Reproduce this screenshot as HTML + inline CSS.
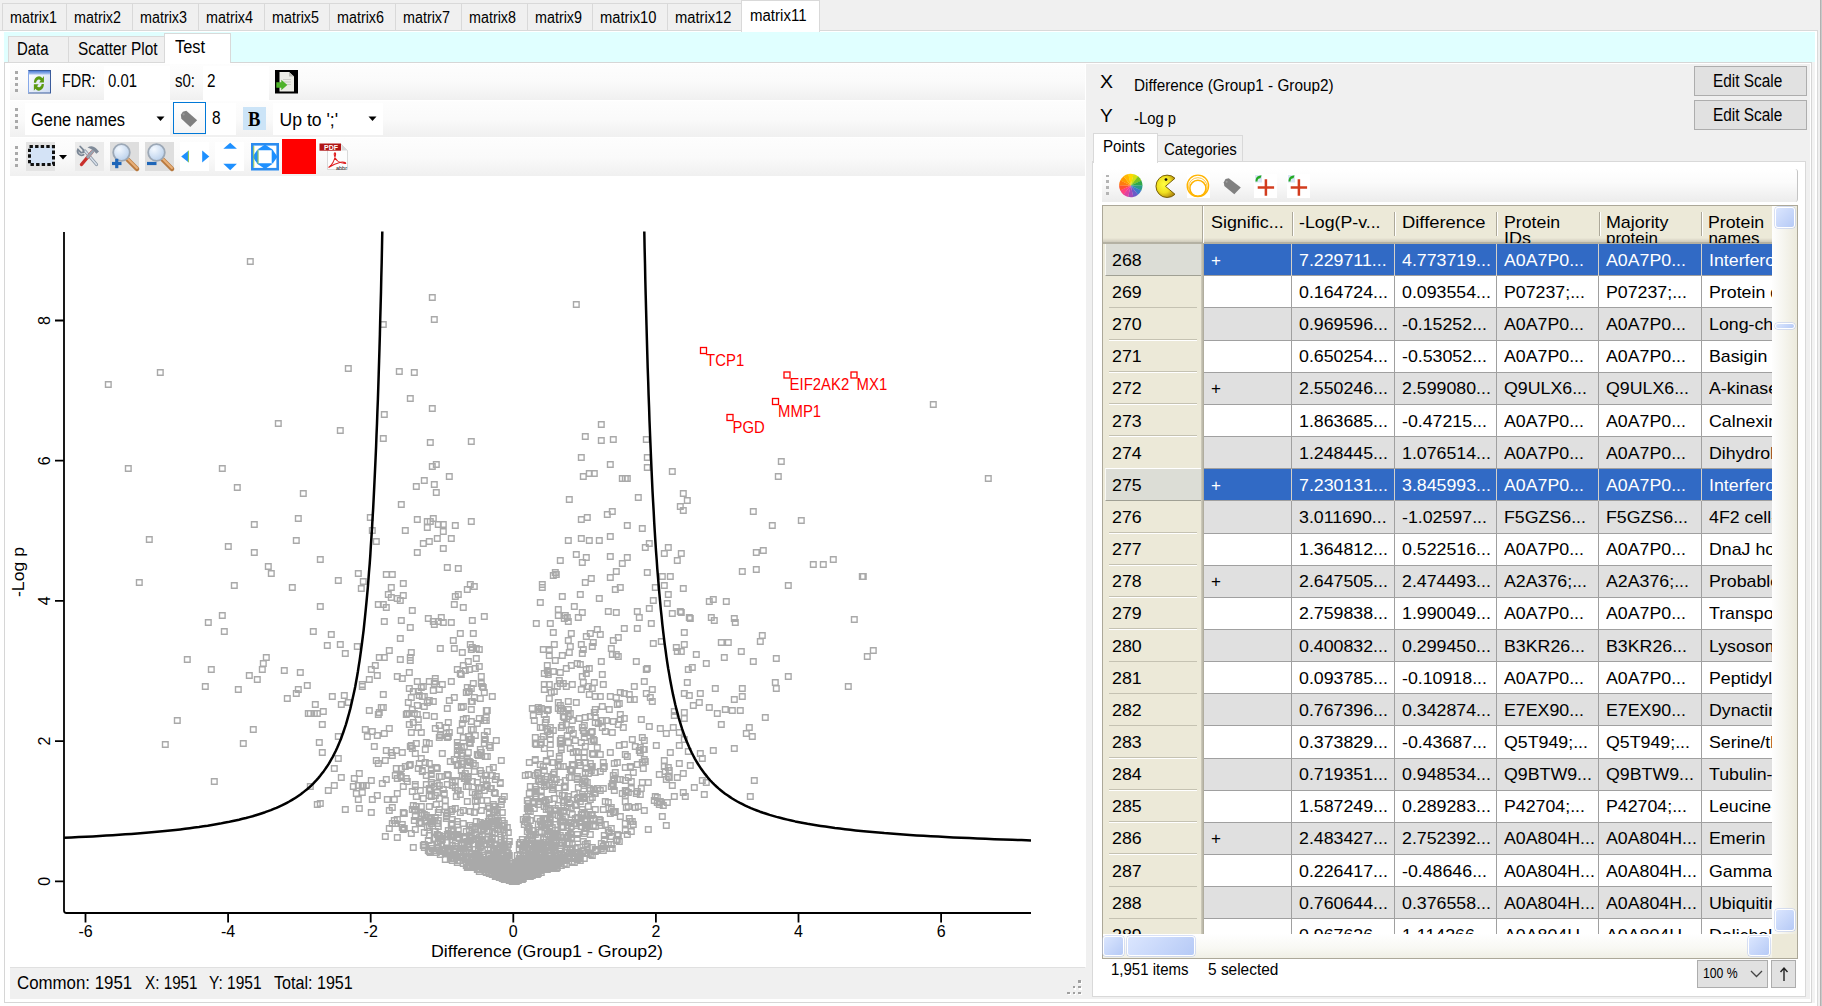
<!DOCTYPE html><html><head><meta charset="utf-8"><title>Volcano plot</title><style>html,body{margin:0;padding:0}
body{width:1822px;height:1006px;background:#f0f0f0;position:relative;overflow:hidden;font-family:"Liberation Sans",sans-serif;}
.t{position:absolute;white-space:pre;transform-origin:0 0;display:block}
.b{position:absolute;box-sizing:border-box}
svg{position:absolute;overflow:visible}
</style></head><body>
<div class="b" style="left:-1.00px;top:29.50px;width:1818.50px;height:990.00px;border:1.3px solid #d9d9d9;background:#fff"></div>
<div class="b" style="left:1820.00px;top:0.00px;width:2.00px;height:1006.00px;background:linear-gradient(90deg,#a6a6a6,#d4d4d4)"></div>
<div class="b" style="left:2.00px;top:3.00px;width:65.00px;height:28.00px;border:1px solid #d9d9d9;background:#f0f0f0"></div>
<span class="t" style="left:10.00px;top:8.90px;font-size:15.80px;line-height:17.65px;color:#000;transform:scaleX(0.9074);">matrix1</span>
<div class="b" style="left:66.00px;top:3.00px;width:67.00px;height:28.00px;border:1px solid #d9d9d9;background:#f0f0f0"></div>
<span class="t" style="left:74.00px;top:8.90px;font-size:15.80px;line-height:17.65px;color:#000;transform:scaleX(0.9074);">matrix2</span>
<div class="b" style="left:132.00px;top:3.00px;width:67.00px;height:28.00px;border:1px solid #d9d9d9;background:#f0f0f0"></div>
<span class="t" style="left:140.00px;top:8.90px;font-size:15.80px;line-height:17.65px;color:#000;transform:scaleX(0.9074);">matrix3</span>
<div class="b" style="left:198.00px;top:3.00px;width:67.00px;height:28.00px;border:1px solid #d9d9d9;background:#f0f0f0"></div>
<span class="t" style="left:206.00px;top:8.90px;font-size:15.80px;line-height:17.65px;color:#000;transform:scaleX(0.9074);">matrix4</span>
<div class="b" style="left:264.00px;top:3.00px;width:66.00px;height:28.00px;border:1px solid #d9d9d9;background:#f0f0f0"></div>
<span class="t" style="left:272.00px;top:8.90px;font-size:15.80px;line-height:17.65px;color:#000;transform:scaleX(0.9074);">matrix5</span>
<div class="b" style="left:329.00px;top:3.00px;width:67.00px;height:28.00px;border:1px solid #d9d9d9;background:#f0f0f0"></div>
<span class="t" style="left:337.00px;top:8.90px;font-size:15.80px;line-height:17.65px;color:#000;transform:scaleX(0.9074);">matrix6</span>
<div class="b" style="left:395.00px;top:3.00px;width:67.00px;height:28.00px;border:1px solid #d9d9d9;background:#f0f0f0"></div>
<span class="t" style="left:403.00px;top:8.90px;font-size:15.80px;line-height:17.65px;color:#000;transform:scaleX(0.9074);">matrix7</span>
<div class="b" style="left:461.00px;top:3.00px;width:67.00px;height:28.00px;border:1px solid #d9d9d9;background:#f0f0f0"></div>
<span class="t" style="left:469.00px;top:8.90px;font-size:15.80px;line-height:17.65px;color:#000;transform:scaleX(0.9074);">matrix8</span>
<div class="b" style="left:527.00px;top:3.00px;width:66.00px;height:28.00px;border:1px solid #d9d9d9;background:#f0f0f0"></div>
<span class="t" style="left:535.00px;top:8.90px;font-size:15.80px;line-height:17.65px;color:#000;transform:scaleX(0.9074);">matrix9</span>
<div class="b" style="left:592.00px;top:3.00px;width:76.00px;height:28.00px;border:1px solid #d9d9d9;background:#f0f0f0"></div>
<span class="t" style="left:600.00px;top:8.90px;font-size:15.80px;line-height:17.65px;color:#000;transform:scaleX(0.9326);">matrix10</span>
<div class="b" style="left:667.00px;top:3.00px;width:75.00px;height:28.00px;border:1px solid #d9d9d9;background:#f0f0f0"></div>
<span class="t" style="left:675.00px;top:8.90px;font-size:15.80px;line-height:17.65px;color:#000;transform:scaleX(0.9326);">matrix12</span>
<div class="b" style="left:741.00px;top:0.00px;width:79.00px;height:32.00px;border:1px solid #d9d9d9;border-bottom:none;background:#fff"></div>
<span class="t" style="left:750.00px;top:6.90px;font-size:15.80px;line-height:17.65px;color:#000;transform:scaleX(0.9510);">matrix11</span>
<div class="b" style="left:4.40px;top:32.00px;width:1810.70px;height:29.60px;background:#e0ffff"></div>
<div class="b" style="left:4.40px;top:61.60px;width:1810.70px;height:941.00px;background:#f3f3f3"></div>
<div class="b" style="left:4.40px;top:61.70px;width:1807.20px;height:941.00px;border:1.4px solid #d6d6d6;background:#fff"></div>
<div class="b" style="left:10.00px;top:64.00px;width:1800.00px;height:934.80px;background:#f0f0f0"></div>
<div class="b" style="left:8.00px;top:36.00px;width:61.00px;height:27.00px;border:1px solid #d9d9d9;background:#f0f0f0"></div>
<span class="t" style="left:16.50px;top:39.11px;font-size:18.00px;line-height:20.11px;color:#000;transform:scaleX(0.8285);">Data</span>
<div class="b" style="left:68.00px;top:36.00px;width:98.00px;height:27.00px;border:1px solid #d9d9d9;background:#f0f0f0"></div>
<span class="t" style="left:77.50px;top:39.11px;font-size:18.00px;line-height:20.11px;color:#000;transform:scaleX(0.8544);">Scatter Plot</span>
<div class="b" style="left:164.00px;top:33.00px;width:67.00px;height:30.00px;border:1px solid #d9d9d9;border-bottom:none;background:#fff"></div>
<span class="t" style="left:175.00px;top:37.21px;font-size:18.00px;line-height:20.11px;color:#000;transform:scaleX(0.9087);">Test</span>
<div class="b" style="left:10.00px;top:64.00px;width:1076.00px;height:903.00px;background:#fff"></div>
<div class="b" style="left:10.00px;top:64.00px;width:1075.00px;height:36.00px;background:linear-gradient(#fdfdfd,#fafafa 50%,#f0f0f0)"></div>
<div class="b" style="left:10.00px;top:101.00px;width:1075.00px;height:36.00px;background:linear-gradient(#fdfdfd,#fafafa 50%,#f0f0f0)"></div>
<div class="b" style="left:10.00px;top:138.00px;width:1075.00px;height:38.00px;background:linear-gradient(#fdfdfd,#fafafa 50%,#f0f0f0)"></div>
<div class="b" style="left:15.00px;top:71.00px;width:3.00px;height:3.00px;background:#a9a9a9"></div>
<div class="b" style="left:15.00px;top:77.00px;width:3.00px;height:3.00px;background:#a9a9a9"></div>
<div class="b" style="left:15.00px;top:83.00px;width:3.00px;height:3.00px;background:#a9a9a9"></div>
<div class="b" style="left:15.00px;top:89.00px;width:3.00px;height:3.00px;background:#a9a9a9"></div>
<div class="b" style="left:15.00px;top:108.00px;width:3.00px;height:3.00px;background:#a9a9a9"></div>
<div class="b" style="left:15.00px;top:114.00px;width:3.00px;height:3.00px;background:#a9a9a9"></div>
<div class="b" style="left:15.00px;top:120.00px;width:3.00px;height:3.00px;background:#a9a9a9"></div>
<div class="b" style="left:15.00px;top:126.00px;width:3.00px;height:3.00px;background:#a9a9a9"></div>
<div class="b" style="left:15.00px;top:146.00px;width:3.00px;height:3.00px;background:#a9a9a9"></div>
<div class="b" style="left:15.00px;top:152.00px;width:3.00px;height:3.00px;background:#a9a9a9"></div>
<div class="b" style="left:15.00px;top:158.00px;width:3.00px;height:3.00px;background:#a9a9a9"></div>
<div class="b" style="left:15.00px;top:164.00px;width:3.00px;height:3.00px;background:#a9a9a9"></div>
<span class="t" style="left:62.00px;top:71.67px;font-size:17.60px;line-height:19.66px;color:#000;transform:scaleX(0.8158);">FDR:</span>
<div class="b" style="left:104.00px;top:66.00px;width:65.50px;height:33.50px;background:#fff"></div>
<span class="t" style="left:108.00px;top:71.67px;font-size:17.60px;line-height:19.66px;color:#000;transform:scaleX(0.8465);">0.01</span>
<span class="t" style="left:175.00px;top:71.67px;font-size:17.60px;line-height:19.66px;color:#000;transform:scaleX(0.8518);">s0:</span>
<div class="b" style="left:203.00px;top:66.00px;width:66.00px;height:33.50px;background:#fff"></div>
<span class="t" style="left:207.00px;top:71.67px;font-size:17.60px;line-height:19.66px;color:#000;transform:scaleX(0.8683);">2</span>
<div class="b" style="left:25.00px;top:103.00px;width:145.00px;height:32.00px;background:#fff"></div>
<span class="t" style="left:31.00px;top:110.67px;font-size:17.60px;line-height:19.66px;color:#000;transform:scaleX(0.9328);">Gene names</span>
<svg style="left:156px;top:116px" width="10" height="6"><path d="M0.5 0.5h8l-4 4.5z" fill="#000"/></svg>
<div class="b" style="left:172.50px;top:102.00px;width:33.30px;height:32.20px;border:1.5px solid #0078d7;background:linear-gradient(#fff,#f4f4f4)"></div>
<div class="b" style="left:205.50px;top:103.00px;width:30.50px;height:32.00px;background:#fff"></div>
<span class="t" style="left:212.30px;top:108.87px;font-size:17.60px;line-height:19.66px;color:#000;transform:scaleX(0.8785);">8</span>
<div class="b" style="left:242.50px;top:107.00px;width:23.00px;height:23.00px;background:#cce4f7"></div>
<span class="t" style="left:248.00px;top:106.89px;font-size:22.00px;line-height:24.57px;color:#000;transform:scaleX(0.8451);font-weight:bold;font-family:'Liberation Serif',serif;">B</span>
<div class="b" style="left:272.50px;top:103.00px;width:110.00px;height:32.00px;background:#fff"></div>
<span class="t" style="left:279.50px;top:110.67px;font-size:17.60px;line-height:19.66px;color:#000;">Up to ';'</span>
<svg style="left:368px;top:116px" width="10" height="6"><path d="M0.5 0.5h8l-4 4.5z" fill="#000"/></svg>
<div class="b" style="left:282.00px;top:139.00px;width:33.50px;height:34.50px;background:#ff0000"></div>
<div class="b" style="left:10.00px;top:966.60px;width:1075.00px;height:32.20px;background:#f0f0f0;border-top:1px solid #e0e0e0"></div>
<span class="t" style="left:17.30px;top:973.87px;font-size:17.60px;line-height:19.66px;color:#000;transform:scaleX(0.9573);">Common: 1951</span>
<span class="t" style="left:145.20px;top:973.87px;font-size:17.60px;line-height:19.66px;color:#000;transform:scaleX(0.8669);">X: 1951</span>
<span class="t" style="left:209.40px;top:973.87px;font-size:17.60px;line-height:19.66px;color:#000;transform:scaleX(0.8810);">Y: 1951</span>
<span class="t" style="left:273.50px;top:973.87px;font-size:17.60px;line-height:19.66px;color:#000;transform:scaleX(0.9150);">Total: 1951</span>
<div class="b" style="left:1079.40px;top:981.20px;width:2.60px;height:2.60px;background:#fff"></div>
<div class="b" style="left:1078.20px;top:980.00px;width:2.60px;height:2.60px;background:#a0a0a0"></div>
<div class="b" style="left:1073.80px;top:986.95px;width:2.60px;height:2.60px;background:#fff"></div>
<div class="b" style="left:1072.60px;top:985.75px;width:2.60px;height:2.60px;background:#a0a0a0"></div>
<div class="b" style="left:1079.40px;top:986.95px;width:2.60px;height:2.60px;background:#fff"></div>
<div class="b" style="left:1078.20px;top:985.75px;width:2.60px;height:2.60px;background:#a0a0a0"></div>
<div class="b" style="left:1068.20px;top:992.70px;width:2.60px;height:2.60px;background:#fff"></div>
<div class="b" style="left:1067.00px;top:991.50px;width:2.60px;height:2.60px;background:#a0a0a0"></div>
<div class="b" style="left:1073.80px;top:992.70px;width:2.60px;height:2.60px;background:#fff"></div>
<div class="b" style="left:1072.60px;top:991.50px;width:2.60px;height:2.60px;background:#a0a0a0"></div>
<div class="b" style="left:1079.40px;top:992.70px;width:2.60px;height:2.60px;background:#fff"></div>
<div class="b" style="left:1078.20px;top:991.50px;width:2.60px;height:2.60px;background:#a0a0a0"></div>
<svg style="left:28.00px;top:70.00px" width="23" height="23.5" viewBox="0 0 23 23.5"><defs><linearGradient id="rg" x1="0" y1="0" x2="0" y2="1"><stop offset="0" stop-color="#4f7fd8"/><stop offset="1" stop-color="#b8cdf2"/></linearGradient><linearGradient id="rb" x1="0" y1="0" x2="1" y2="1"><stop offset="0" stop-color="#ffffff"/><stop offset="1" stop-color="#cfdcf3"/></linearGradient></defs>
<rect x="0.5" y="0.5" width="22" height="22.5" fill="url(#rb)" stroke="#3b5c9c"/><path d="M0.5 23V0.5" stroke="#86a8e8"/><rect x="1" y="1" width="21" height="3.6" fill="url(#rg)"/>
<g transform="translate(10.9 13.4) scale(0.95 1.28) translate(-11.5 -13)"><path d="M6.2 12.5a5.3 5.3 0 0 1 9-3.6l1.6-1.6v5h-5l1.6-1.6a3 3 0 0 0-4.9 1.8z" fill="#5b9a12"/>
<path d="M16.8 13.5a5.3 5.3 0 0 1-9 3.6l-1.6 1.6v-5h5l-1.6 1.6a3 3 0 0 0 4.9-1.8z" fill="#5b9a12"/></g></svg>
<svg style="left:275.00px;top:70.00px" width="23" height="23.5" viewBox="0 0 23 23.5"><rect width="23" height="23.5" fill="#000"/>
<path d="M4.5 2h9.5l5 4.5v15h-14.5z" fill="#ecece6"/><path d="M14 2v4.5h5z" fill="#bdbdb6"/>
<path d="M8 9.5h8M8 12h8M8 14.5h8" stroke="#c9c9c2" stroke-width="0.9"/>
<path d="M1.3 12.3h5v-2.6l6 5.3-6 5.3v-2.6h-5z" fill="#4fb32a"/></svg>
<svg style="left:170.00px;top:100.00px" width="40" height="40" viewBox="0 0 40 40"><path d="M10.87 14.82L12.85 11.66L16.3 10.87L27.17 20.26L20.26 26.88L11.36 18.77z" fill="#7f7f7f"/><circle cx="13.6" cy="14.3" r="1.1" fill="#9c9c9c"/></svg>
<div class="b" style="left:26.00px;top:142.00px;width:29.20px;height:28.50px;background:#e4e4e4"></div>
<svg style="left:28.00px;top:145.00px" width="27" height="21" viewBox="0 0 27 21"><rect x="1.5" y="1.5" width="24" height="18" fill="#d4e3f6" stroke="#111" stroke-width="3" stroke-dasharray="3.4 2.2"/></svg>
<svg style="left:58.5px;top:155px" width="9" height="6"><path d="M0 0h8l-4 4.6z" fill="#000"/></svg>
<div class="b" style="left:74.60px;top:142.00px;width:29.00px;height:28.50px;background:#ebebeb"></div>
<svg style="left:76.00px;top:143.00px" width="26" height="26" viewBox="0 0 26 26"><g stroke-linecap="round">
<path d="M20.5 21.5L9 8" stroke="#8e9aa8" stroke-width="3.2"/><path d="M20.5 21.5L9 8" stroke="#d8e0ea" stroke-width="1.4"/>
<path d="M4.2 3.5l3 3.2 0.2 2.6-2.4 0.4-3-3.2a4 4 0 0 0 5.6 5.2" fill="none" stroke="#7b8796" stroke-width="1.8"/>
<path d="M5.5 21.5L16 9" stroke="#c9302c" stroke-width="3.4"/><path d="M11.8 14L16.5 8.6" stroke="#9aa4b0" stroke-width="3"/>
<path d="M11.5 4.5c3-2.2 6.5-1.5 9 1.2l2.5 2.8-2.6 2.3-2.2-2.4c-1.5-1.8-4-2.8-6.700-3.900z" fill="#7f8a98"/>
</g></svg>
<div class="b" style="left:109.50px;top:142.00px;width:29.20px;height:28.50px;background:#dedede"></div>
<svg style="left:109.50px;top:142.00px" width="29.2" height="28.5" viewBox="0 0 29.2 28.5"><defs><radialGradient id="lg1" cx="0.35" cy="0.3" r="0.8"><stop offset="0" stop-color="#f4f9ff"/><stop offset="1" stop-color="#b5cdea"/></radialGradient></defs>
<path d="M17.5 17.5L27 27" stroke="#b97a3f" stroke-width="4.6" stroke-linecap="round"/><path d="M18 17L27 26" stroke="#e9b078" stroke-width="2" stroke-linecap="round"/>
<circle cx="11.5" cy="10.5" r="8.3" fill="url(#lg1)" stroke="#9ca8b6" stroke-width="1.8"/><path d="M2 21.5h9.5" stroke="#1f66b8" stroke-width="3.2"/><path d="M6.75 16.8v9.4" stroke="#1f66b8" stroke-width="3.2"/></svg>
<div class="b" style="left:144.70px;top:142.00px;width:29.20px;height:28.50px;background:#dedede"></div>
<svg style="left:144.70px;top:142.00px" width="29.2" height="28.5" viewBox="0 0 29.2 28.5"><defs><radialGradient id="lg0" cx="0.35" cy="0.3" r="0.8"><stop offset="0" stop-color="#f4f9ff"/><stop offset="1" stop-color="#b5cdea"/></radialGradient></defs>
<path d="M17.5 17.5L27 27" stroke="#b97a3f" stroke-width="4.6" stroke-linecap="round"/><path d="M18 17L27 26" stroke="#e9b078" stroke-width="2" stroke-linecap="round"/>
<circle cx="11.5" cy="10.5" r="8.3" fill="url(#lg0)" stroke="#9ca8b6" stroke-width="1.8"/><path d="M2 21.5h9.5" stroke="#1f66b8" stroke-width="3.2"/></svg>
<div class="b" style="left:179.80px;top:142.00px;width:29.00px;height:28.50px;background:#fff"></div>
<svg style="left:179.80px;top:142.00px" width="29" height="28.5" viewBox="0 0 29 28.5"><path d="M1.200 14.500L8.700 8.500v12z" fill="#1e90ff"/><path d="M8.400 8.800v11.400" stroke="#9acd32" stroke-width="0.9"/><path d="M29.300 14.500L22.200 8.500v12z" fill="#1e90ff"/></svg>
<div class="b" style="left:215.00px;top:142.00px;width:29.00px;height:28.50px;background:#fff"></div>
<svg style="left:215.00px;top:142.00px" width="29" height="28.5" viewBox="0 0 29 28.5"><path d="M15.200 0.800L8.300 6.800h13.600z" fill="#1e90ff"/><path d="M15.200 28.200L8.300 21.700h13.600z" fill="#1e90ff"/></svg>
<svg style="left:251.00px;top:143.00px" width="28" height="27.5" viewBox="0 0 28 27.5"><rect x="1.3" y="1.3" width="25.4" height="24.9" fill="#fff" stroke="#2b8cf0" stroke-width="2.6"/><path d="M14 1.5L5.5 7.3h17zM14 26L5.5 20.2h17zM1.5 13.75L7.3 5.5v16.500zM26.500 13.750L20.700 5.500v16.500z" fill="#1e90ff"/><path d="M7 6.5v14.500" stroke="#9acd32" stroke-width="0.900"/><path d="M2.800 3v21.500" stroke="#9acd32" stroke-width="0.900"/></svg>
<svg style="left:318.50px;top:142.00px" width="30" height="29" viewBox="0 0 30 29"><path d="M8.500 2.500h14l6 6v19h-20z" fill="#fdfdfd" stroke="#d0d0d0" stroke-width="0.800"/><path d="M22.500 2.500v6h6z" fill="#d9d9d9"/>
<path d="M9.500 25.500c3-2 6-7 7-12.500c0.500-3-1.500-3-1.200 0c0.700 5 5 8 10.700 8.500c2 0-0.500-2.200-4.500-1.200c-4 1-8 2.800-12 5.200z" fill="none" stroke="#e02020" stroke-width="1.100"/>
<rect x="0.500" y="1.500" width="21.500" height="7.200" fill="#b01515"/><text x="5" y="7.800" font-size="7" font-weight="bold" fill="#fff" font-family="Liberation Sans, sans-serif">PDF</text>
<text x="17" y="27.500" font-size="5.500" fill="#111" font-family="Liberation Sans, sans-serif">abbr</text></svg>
<svg style="left:0;top:0" width="1822" height="1006" viewBox="0 0 1822 1006" font-family="Liberation Sans, sans-serif"><path d="M64 232V910.500Q64 913 66.500 913H1031" fill="none" stroke="#000" stroke-width="1.8"/><path d="M85.5 913v9.5M228.1 913v9.5M370.7 913v9.5M513.3 913v9.5M655.9 913v9.5M798.5 913v9.5M941.1 913v9.5M64 881.3h-9M64 741.1h-9M64 600.9h-9M64 460.7h-9M64 320.5h-9" stroke="#000" stroke-width="1.8" fill="none"/><text x="85.5" y="937.3" font-size="16" text-anchor="middle">-6</text><text x="228.1" y="937.3" font-size="16" text-anchor="middle">-4</text><text x="370.7" y="937.3" font-size="16" text-anchor="middle">-2</text><text x="513.3" y="937.3" font-size="16" text-anchor="middle">0</text><text x="655.9" y="937.3" font-size="16" text-anchor="middle">2</text><text x="798.5" y="937.3" font-size="16" text-anchor="middle">4</text><text x="941.1" y="937.3" font-size="16" text-anchor="middle">6</text><text transform="translate(50.3,881.3) rotate(-90)" font-size="16" text-anchor="middle">0</text><text transform="translate(50.3,741.1) rotate(-90)" font-size="16" text-anchor="middle">2</text><text transform="translate(50.3,600.9) rotate(-90)" font-size="16" text-anchor="middle">4</text><text transform="translate(50.3,460.7) rotate(-90)" font-size="16" text-anchor="middle">6</text><text transform="translate(50.3,320.5) rotate(-90)" font-size="16" text-anchor="middle">8</text><text x="547" y="957" font-size="17" text-anchor="middle" textLength="232" lengthAdjust="spacingAndGlyphs">Difference (Group1 - Group2)</text><text transform="translate(24,572) rotate(-90)" font-size="16" text-anchor="middle" textLength="50" lengthAdjust="spacingAndGlyphs">-Log p</text><path d="M247.5 258.7h5.6v5.6h-5.6zM157.5 369.7h5.6v5.6h-5.6zM105.5 381.7h5.6v5.6h-5.6zM345.5 365.7h5.6v5.6h-5.6zM275.5 420.7h5.6v5.6h-5.6zM337.5 427.7h5.6v5.6h-5.6zM125.5 465.7h5.6v5.6h-5.6zM219.5 465.7h5.6v5.6h-5.6zM234.5 484.7h5.6v5.6h-5.6zM300.5 490.7h5.6v5.6h-5.6zM295.5 515.7h5.6v5.6h-5.6zM251.5 521.7h5.6v5.6h-5.6zM146.5 536.7h5.6v5.6h-5.6zM293.5 537.7h5.6v5.6h-5.6zM225.5 543.7h5.6v5.6h-5.6zM251.5 549.7h5.6v5.6h-5.6zM367.5 514.7h5.6v5.6h-5.6zM369.5 527.7h5.6v5.6h-5.6zM373.5 538.7h5.6v5.6h-5.6zM380.5 321.7h5.6v5.6h-5.6zM381.5 411.7h5.6v5.6h-5.6zM380.5 435.7h5.6v5.6h-5.6zM317.5 556.7h5.6v5.6h-5.6zM265.5 563.7h5.6v5.6h-5.6zM268.5 570.7h5.6v5.6h-5.6zM136.5 579.7h5.6v5.6h-5.6zM231.5 582.7h5.6v5.6h-5.6zM289.5 584.7h5.6v5.6h-5.6zM335.5 577.7h5.6v5.6h-5.6zM355.5 570.7h5.6v5.6h-5.6zM360.5 578.7h5.6v5.6h-5.6zM358.5 585.7h5.6v5.6h-5.6zM317.5 603.7h5.6v5.6h-5.6zM219.5 612.7h5.6v5.6h-5.6zM205.5 619.7h5.6v5.6h-5.6zM221.5 628.7h5.6v5.6h-5.6zM310.5 628.7h5.6v5.6h-5.6zM328.5 631.7h5.6v5.6h-5.6zM324.5 642.7h5.6v5.6h-5.6zM337.5 641.7h5.6v5.6h-5.6zM342.5 650.7h5.6v5.6h-5.6zM354.5 643.7h5.6v5.6h-5.6zM184.5 656.7h5.6v5.6h-5.6zM263.5 654.7h5.6v5.6h-5.6zM260.5 660.7h5.6v5.6h-5.6zM259.5 666.7h5.6v5.6h-5.6zM208.5 666.7h5.6v5.6h-5.6zM246.5 672.7h5.6v5.6h-5.6zM254.5 676.7h5.6v5.6h-5.6zM281.5 667.7h5.6v5.6h-5.6zM297.5 669.7h5.6v5.6h-5.6zM202.5 683.7h5.6v5.6h-5.6zM235.5 686.7h5.6v5.6h-5.6zM304.5 682.7h5.6v5.6h-5.6zM295.5 686.7h5.6v5.6h-5.6zM293.5 690.7h5.6v5.6h-5.6zM284.5 695.7h5.6v5.6h-5.6zM329.5 693.7h5.6v5.6h-5.6zM341.5 692.7h5.6v5.6h-5.6zM338.5 701.7h5.6v5.6h-5.6zM345.5 699.7h5.6v5.6h-5.6zM312.5 701.7h5.6v5.6h-5.6zM305.5 710.7h5.6v5.6h-5.6zM307.5 710.7h5.6v5.6h-5.6zM311.5 710.7h5.6v5.6h-5.6zM314.5 710.7h5.6v5.6h-5.6zM320.5 708.7h5.6v5.6h-5.6zM319.5 721.7h5.6v5.6h-5.6zM174.5 717.7h5.6v5.6h-5.6zM250.5 726.7h5.6v5.6h-5.6zM162.5 741.7h5.6v5.6h-5.6zM240.5 740.7h5.6v5.6h-5.6zM316.5 739.7h5.6v5.6h-5.6zM319.5 749.7h5.6v5.6h-5.6zM335.5 733.7h5.6v5.6h-5.6zM335.5 755.7h5.6v5.6h-5.6zM211.5 778.7h5.6v5.6h-5.6zM307.5 783.7h5.6v5.6h-5.6zM930.5 401.7h5.6v5.6h-5.6zM985.5 475.7h5.6v5.6h-5.6zM778.5 458.7h5.6v5.6h-5.6zM775.5 473.7h5.6v5.6h-5.6zM669.5 468.7h5.6v5.6h-5.6zM680.5 490.7h5.6v5.6h-5.6zM684.5 497.7h5.6v5.6h-5.6zM677.5 503.7h5.6v5.6h-5.6zM680.5 507.7h5.6v5.6h-5.6zM750.5 508.7h5.6v5.6h-5.6zM798.5 517.7h5.6v5.6h-5.6zM769.5 522.7h5.6v5.6h-5.6zM665.5 544.7h5.6v5.6h-5.6zM661.5 550.7h5.6v5.6h-5.6zM678.5 550.7h5.6v5.6h-5.6zM674.5 557.7h5.6v5.6h-5.6zM753.5 549.7h5.6v5.6h-5.6zM760.5 547.7h5.6v5.6h-5.6zM739.5 568.7h5.6v5.6h-5.6zM753.5 566.7h5.6v5.6h-5.6zM810.5 561.7h5.6v5.6h-5.6zM820.5 561.7h5.6v5.6h-5.6zM830.5 556.7h5.6v5.6h-5.6zM859.5 573.7h5.6v5.6h-5.6zM860.5 573.7h5.6v5.6h-5.6zM785.5 582.7h5.6v5.6h-5.6zM659.5 573.7h5.6v5.6h-5.6zM667.5 573.7h5.6v5.6h-5.6zM661.5 582.7h5.6v5.6h-5.6zM680.5 585.7h5.6v5.6h-5.6zM665.5 591.7h5.6v5.6h-5.6zM710.5 596.7h5.6v5.6h-5.6zM706.5 598.7h5.6v5.6h-5.6zM723.5 598.7h5.6v5.6h-5.6zM664.5 600.7h5.6v5.6h-5.6zM669.5 610.7h5.6v5.6h-5.6zM677.5 608.7h5.6v5.6h-5.6zM678.5 609.7h5.6v5.6h-5.6zM686.5 614.7h5.6v5.6h-5.6zM687.5 615.7h5.6v5.6h-5.6zM708.5 614.7h5.6v5.6h-5.6zM711.5 617.7h5.6v5.6h-5.6zM731.5 615.7h5.6v5.6h-5.6zM732.5 619.7h5.6v5.6h-5.6zM851.5 616.7h5.6v5.6h-5.6zM681.5 629.7h5.6v5.6h-5.6zM759.5 632.7h5.6v5.6h-5.6zM757.5 638.7h5.6v5.6h-5.6zM718.5 639.7h5.6v5.6h-5.6zM725.5 639.7h5.6v5.6h-5.6zM681.5 641.7h5.6v5.6h-5.6zM673.5 644.7h5.6v5.6h-5.6zM674.5 648.7h5.6v5.6h-5.6zM678.5 648.7h5.6v5.6h-5.6zM738.5 648.7h5.6v5.6h-5.6zM693.5 651.7h5.6v5.6h-5.6zM721.5 654.7h5.6v5.6h-5.6zM773.5 655.7h5.6v5.6h-5.6zM750.5 658.7h5.6v5.6h-5.6zM703.5 660.7h5.6v5.6h-5.6zM870.5 647.7h5.6v5.6h-5.6zM864.5 653.7h5.6v5.6h-5.6zM689.5 664.7h5.6v5.6h-5.6zM685.5 666.7h5.6v5.6h-5.6zM785.5 673.7h5.6v5.6h-5.6zM772.5 679.7h5.6v5.6h-5.6zM773.5 685.7h5.6v5.6h-5.6zM684.5 679.7h5.6v5.6h-5.6zM712.5 685.7h5.6v5.6h-5.6zM739.5 685.7h5.6v5.6h-5.6zM739.5 693.7h5.6v5.6h-5.6zM845.5 683.7h5.6v5.6h-5.6zM681.5 690.7h5.6v5.6h-5.6zM686.5 692.7h5.6v5.6h-5.6zM697.5 690.7h5.6v5.6h-5.6zM731.5 696.7h5.6v5.6h-5.6zM690.5 702.7h5.6v5.6h-5.6zM696.5 699.7h5.6v5.6h-5.6zM706.5 704.7h5.6v5.6h-5.6zM722.5 706.7h5.6v5.6h-5.6zM729.5 707.7h5.6v5.6h-5.6zM737.5 707.7h5.6v5.6h-5.6zM643.5 436.7h5.6v5.6h-5.6zM644.5 454.7h5.6v5.6h-5.6zM644.5 464.7h5.6v5.6h-5.6zM714.5 710.7h5.6v5.6h-5.6zM762.5 714.7h5.6v5.6h-5.6zM681.5 709.7h5.6v5.6h-5.6zM681.5 715.7h5.6v5.6h-5.6zM718.5 721.7h5.6v5.6h-5.6zM746.5 724.7h5.6v5.6h-5.6zM743.5 730.7h5.6v5.6h-5.6zM749.5 733.7h5.6v5.6h-5.6zM676.5 729.7h5.6v5.6h-5.6zM681.5 736.7h5.6v5.6h-5.6zM731.5 745.7h5.6v5.6h-5.6zM710.5 747.7h5.6v5.6h-5.6zM697.5 750.7h5.6v5.6h-5.6zM699.5 755.7h5.6v5.6h-5.6zM685.5 748.7h5.6v5.6h-5.6zM751.5 777.7h5.6v5.6h-5.6zM747.5 793.7h5.6v5.6h-5.6zM429.5 294.7h5.6v5.6h-5.6zM431.5 316.7h5.6v5.6h-5.6zM573.5 301.7h5.6v5.6h-5.6zM396.5 368.7h5.6v5.6h-5.6zM411.5 369.7h5.6v5.6h-5.6zM407.5 395.7h5.6v5.6h-5.6zM429.5 405.7h5.6v5.6h-5.6zM427.5 439.7h5.6v5.6h-5.6zM468.5 438.7h5.6v5.6h-5.6zM598.5 421.7h5.6v5.6h-5.6zM582.5 433.7h5.6v5.6h-5.6zM598.5 437.7h5.6v5.6h-5.6zM610.5 436.7h5.6v5.6h-5.6zM578.5 454.7h5.6v5.6h-5.6zM607.5 461.7h5.6v5.6h-5.6zM429.5 463.7h5.6v5.6h-5.6zM433.5 461.7h5.6v5.6h-5.6zM446.5 473.7h5.6v5.6h-5.6zM421.5 477.7h5.6v5.6h-5.6zM431.5 481.7h5.6v5.6h-5.6zM413.5 483.7h5.6v5.6h-5.6zM433.5 489.7h5.6v5.6h-5.6zM398.5 501.7h5.6v5.6h-5.6zM580.5 473.7h5.6v5.6h-5.6zM586.5 470.7h5.6v5.6h-5.6zM591.5 470.7h5.6v5.6h-5.6zM619.5 475.7h5.6v5.6h-5.6zM622.5 475.7h5.6v5.6h-5.6zM624.5 475.7h5.6v5.6h-5.6zM566.5 496.7h5.6v5.6h-5.6zM635.5 494.7h5.6v5.6h-5.6zM414.5 516.7h5.6v5.6h-5.6zM424.5 518.7h5.6v5.6h-5.6zM427.5 518.7h5.6v5.6h-5.6zM430.5 515.7h5.6v5.6h-5.6zM435.5 521.7h5.6v5.6h-5.6zM440.5 521.7h5.6v5.6h-5.6zM452.5 522.7h5.6v5.6h-5.6zM468.5 518.7h5.6v5.6h-5.6zM424.5 524.7h5.6v5.6h-5.6zM402.5 527.7h5.6v5.6h-5.6zM440.5 528.7h5.6v5.6h-5.6zM448.5 535.7h5.6v5.6h-5.6zM434.5 535.7h5.6v5.6h-5.6zM426.5 538.7h5.6v5.6h-5.6zM420.5 540.7h5.6v5.6h-5.6zM414.5 549.7h5.6v5.6h-5.6zM440.5 545.7h5.6v5.6h-5.6zM578.5 516.7h5.6v5.6h-5.6zM584.5 514.7h5.6v5.6h-5.6zM604.5 511.7h5.6v5.6h-5.6zM609.5 508.7h5.6v5.6h-5.6zM624.5 522.7h5.6v5.6h-5.6zM639.5 525.7h5.6v5.6h-5.6zM565.5 537.7h5.6v5.6h-5.6zM578.5 535.7h5.6v5.6h-5.6zM586.5 537.7h5.6v5.6h-5.6zM596.5 537.7h5.6v5.6h-5.6zM607.5 533.7h5.6v5.6h-5.6zM646.5 540.7h5.6v5.6h-5.6zM642.5 544.7h5.6v5.6h-5.6zM573.5 551.7h5.6v5.6h-5.6zM607.5 553.7h5.6v5.6h-5.6zM624.5 554.7h5.6v5.6h-5.6zM585.5 811.7h5.6v5.6h-5.6zM497.5 843.7h5.6v5.6h-5.6zM509.5 878.7h5.6v5.6h-5.6zM566.5 850.7h5.6v5.6h-5.6zM491.5 818.7h5.6v5.6h-5.6zM546.5 815.7h5.6v5.6h-5.6zM432.5 849.7h5.6v5.6h-5.6zM464.5 776.7h5.6v5.6h-5.6zM542.5 865.7h5.6v5.6h-5.6zM542.5 849.7h5.6v5.6h-5.6zM410.5 844.7h5.6v5.6h-5.6zM473.5 862.7h5.6v5.6h-5.6zM546.5 695.7h5.6v5.6h-5.6zM530.5 827.7h5.6v5.6h-5.6zM499.5 869.7h5.6v5.6h-5.6zM542.5 816.7h5.6v5.6h-5.6zM495.5 873.7h5.6v5.6h-5.6zM546.5 841.7h5.6v5.6h-5.6zM631.5 683.7h5.6v5.6h-5.6zM355.5 796.7h5.6v5.6h-5.6zM473.5 861.7h5.6v5.6h-5.6zM444.5 771.7h5.6v5.6h-5.6zM556.5 840.7h5.6v5.6h-5.6zM557.5 858.7h5.6v5.6h-5.6zM497.5 780.7h5.6v5.6h-5.6zM435.5 839.7h5.6v5.6h-5.6zM625.5 803.7h5.6v5.6h-5.6zM435.5 844.7h5.6v5.6h-5.6zM471.5 694.7h5.6v5.6h-5.6zM531.5 864.7h5.6v5.6h-5.6zM499.5 817.7h5.6v5.6h-5.6zM435.5 845.7h5.6v5.6h-5.6zM587.5 815.7h5.6v5.6h-5.6zM468.5 646.7h5.6v5.6h-5.6zM506.5 852.7h5.6v5.6h-5.6zM509.5 875.7h5.6v5.6h-5.6zM472.5 858.7h5.6v5.6h-5.6zM587.5 796.7h5.6v5.6h-5.6zM598.5 840.7h5.6v5.6h-5.6zM546.5 859.7h5.6v5.6h-5.6zM529.5 827.7h5.6v5.6h-5.6zM523.5 814.7h5.6v5.6h-5.6zM631.5 696.7h5.6v5.6h-5.6zM538.5 821.7h5.6v5.6h-5.6zM521.5 870.7h5.6v5.6h-5.6zM409.5 745.7h5.6v5.6h-5.6zM589.5 750.7h5.6v5.6h-5.6zM529.5 852.7h5.6v5.6h-5.6zM546.5 847.7h5.6v5.6h-5.6zM479.5 857.7h5.6v5.6h-5.6zM567.5 845.7h5.6v5.6h-5.6zM389.5 820.7h5.6v5.6h-5.6zM412.5 826.7h5.6v5.6h-5.6zM602.5 798.7h5.6v5.6h-5.6zM498.5 872.7h5.6v5.6h-5.6zM462.5 853.7h5.6v5.6h-5.6zM607.5 749.7h5.6v5.6h-5.6zM588.5 812.7h5.6v5.6h-5.6zM568.5 804.7h5.6v5.6h-5.6zM575.5 614.7h5.6v5.6h-5.6zM553.5 839.7h5.6v5.6h-5.6zM536.5 841.7h5.6v5.6h-5.6zM538.5 861.7h5.6v5.6h-5.6zM538.5 775.7h5.6v5.6h-5.6zM541.5 860.7h5.6v5.6h-5.6zM527.5 868.7h5.6v5.6h-5.6zM428.5 793.7h5.6v5.6h-5.6zM501.5 876.7h5.6v5.6h-5.6zM478.5 680.7h5.6v5.6h-5.6zM537.5 861.7h5.6v5.6h-5.6zM467.5 641.7h5.6v5.6h-5.6zM464.5 864.7h5.6v5.6h-5.6zM527.5 832.7h5.6v5.6h-5.6zM505.5 867.7h5.6v5.6h-5.6zM512.5 875.7h5.6v5.6h-5.6zM482.5 868.7h5.6v5.6h-5.6zM622.5 820.7h5.6v5.6h-5.6zM592.5 848.7h5.6v5.6h-5.6zM500.5 866.7h5.6v5.6h-5.6zM611.5 809.7h5.6v5.6h-5.6zM508.5 877.7h5.6v5.6h-5.6zM542.5 797.7h5.6v5.6h-5.6zM511.5 872.7h5.6v5.6h-5.6zM442.5 797.7h5.6v5.6h-5.6zM445.5 833.7h5.6v5.6h-5.6zM355.5 782.7h5.6v5.6h-5.6zM454.5 762.7h5.6v5.6h-5.6zM544.5 843.7h5.6v5.6h-5.6zM512.5 874.7h5.6v5.6h-5.6zM621.5 690.7h5.6v5.6h-5.6zM507.5 873.7h5.6v5.6h-5.6zM532.5 831.7h5.6v5.6h-5.6zM363.5 782.7h5.6v5.6h-5.6zM424.5 824.7h5.6v5.6h-5.6zM486.5 864.7h5.6v5.6h-5.6zM581.5 795.7h5.6v5.6h-5.6zM494.5 860.7h5.6v5.6h-5.6zM536.5 708.7h5.6v5.6h-5.6zM493.5 870.7h5.6v5.6h-5.6zM536.5 798.7h5.6v5.6h-5.6zM381.5 618.7h5.6v5.6h-5.6zM338.5 774.7h5.6v5.6h-5.6zM532.5 740.7h5.6v5.6h-5.6zM540.5 646.7h5.6v5.6h-5.6zM509.5 878.7h5.6v5.6h-5.6zM653.5 742.7h5.6v5.6h-5.6zM510.5 878.7h5.6v5.6h-5.6zM569.5 858.7h5.6v5.6h-5.6zM494.5 806.7h5.6v5.6h-5.6zM467.5 740.7h5.6v5.6h-5.6zM535.5 801.7h5.6v5.6h-5.6zM519.5 847.7h5.6v5.6h-5.6zM591.5 790.7h5.6v5.6h-5.6zM619.5 560.7h5.6v5.6h-5.6zM496.5 869.7h5.6v5.6h-5.6zM624.5 753.7h5.6v5.6h-5.6zM597.5 787.7h5.6v5.6h-5.6zM483.5 781.7h5.6v5.6h-5.6zM542.5 853.7h5.6v5.6h-5.6zM515.5 874.7h5.6v5.6h-5.6zM561.5 783.7h5.6v5.6h-5.6zM511.5 871.7h5.6v5.6h-5.6zM521.5 871.7h5.6v5.6h-5.6zM362.5 726.7h5.6v5.6h-5.6zM525.5 866.7h5.6v5.6h-5.6zM581.5 855.7h5.6v5.6h-5.6zM460.5 860.7h5.6v5.6h-5.6zM559.5 839.7h5.6v5.6h-5.6zM470.5 861.7h5.6v5.6h-5.6zM526.5 873.7h5.6v5.6h-5.6zM417.5 787.7h5.6v5.6h-5.6zM475.5 841.7h5.6v5.6h-5.6zM545.5 861.7h5.6v5.6h-5.6zM542.5 855.7h5.6v5.6h-5.6zM504.5 873.7h5.6v5.6h-5.6zM662.5 768.7h5.6v5.6h-5.6zM426.5 822.7h5.6v5.6h-5.6zM502.5 868.7h5.6v5.6h-5.6zM491.5 866.7h5.6v5.6h-5.6zM469.5 835.7h5.6v5.6h-5.6zM543.5 799.7h5.6v5.6h-5.6zM369.5 728.7h5.6v5.6h-5.6zM545.5 796.7h5.6v5.6h-5.6zM522.5 870.7h5.6v5.6h-5.6zM375.5 760.7h5.6v5.6h-5.6zM449.5 816.7h5.6v5.6h-5.6zM454.5 742.7h5.6v5.6h-5.6zM491.5 869.7h5.6v5.6h-5.6zM495.5 856.7h5.6v5.6h-5.6zM454.5 821.7h5.6v5.6h-5.6zM568.5 630.7h5.6v5.6h-5.6zM535.5 861.7h5.6v5.6h-5.6zM513.5 877.7h5.6v5.6h-5.6zM454.5 818.7h5.6v5.6h-5.6zM483.5 861.7h5.6v5.6h-5.6zM477.5 746.7h5.6v5.6h-5.6zM551.5 688.7h5.6v5.6h-5.6zM537.5 867.7h5.6v5.6h-5.6zM516.5 872.7h5.6v5.6h-5.6zM701.5 791.7h5.6v5.6h-5.6zM588.5 738.7h5.6v5.6h-5.6zM481.5 820.7h5.6v5.6h-5.6zM474.5 853.7h5.6v5.6h-5.6zM476.5 852.7h5.6v5.6h-5.6zM526.5 854.7h5.6v5.6h-5.6zM477.5 854.7h5.6v5.6h-5.6zM317.5 800.7h5.6v5.6h-5.6zM437.5 645.7h5.6v5.6h-5.6zM549.5 861.7h5.6v5.6h-5.6zM432.5 725.7h5.6v5.6h-5.6zM477.5 844.7h5.6v5.6h-5.6zM428.5 779.7h5.6v5.6h-5.6zM389.5 804.7h5.6v5.6h-5.6zM511.5 877.7h5.6v5.6h-5.6zM419.5 810.7h5.6v5.6h-5.6zM505.5 869.7h5.6v5.6h-5.6zM422.5 746.7h5.6v5.6h-5.6zM567.5 819.7h5.6v5.6h-5.6zM544.5 726.7h5.6v5.6h-5.6zM671.5 793.7h5.6v5.6h-5.6zM577.5 857.7h5.6v5.6h-5.6zM438.5 835.7h5.6v5.6h-5.6zM527.5 783.7h5.6v5.6h-5.6zM526.5 856.7h5.6v5.6h-5.6zM536.5 829.7h5.6v5.6h-5.6zM529.5 845.7h5.6v5.6h-5.6zM421.5 703.7h5.6v5.6h-5.6zM519.5 869.7h5.6v5.6h-5.6zM526.5 804.7h5.6v5.6h-5.6zM514.5 859.7h5.6v5.6h-5.6zM511.5 873.7h5.6v5.6h-5.6zM471.5 864.7h5.6v5.6h-5.6zM523.5 852.7h5.6v5.6h-5.6zM447.5 855.7h5.6v5.6h-5.6zM511.5 878.7h5.6v5.6h-5.6zM451.5 831.7h5.6v5.6h-5.6zM671.5 708.7h5.6v5.6h-5.6zM545.5 805.7h5.6v5.6h-5.6zM421.5 693.7h5.6v5.6h-5.6zM481.5 736.7h5.6v5.6h-5.6zM428.5 820.7h5.6v5.6h-5.6zM492.5 835.7h5.6v5.6h-5.6zM414.5 711.7h5.6v5.6h-5.6zM479.5 859.7h5.6v5.6h-5.6zM541.5 681.7h5.6v5.6h-5.6zM517.5 851.7h5.6v5.6h-5.6zM531.5 858.7h5.6v5.6h-5.6zM421.5 811.7h5.6v5.6h-5.6zM583.5 818.7h5.6v5.6h-5.6zM556.5 790.7h5.6v5.6h-5.6zM554.5 683.7h5.6v5.6h-5.6zM526.5 864.7h5.6v5.6h-5.6zM421.5 844.7h5.6v5.6h-5.6zM419.5 767.7h5.6v5.6h-5.6zM547.5 814.7h5.6v5.6h-5.6zM506.5 857.7h5.6v5.6h-5.6zM512.5 875.7h5.6v5.6h-5.6zM472.5 798.7h5.6v5.6h-5.6zM534.5 871.7h5.6v5.6h-5.6zM510.5 878.7h5.6v5.6h-5.6zM501.5 861.7h5.6v5.6h-5.6zM527.5 869.7h5.6v5.6h-5.6zM569.5 841.7h5.6v5.6h-5.6zM587.5 760.7h5.6v5.6h-5.6zM415.5 716.7h5.6v5.6h-5.6zM505.5 875.7h5.6v5.6h-5.6zM476.5 854.7h5.6v5.6h-5.6zM579.5 673.7h5.6v5.6h-5.6zM507.5 877.7h5.6v5.6h-5.6zM489.5 865.7h5.6v5.6h-5.6zM474.5 866.7h5.6v5.6h-5.6zM680.5 770.7h5.6v5.6h-5.6zM492.5 859.7h5.6v5.6h-5.6zM426.5 832.7h5.6v5.6h-5.6zM547.5 864.7h5.6v5.6h-5.6zM439.5 846.7h5.6v5.6h-5.6zM462.5 770.7h5.6v5.6h-5.6zM386.5 725.7h5.6v5.6h-5.6zM502.5 868.7h5.6v5.6h-5.6zM460.5 851.7h5.6v5.6h-5.6zM368.5 666.7h5.6v5.6h-5.6zM473.5 803.7h5.6v5.6h-5.6zM424.5 699.7h5.6v5.6h-5.6zM384.5 796.7h5.6v5.6h-5.6zM516.5 864.7h5.6v5.6h-5.6zM626.5 815.7h5.6v5.6h-5.6zM484.5 797.7h5.6v5.6h-5.6zM490.5 862.7h5.6v5.6h-5.6zM520.5 869.7h5.6v5.6h-5.6zM581.5 730.7h5.6v5.6h-5.6zM532.5 842.7h5.6v5.6h-5.6zM613.5 837.7h5.6v5.6h-5.6zM479.5 821.7h5.6v5.6h-5.6zM536.5 706.7h5.6v5.6h-5.6zM605.5 841.7h5.6v5.6h-5.6zM468.5 851.7h5.6v5.6h-5.6zM472.5 832.7h5.6v5.6h-5.6zM551.5 859.7h5.6v5.6h-5.6zM491.5 856.7h5.6v5.6h-5.6zM342.5 806.7h5.6v5.6h-5.6zM431.5 713.7h5.6v5.6h-5.6zM525.5 824.7h5.6v5.6h-5.6zM561.5 615.7h5.6v5.6h-5.6zM561.5 860.7h5.6v5.6h-5.6zM495.5 818.7h5.6v5.6h-5.6zM476.5 836.7h5.6v5.6h-5.6zM512.5 871.7h5.6v5.6h-5.6zM545.5 858.7h5.6v5.6h-5.6zM516.5 846.7h5.6v5.6h-5.6zM554.5 850.7h5.6v5.6h-5.6zM440.5 848.7h5.6v5.6h-5.6zM514.5 876.7h5.6v5.6h-5.6zM490.5 801.7h5.6v5.6h-5.6zM543.5 858.7h5.6v5.6h-5.6zM505.5 872.7h5.6v5.6h-5.6zM540.5 836.7h5.6v5.6h-5.6zM577.5 851.7h5.6v5.6h-5.6zM410.5 802.7h5.6v5.6h-5.6zM500.5 867.7h5.6v5.6h-5.6zM503.5 863.7h5.6v5.6h-5.6zM656.5 799.7h5.6v5.6h-5.6zM484.5 822.7h5.6v5.6h-5.6zM509.5 878.7h5.6v5.6h-5.6zM525.5 852.7h5.6v5.6h-5.6zM594.5 785.7h5.6v5.6h-5.6zM376.5 709.7h5.6v5.6h-5.6zM488.5 820.7h5.6v5.6h-5.6zM508.5 864.7h5.6v5.6h-5.6zM466.5 688.7h5.6v5.6h-5.6zM401.5 810.7h5.6v5.6h-5.6zM413.5 793.7h5.6v5.6h-5.6zM574.5 856.7h5.6v5.6h-5.6zM388.5 749.7h5.6v5.6h-5.6zM629.5 736.7h5.6v5.6h-5.6zM561.5 714.7h5.6v5.6h-5.6zM522.5 856.7h5.6v5.6h-5.6zM564.5 847.7h5.6v5.6h-5.6zM403.5 711.7h5.6v5.6h-5.6zM454.5 761.7h5.6v5.6h-5.6zM511.5 876.7h5.6v5.6h-5.6zM493.5 773.7h5.6v5.6h-5.6zM505.5 876.7h5.6v5.6h-5.6zM382.5 833.7h5.6v5.6h-5.6zM457.5 845.7h5.6v5.6h-5.6zM634.5 788.7h5.6v5.6h-5.6zM483.5 841.7h5.6v5.6h-5.6zM447.5 833.7h5.6v5.6h-5.6zM449.5 820.7h5.6v5.6h-5.6zM492.5 858.7h5.6v5.6h-5.6zM627.5 818.7h5.6v5.6h-5.6zM638.5 716.7h5.6v5.6h-5.6zM558.5 724.7h5.6v5.6h-5.6zM457.5 670.7h5.6v5.6h-5.6zM543.5 839.7h5.6v5.6h-5.6zM558.5 854.7h5.6v5.6h-5.6zM448.5 808.7h5.6v5.6h-5.6zM407.5 761.7h5.6v5.6h-5.6zM608.5 804.7h5.6v5.6h-5.6zM408.5 742.7h5.6v5.6h-5.6zM560.5 818.7h5.6v5.6h-5.6zM434.5 820.7h5.6v5.6h-5.6zM453.5 793.7h5.6v5.6h-5.6zM529.5 870.7h5.6v5.6h-5.6zM515.5 871.7h5.6v5.6h-5.6zM485.5 836.7h5.6v5.6h-5.6zM487.5 744.7h5.6v5.6h-5.6zM520.5 816.7h5.6v5.6h-5.6zM520.5 867.7h5.6v5.6h-5.6zM547.5 741.7h5.6v5.6h-5.6zM535.5 856.7h5.6v5.6h-5.6zM491.5 789.7h5.6v5.6h-5.6zM393.5 765.7h5.6v5.6h-5.6zM524.5 859.7h5.6v5.6h-5.6zM458.5 845.7h5.6v5.6h-5.6zM543.5 864.7h5.6v5.6h-5.6zM538.5 865.7h5.6v5.6h-5.6zM545.5 831.7h5.6v5.6h-5.6zM520.5 839.7h5.6v5.6h-5.6zM386.5 807.7h5.6v5.6h-5.6zM478.5 826.7h5.6v5.6h-5.6zM486.5 809.7h5.6v5.6h-5.6zM558.5 850.7h5.6v5.6h-5.6zM552.5 852.7h5.6v5.6h-5.6zM553.5 571.7h5.6v5.6h-5.6zM429.5 845.7h5.6v5.6h-5.6zM497.5 846.7h5.6v5.6h-5.6zM617.5 813.7h5.6v5.6h-5.6zM600.5 843.7h5.6v5.6h-5.6zM557.5 707.7h5.6v5.6h-5.6zM437.5 731.7h5.6v5.6h-5.6zM652.5 793.7h5.6v5.6h-5.6zM400.5 826.7h5.6v5.6h-5.6zM514.5 865.7h5.6v5.6h-5.6zM482.5 868.7h5.6v5.6h-5.6zM555.5 834.7h5.6v5.6h-5.6zM568.5 820.7h5.6v5.6h-5.6zM523.5 870.7h5.6v5.6h-5.6zM635.5 803.7h5.6v5.6h-5.6zM475.5 855.7h5.6v5.6h-5.6zM435.5 823.7h5.6v5.6h-5.6zM562.5 612.7h5.6v5.6h-5.6zM586.5 691.7h5.6v5.6h-5.6zM476.5 791.7h5.6v5.6h-5.6zM559.5 824.7h5.6v5.6h-5.6zM578.5 823.7h5.6v5.6h-5.6zM519.5 876.7h5.6v5.6h-5.6zM505.5 829.7h5.6v5.6h-5.6zM459.5 840.7h5.6v5.6h-5.6zM576.5 819.7h5.6v5.6h-5.6zM491.5 846.7h5.6v5.6h-5.6zM428.5 842.7h5.6v5.6h-5.6zM450.5 851.7h5.6v5.6h-5.6zM544.5 820.7h5.6v5.6h-5.6zM499.5 796.7h5.6v5.6h-5.6zM478.5 807.7h5.6v5.6h-5.6zM644.5 665.7h5.6v5.6h-5.6zM529.5 856.7h5.6v5.6h-5.6zM605.5 827.7h5.6v5.6h-5.6zM459.5 720.7h5.6v5.6h-5.6zM532.5 870.7h5.6v5.6h-5.6zM557.5 557.7h5.6v5.6h-5.6zM469.5 778.7h5.6v5.6h-5.6zM487.5 860.7h5.6v5.6h-5.6zM531.5 805.7h5.6v5.6h-5.6zM480.5 776.7h5.6v5.6h-5.6zM399.5 749.7h5.6v5.6h-5.6zM649.5 686.7h5.6v5.6h-5.6zM445.5 772.7h5.6v5.6h-5.6zM611.5 787.7h5.6v5.6h-5.6zM534.5 843.7h5.6v5.6h-5.6zM542.5 839.7h5.6v5.6h-5.6zM568.5 834.7h5.6v5.6h-5.6zM494.5 872.7h5.6v5.6h-5.6zM442.5 847.7h5.6v5.6h-5.6zM507.5 876.7h5.6v5.6h-5.6zM412.5 783.7h5.6v5.6h-5.6zM419.5 768.7h5.6v5.6h-5.6zM650.5 597.7h5.6v5.6h-5.6zM584.5 779.7h5.6v5.6h-5.6zM572.5 855.7h5.6v5.6h-5.6zM591.5 679.7h5.6v5.6h-5.6zM507.5 877.7h5.6v5.6h-5.6zM449.5 821.7h5.6v5.6h-5.6zM526.5 759.7h5.6v5.6h-5.6zM687.5 762.7h5.6v5.6h-5.6zM669.5 782.7h5.6v5.6h-5.6zM497.5 866.7h5.6v5.6h-5.6zM508.5 877.7h5.6v5.6h-5.6zM593.5 847.7h5.6v5.6h-5.6zM516.5 868.7h5.6v5.6h-5.6zM546.5 857.7h5.6v5.6h-5.6zM444.5 781.7h5.6v5.6h-5.6zM621.5 715.7h5.6v5.6h-5.6zM314.5 801.7h5.6v5.6h-5.6zM590.5 822.7h5.6v5.6h-5.6zM622.5 764.7h5.6v5.6h-5.6zM654.5 794.7h5.6v5.6h-5.6zM446.5 697.7h5.6v5.6h-5.6zM538.5 859.7h5.6v5.6h-5.6zM507.5 863.7h5.6v5.6h-5.6zM577.5 854.7h5.6v5.6h-5.6zM557.5 862.7h5.6v5.6h-5.6zM565.5 853.7h5.6v5.6h-5.6zM504.5 859.7h5.6v5.6h-5.6zM563.5 683.7h5.6v5.6h-5.6zM501.5 875.7h5.6v5.6h-5.6zM442.5 856.7h5.6v5.6h-5.6zM549.5 863.7h5.6v5.6h-5.6zM489.5 829.7h5.6v5.6h-5.6zM531.5 869.7h5.6v5.6h-5.6zM482.5 836.7h5.6v5.6h-5.6zM465.5 749.7h5.6v5.6h-5.6zM489.5 870.7h5.6v5.6h-5.6zM640.5 765.7h5.6v5.6h-5.6zM524.5 856.7h5.6v5.6h-5.6zM543.5 843.7h5.6v5.6h-5.6zM499.5 845.7h5.6v5.6h-5.6zM581.5 810.7h5.6v5.6h-5.6zM522.5 818.7h5.6v5.6h-5.6zM522.5 772.7h5.6v5.6h-5.6zM491.5 865.7h5.6v5.6h-5.6zM470.5 726.7h5.6v5.6h-5.6zM488.5 838.7h5.6v5.6h-5.6zM539.5 855.7h5.6v5.6h-5.6zM643.5 690.7h5.6v5.6h-5.6zM492.5 863.7h5.6v5.6h-5.6zM479.5 837.7h5.6v5.6h-5.6zM516.5 859.7h5.6v5.6h-5.6zM547.5 724.7h5.6v5.6h-5.6zM521.5 871.7h5.6v5.6h-5.6zM641.5 807.7h5.6v5.6h-5.6zM451.5 845.7h5.6v5.6h-5.6zM541.5 711.7h5.6v5.6h-5.6zM498.5 798.7h5.6v5.6h-5.6zM530.5 800.7h5.6v5.6h-5.6zM524.5 819.7h5.6v5.6h-5.6zM534.5 856.7h5.6v5.6h-5.6zM547.5 832.7h5.6v5.6h-5.6zM504.5 841.7h5.6v5.6h-5.6zM488.5 814.7h5.6v5.6h-5.6zM539.5 860.7h5.6v5.6h-5.6zM555.5 606.7h5.6v5.6h-5.6zM569.5 811.7h5.6v5.6h-5.6zM504.5 850.7h5.6v5.6h-5.6zM553.5 837.7h5.6v5.6h-5.6zM577.5 591.7h5.6v5.6h-5.6zM530.5 870.7h5.6v5.6h-5.6zM407.5 654.7h5.6v5.6h-5.6zM483.5 776.7h5.6v5.6h-5.6zM632.5 804.7h5.6v5.6h-5.6zM551.5 775.7h5.6v5.6h-5.6zM394.5 816.7h5.6v5.6h-5.6zM535.5 870.7h5.6v5.6h-5.6zM433.5 801.7h5.6v5.6h-5.6zM534.5 815.7h5.6v5.6h-5.6zM513.5 874.7h5.6v5.6h-5.6zM514.5 852.7h5.6v5.6h-5.6zM487.5 840.7h5.6v5.6h-5.6zM616.5 838.7h5.6v5.6h-5.6zM423.5 712.7h5.6v5.6h-5.6zM491.5 842.7h5.6v5.6h-5.6zM559.5 816.7h5.6v5.6h-5.6zM599.5 724.7h5.6v5.6h-5.6zM551.5 847.7h5.6v5.6h-5.6zM525.5 771.7h5.6v5.6h-5.6zM468.5 736.7h5.6v5.6h-5.6zM425.5 847.7h5.6v5.6h-5.6zM582.5 769.7h5.6v5.6h-5.6zM587.5 851.7h5.6v5.6h-5.6zM423.5 772.7h5.6v5.6h-5.6zM483.5 869.7h5.6v5.6h-5.6zM502.5 866.7h5.6v5.6h-5.6zM455.5 591.7h5.6v5.6h-5.6zM533.5 841.7h5.6v5.6h-5.6zM394.5 595.7h5.6v5.6h-5.6zM457.5 791.7h5.6v5.6h-5.6zM605.5 799.7h5.6v5.6h-5.6zM633.5 658.7h5.6v5.6h-5.6zM521.5 853.7h5.6v5.6h-5.6zM517.5 874.7h5.6v5.6h-5.6zM431.5 783.7h5.6v5.6h-5.6zM589.5 844.7h5.6v5.6h-5.6zM598.5 845.7h5.6v5.6h-5.6zM548.5 840.7h5.6v5.6h-5.6zM559.5 792.7h5.6v5.6h-5.6zM546.5 865.7h5.6v5.6h-5.6zM597.5 768.7h5.6v5.6h-5.6zM646.5 605.7h5.6v5.6h-5.6zM513.5 873.7h5.6v5.6h-5.6zM481.5 856.7h5.6v5.6h-5.6zM594.5 626.7h5.6v5.6h-5.6zM664.5 799.7h5.6v5.6h-5.6zM481.5 857.7h5.6v5.6h-5.6zM465.5 864.7h5.6v5.6h-5.6zM389.5 752.7h5.6v5.6h-5.6zM432.5 835.7h5.6v5.6h-5.6zM480.5 821.7h5.6v5.6h-5.6zM574.5 814.7h5.6v5.6h-5.6zM452.5 843.7h5.6v5.6h-5.6zM525.5 873.7h5.6v5.6h-5.6zM603.5 717.7h5.6v5.6h-5.6zM500.5 845.7h5.6v5.6h-5.6zM579.5 780.7h5.6v5.6h-5.6zM588.5 729.7h5.6v5.6h-5.6zM435.5 817.7h5.6v5.6h-5.6zM528.5 870.7h5.6v5.6h-5.6zM516.5 872.7h5.6v5.6h-5.6zM583.5 825.7h5.6v5.6h-5.6zM557.5 779.7h5.6v5.6h-5.6zM488.5 869.7h5.6v5.6h-5.6zM544.5 855.7h5.6v5.6h-5.6zM566.5 727.7h5.6v5.6h-5.6zM558.5 834.7h5.6v5.6h-5.6zM530.5 846.7h5.6v5.6h-5.6zM569.5 761.7h5.6v5.6h-5.6zM565.5 698.7h5.6v5.6h-5.6zM558.5 839.7h5.6v5.6h-5.6zM507.5 876.7h5.6v5.6h-5.6zM578.5 739.7h5.6v5.6h-5.6zM564.5 840.7h5.6v5.6h-5.6zM576.5 853.7h5.6v5.6h-5.6zM558.5 746.7h5.6v5.6h-5.6zM572.5 737.7h5.6v5.6h-5.6zM451.5 645.7h5.6v5.6h-5.6zM521.5 853.7h5.6v5.6h-5.6zM490.5 863.7h5.6v5.6h-5.6zM528.5 870.7h5.6v5.6h-5.6zM514.5 874.7h5.6v5.6h-5.6zM539.5 584.7h5.6v5.6h-5.6zM413.5 803.7h5.6v5.6h-5.6zM469.5 856.7h5.6v5.6h-5.6zM500.5 870.7h5.6v5.6h-5.6zM504.5 871.7h5.6v5.6h-5.6zM537.5 761.7h5.6v5.6h-5.6zM498.5 851.7h5.6v5.6h-5.6zM436.5 832.7h5.6v5.6h-5.6zM537.5 867.7h5.6v5.6h-5.6zM505.5 841.7h5.6v5.6h-5.6zM374.5 732.7h5.6v5.6h-5.6zM560.5 824.7h5.6v5.6h-5.6zM574.5 831.7h5.6v5.6h-5.6zM509.5 871.7h5.6v5.6h-5.6zM506.5 875.7h5.6v5.6h-5.6zM521.5 821.7h5.6v5.6h-5.6zM545.5 849.7h5.6v5.6h-5.6zM519.5 875.7h5.6v5.6h-5.6zM513.5 859.7h5.6v5.6h-5.6zM404.5 710.7h5.6v5.6h-5.6zM597.5 751.7h5.6v5.6h-5.6zM467.5 736.7h5.6v5.6h-5.6zM502.5 858.7h5.6v5.6h-5.6zM699.5 777.7h5.6v5.6h-5.6zM489.5 871.7h5.6v5.6h-5.6zM579.5 650.7h5.6v5.6h-5.6zM444.5 848.7h5.6v5.6h-5.6zM555.5 812.7h5.6v5.6h-5.6zM510.5 877.7h5.6v5.6h-5.6zM557.5 669.7h5.6v5.6h-5.6zM476.5 868.7h5.6v5.6h-5.6zM526.5 854.7h5.6v5.6h-5.6zM518.5 874.7h5.6v5.6h-5.6zM601.5 763.7h5.6v5.6h-5.6zM518.5 868.7h5.6v5.6h-5.6zM544.5 773.7h5.6v5.6h-5.6zM536.5 846.7h5.6v5.6h-5.6zM514.5 869.7h5.6v5.6h-5.6zM587.5 787.7h5.6v5.6h-5.6zM549.5 786.7h5.6v5.6h-5.6zM473.5 818.7h5.6v5.6h-5.6zM518.5 875.7h5.6v5.6h-5.6zM492.5 867.7h5.6v5.6h-5.6zM432.5 828.7h5.6v5.6h-5.6zM552.5 805.7h5.6v5.6h-5.6zM546.5 836.7h5.6v5.6h-5.6zM505.5 871.7h5.6v5.6h-5.6zM505.5 867.7h5.6v5.6h-5.6zM514.5 874.7h5.6v5.6h-5.6zM562.5 777.7h5.6v5.6h-5.6zM551.5 795.7h5.6v5.6h-5.6zM523.5 858.7h5.6v5.6h-5.6zM520.5 852.7h5.6v5.6h-5.6zM397.5 635.7h5.6v5.6h-5.6zM541.5 779.7h5.6v5.6h-5.6zM575.5 759.7h5.6v5.6h-5.6zM663.5 776.7h5.6v5.6h-5.6zM466.5 826.7h5.6v5.6h-5.6zM475.5 858.7h5.6v5.6h-5.6zM449.5 806.7h5.6v5.6h-5.6zM449.5 779.7h5.6v5.6h-5.6zM481.5 740.7h5.6v5.6h-5.6zM615.5 653.7h5.6v5.6h-5.6zM587.5 713.7h5.6v5.6h-5.6zM482.5 865.7h5.6v5.6h-5.6zM498.5 801.7h5.6v5.6h-5.6zM516.5 872.7h5.6v5.6h-5.6zM393.5 747.7h5.6v5.6h-5.6zM525.5 869.7h5.6v5.6h-5.6zM509.5 877.7h5.6v5.6h-5.6zM411.5 806.7h5.6v5.6h-5.6zM452.5 777.7h5.6v5.6h-5.6zM492.5 790.7h5.6v5.6h-5.6zM421.5 829.7h5.6v5.6h-5.6zM651.5 797.7h5.6v5.6h-5.6zM503.5 867.7h5.6v5.6h-5.6zM557.5 842.7h5.6v5.6h-5.6zM418.5 755.7h5.6v5.6h-5.6zM541.5 815.7h5.6v5.6h-5.6zM550.5 668.7h5.6v5.6h-5.6zM565.5 832.7h5.6v5.6h-5.6zM461.5 743.7h5.6v5.6h-5.6zM546.5 796.7h5.6v5.6h-5.6zM416.5 819.7h5.6v5.6h-5.6zM503.5 871.7h5.6v5.6h-5.6zM452.5 840.7h5.6v5.6h-5.6zM473.5 645.7h5.6v5.6h-5.6zM488.5 863.7h5.6v5.6h-5.6zM491.5 822.7h5.6v5.6h-5.6zM532.5 854.7h5.6v5.6h-5.6zM490.5 845.7h5.6v5.6h-5.6zM500.5 865.7h5.6v5.6h-5.6zM564.5 804.7h5.6v5.6h-5.6zM458.5 752.7h5.6v5.6h-5.6zM598.5 658.7h5.6v5.6h-5.6zM447.5 758.7h5.6v5.6h-5.6zM511.5 877.7h5.6v5.6h-5.6zM589.5 685.7h5.6v5.6h-5.6zM495.5 868.7h5.6v5.6h-5.6zM454.5 747.7h5.6v5.6h-5.6zM451.5 848.7h5.6v5.6h-5.6zM499.5 875.7h5.6v5.6h-5.6zM502.5 869.7h5.6v5.6h-5.6zM516.5 871.7h5.6v5.6h-5.6zM455.5 831.7h5.6v5.6h-5.6zM580.5 847.7h5.6v5.6h-5.6zM547.5 852.7h5.6v5.6h-5.6zM552.5 856.7h5.6v5.6h-5.6zM490.5 808.7h5.6v5.6h-5.6zM477.5 819.7h5.6v5.6h-5.6zM585.5 803.7h5.6v5.6h-5.6zM548.5 774.7h5.6v5.6h-5.6zM534.5 856.7h5.6v5.6h-5.6zM561.5 797.7h5.6v5.6h-5.6zM459.5 840.7h5.6v5.6h-5.6zM527.5 866.7h5.6v5.6h-5.6zM486.5 859.7h5.6v5.6h-5.6zM478.5 839.7h5.6v5.6h-5.6zM526.5 834.7h5.6v5.6h-5.6zM565.5 739.7h5.6v5.6h-5.6zM481.5 825.7h5.6v5.6h-5.6zM478.5 862.7h5.6v5.6h-5.6zM503.5 873.7h5.6v5.6h-5.6zM473.5 850.7h5.6v5.6h-5.6zM505.5 875.7h5.6v5.6h-5.6zM531.5 851.7h5.6v5.6h-5.6zM391.5 796.7h5.6v5.6h-5.6zM578.5 818.7h5.6v5.6h-5.6zM331.5 782.7h5.6v5.6h-5.6zM475.5 856.7h5.6v5.6h-5.6zM410.5 688.7h5.6v5.6h-5.6zM398.5 773.7h5.6v5.6h-5.6zM427.5 849.7h5.6v5.6h-5.6zM492.5 841.7h5.6v5.6h-5.6zM592.5 806.7h5.6v5.6h-5.6zM560.5 708.7h5.6v5.6h-5.6zM538.5 856.7h5.6v5.6h-5.6zM490.5 851.7h5.6v5.6h-5.6zM564.5 835.7h5.6v5.6h-5.6zM617.5 716.7h5.6v5.6h-5.6zM491.5 857.7h5.6v5.6h-5.6zM542.5 820.7h5.6v5.6h-5.6zM506.5 838.7h5.6v5.6h-5.6zM511.5 877.7h5.6v5.6h-5.6zM597.5 817.7h5.6v5.6h-5.6zM525.5 800.7h5.6v5.6h-5.6zM522.5 858.7h5.6v5.6h-5.6zM517.5 871.7h5.6v5.6h-5.6zM561.5 792.7h5.6v5.6h-5.6zM550.5 864.7h5.6v5.6h-5.6zM575.5 784.7h5.6v5.6h-5.6zM455.5 761.7h5.6v5.6h-5.6zM520.5 875.7h5.6v5.6h-5.6zM479.5 858.7h5.6v5.6h-5.6zM547.5 859.7h5.6v5.6h-5.6zM516.5 873.7h5.6v5.6h-5.6zM474.5 793.7h5.6v5.6h-5.6zM475.5 848.7h5.6v5.6h-5.6zM589.5 852.7h5.6v5.6h-5.6zM490.5 863.7h5.6v5.6h-5.6zM474.5 797.7h5.6v5.6h-5.6zM484.5 707.7h5.6v5.6h-5.6zM495.5 850.7h5.6v5.6h-5.6zM506.5 874.7h5.6v5.6h-5.6zM502.5 844.7h5.6v5.6h-5.6zM473.5 854.7h5.6v5.6h-5.6zM551.5 853.7h5.6v5.6h-5.6zM463.5 828.7h5.6v5.6h-5.6zM628.5 828.7h5.6v5.6h-5.6zM525.5 866.7h5.6v5.6h-5.6zM508.5 874.7h5.6v5.6h-5.6zM567.5 830.7h5.6v5.6h-5.6zM572.5 815.7h5.6v5.6h-5.6zM470.5 854.7h5.6v5.6h-5.6zM407.5 657.7h5.6v5.6h-5.6zM572.5 802.7h5.6v5.6h-5.6zM566.5 649.7h5.6v5.6h-5.6zM586.5 665.7h5.6v5.6h-5.6zM554.5 831.7h5.6v5.6h-5.6zM524.5 870.7h5.6v5.6h-5.6zM368.5 809.7h5.6v5.6h-5.6zM538.5 787.7h5.6v5.6h-5.6zM494.5 859.7h5.6v5.6h-5.6zM610.5 637.7h5.6v5.6h-5.6zM477.5 749.7h5.6v5.6h-5.6zM676.5 760.7h5.6v5.6h-5.6zM564.5 834.7h5.6v5.6h-5.6zM486.5 816.7h5.6v5.6h-5.6zM464.5 798.7h5.6v5.6h-5.6zM583.5 633.7h5.6v5.6h-5.6zM518.5 872.7h5.6v5.6h-5.6zM589.5 811.7h5.6v5.6h-5.6zM522.5 866.7h5.6v5.6h-5.6zM383.5 604.7h5.6v5.6h-5.6zM407.5 624.7h5.6v5.6h-5.6zM547.5 856.7h5.6v5.6h-5.6zM550.5 629.7h5.6v5.6h-5.6zM533.5 869.7h5.6v5.6h-5.6zM549.5 844.7h5.6v5.6h-5.6zM550.5 842.7h5.6v5.6h-5.6zM529.5 872.7h5.6v5.6h-5.6zM489.5 834.7h5.6v5.6h-5.6zM494.5 870.7h5.6v5.6h-5.6zM541.5 783.7h5.6v5.6h-5.6zM418.5 803.7h5.6v5.6h-5.6zM484.5 856.7h5.6v5.6h-5.6zM416.5 692.7h5.6v5.6h-5.6zM663.5 822.7h5.6v5.6h-5.6zM516.5 841.7h5.6v5.6h-5.6zM509.5 874.7h5.6v5.6h-5.6zM575.5 815.7h5.6v5.6h-5.6zM614.5 759.7h5.6v5.6h-5.6zM657.5 725.7h5.6v5.6h-5.6zM400.5 783.7h5.6v5.6h-5.6zM508.5 868.7h5.6v5.6h-5.6zM568.5 662.7h5.6v5.6h-5.6zM489.5 772.7h5.6v5.6h-5.6zM612.5 808.7h5.6v5.6h-5.6zM484.5 866.7h5.6v5.6h-5.6zM565.5 853.7h5.6v5.6h-5.6zM494.5 813.7h5.6v5.6h-5.6zM462.5 667.7h5.6v5.6h-5.6zM404.5 778.7h5.6v5.6h-5.6zM610.5 718.7h5.6v5.6h-5.6zM526.5 826.7h5.6v5.6h-5.6zM507.5 877.7h5.6v5.6h-5.6zM550.5 837.7h5.6v5.6h-5.6zM397.5 772.7h5.6v5.6h-5.6zM583.5 633.7h5.6v5.6h-5.6zM572.5 845.7h5.6v5.6h-5.6zM411.5 817.7h5.6v5.6h-5.6zM568.5 767.7h5.6v5.6h-5.6zM616.5 700.7h5.6v5.6h-5.6zM435.5 618.7h5.6v5.6h-5.6zM351.5 775.7h5.6v5.6h-5.6zM547.5 731.7h5.6v5.6h-5.6zM498.5 874.7h5.6v5.6h-5.6zM498.5 861.7h5.6v5.6h-5.6zM601.5 832.7h5.6v5.6h-5.6zM526.5 825.7h5.6v5.6h-5.6zM521.5 869.7h5.6v5.6h-5.6zM590.5 815.7h5.6v5.6h-5.6zM544.5 707.7h5.6v5.6h-5.6zM503.5 876.7h5.6v5.6h-5.6zM582.5 821.7h5.6v5.6h-5.6zM553.5 865.7h5.6v5.6h-5.6zM614.5 776.7h5.6v5.6h-5.6zM516.5 872.7h5.6v5.6h-5.6zM441.5 790.7h5.6v5.6h-5.6zM547.5 864.7h5.6v5.6h-5.6zM518.5 876.7h5.6v5.6h-5.6zM480.5 684.7h5.6v5.6h-5.6zM666.5 774.7h5.6v5.6h-5.6zM564.5 822.7h5.6v5.6h-5.6zM508.5 866.7h5.6v5.6h-5.6zM492.5 830.7h5.6v5.6h-5.6zM515.5 873.7h5.6v5.6h-5.6zM570.5 730.7h5.6v5.6h-5.6zM492.5 873.7h5.6v5.6h-5.6zM557.5 845.7h5.6v5.6h-5.6zM520.5 858.7h5.6v5.6h-5.6zM517.5 861.7h5.6v5.6h-5.6zM501.5 832.7h5.6v5.6h-5.6zM433.5 849.7h5.6v5.6h-5.6zM448.5 828.7h5.6v5.6h-5.6zM629.5 818.7h5.6v5.6h-5.6zM450.5 833.7h5.6v5.6h-5.6zM544.5 816.7h5.6v5.6h-5.6zM553.5 807.7h5.6v5.6h-5.6zM666.5 767.7h5.6v5.6h-5.6zM502.5 874.7h5.6v5.6h-5.6zM481.5 863.7h5.6v5.6h-5.6zM464.5 854.7h5.6v5.6h-5.6zM473.5 655.7h5.6v5.6h-5.6zM464.5 838.7h5.6v5.6h-5.6zM601.5 836.7h5.6v5.6h-5.6zM527.5 808.7h5.6v5.6h-5.6zM512.5 876.7h5.6v5.6h-5.6zM550.5 784.7h5.6v5.6h-5.6zM457.5 857.7h5.6v5.6h-5.6zM557.5 737.7h5.6v5.6h-5.6zM494.5 871.7h5.6v5.6h-5.6zM472.5 791.7h5.6v5.6h-5.6zM463.5 689.7h5.6v5.6h-5.6zM512.5 876.7h5.6v5.6h-5.6zM539.5 865.7h5.6v5.6h-5.6zM565.5 793.7h5.6v5.6h-5.6zM471.5 809.7h5.6v5.6h-5.6zM520.5 843.7h5.6v5.6h-5.6zM547.5 750.7h5.6v5.6h-5.6zM474.5 720.7h5.6v5.6h-5.6zM640.5 746.7h5.6v5.6h-5.6zM703.5 779.7h5.6v5.6h-5.6zM325.5 787.7h5.6v5.6h-5.6zM518.5 871.7h5.6v5.6h-5.6zM423.5 812.7h5.6v5.6h-5.6zM654.5 799.7h5.6v5.6h-5.6zM519.5 846.7h5.6v5.6h-5.6zM485.5 865.7h5.6v5.6h-5.6zM538.5 794.7h5.6v5.6h-5.6zM524.5 816.7h5.6v5.6h-5.6zM558.5 744.7h5.6v5.6h-5.6zM431.5 828.7h5.6v5.6h-5.6zM439.5 681.7h5.6v5.6h-5.6zM581.5 734.7h5.6v5.6h-5.6zM550.5 759.7h5.6v5.6h-5.6zM492.5 835.7h5.6v5.6h-5.6zM494.5 873.7h5.6v5.6h-5.6zM513.5 876.7h5.6v5.6h-5.6zM486.5 805.7h5.6v5.6h-5.6zM633.5 790.7h5.6v5.6h-5.6zM538.5 869.7h5.6v5.6h-5.6zM482.5 753.7h5.6v5.6h-5.6zM513.5 868.7h5.6v5.6h-5.6zM380.5 704.7h5.6v5.6h-5.6zM540.5 841.7h5.6v5.6h-5.6zM492.5 803.7h5.6v5.6h-5.6zM451.5 694.7h5.6v5.6h-5.6zM461.5 835.7h5.6v5.6h-5.6zM645.5 826.7h5.6v5.6h-5.6zM418.5 812.7h5.6v5.6h-5.6zM509.5 873.7h5.6v5.6h-5.6zM478.5 752.7h5.6v5.6h-5.6zM519.5 868.7h5.6v5.6h-5.6zM627.5 764.7h5.6v5.6h-5.6zM657.5 798.7h5.6v5.6h-5.6zM350.5 783.7h5.6v5.6h-5.6zM503.5 875.7h5.6v5.6h-5.6zM520.5 842.7h5.6v5.6h-5.6zM473.5 859.7h5.6v5.6h-5.6zM537.5 599.7h5.6v5.6h-5.6zM440.5 619.7h5.6v5.6h-5.6zM507.5 876.7h5.6v5.6h-5.6zM656.5 801.7h5.6v5.6h-5.6zM471.5 862.7h5.6v5.6h-5.6zM504.5 876.7h5.6v5.6h-5.6zM533.5 866.7h5.6v5.6h-5.6zM660.5 802.7h5.6v5.6h-5.6zM495.5 852.7h5.6v5.6h-5.6zM512.5 870.7h5.6v5.6h-5.6zM554.5 855.7h5.6v5.6h-5.6zM460.5 860.7h5.6v5.6h-5.6zM485.5 851.7h5.6v5.6h-5.6zM582.5 714.7h5.6v5.6h-5.6zM504.5 867.7h5.6v5.6h-5.6zM577.5 661.7h5.6v5.6h-5.6zM502.5 873.7h5.6v5.6h-5.6zM569.5 846.7h5.6v5.6h-5.6zM460.5 807.7h5.6v5.6h-5.6zM479.5 846.7h5.6v5.6h-5.6zM551.5 807.7h5.6v5.6h-5.6zM542.5 776.7h5.6v5.6h-5.6zM560.5 852.7h5.6v5.6h-5.6zM544.5 863.7h5.6v5.6h-5.6zM423.5 817.7h5.6v5.6h-5.6zM524.5 805.7h5.6v5.6h-5.6zM602.5 728.7h5.6v5.6h-5.6zM542.5 797.7h5.6v5.6h-5.6zM515.5 873.7h5.6v5.6h-5.6zM614.5 836.7h5.6v5.6h-5.6zM538.5 828.7h5.6v5.6h-5.6zM598.5 822.7h5.6v5.6h-5.6zM426.5 697.7h5.6v5.6h-5.6zM375.5 711.7h5.6v5.6h-5.6zM526.5 859.7h5.6v5.6h-5.6zM503.5 868.7h5.6v5.6h-5.6zM505.5 865.7h5.6v5.6h-5.6zM523.5 868.7h5.6v5.6h-5.6zM458.5 671.7h5.6v5.6h-5.6zM496.5 874.7h5.6v5.6h-5.6zM436.5 847.7h5.6v5.6h-5.6zM443.5 730.7h5.6v5.6h-5.6zM527.5 871.7h5.6v5.6h-5.6zM582.5 841.7h5.6v5.6h-5.6zM457.5 809.7h5.6v5.6h-5.6zM643.5 666.7h5.6v5.6h-5.6zM528.5 871.7h5.6v5.6h-5.6zM533.5 786.7h5.6v5.6h-5.6zM676.5 742.7h5.6v5.6h-5.6zM580.5 793.7h5.6v5.6h-5.6zM479.5 856.7h5.6v5.6h-5.6zM436.5 806.7h5.6v5.6h-5.6zM428.5 815.7h5.6v5.6h-5.6zM634.5 761.7h5.6v5.6h-5.6zM451.5 855.7h5.6v5.6h-5.6zM536.5 849.7h5.6v5.6h-5.6zM521.5 858.7h5.6v5.6h-5.6zM423.5 739.7h5.6v5.6h-5.6zM447.5 848.7h5.6v5.6h-5.6zM466.5 739.7h5.6v5.6h-5.6zM559.5 652.7h5.6v5.6h-5.6zM505.5 863.7h5.6v5.6h-5.6zM488.5 855.7h5.6v5.6h-5.6zM639.5 779.7h5.6v5.6h-5.6zM564.5 855.7h5.6v5.6h-5.6zM523.5 855.7h5.6v5.6h-5.6zM547.5 850.7h5.6v5.6h-5.6zM467.5 759.7h5.6v5.6h-5.6zM444.5 734.7h5.6v5.6h-5.6zM386.5 825.7h5.6v5.6h-5.6zM535.5 821.7h5.6v5.6h-5.6zM510.5 875.7h5.6v5.6h-5.6zM422.5 818.7h5.6v5.6h-5.6zM622.5 798.7h5.6v5.6h-5.6zM527.5 873.7h5.6v5.6h-5.6zM551.5 844.7h5.6v5.6h-5.6zM406.5 685.7h5.6v5.6h-5.6zM579.5 848.7h5.6v5.6h-5.6zM401.5 825.7h5.6v5.6h-5.6zM493.5 873.7h5.6v5.6h-5.6zM508.5 876.7h5.6v5.6h-5.6zM479.5 865.7h5.6v5.6h-5.6zM510.5 878.7h5.6v5.6h-5.6zM520.5 860.7h5.6v5.6h-5.6zM471.5 826.7h5.6v5.6h-5.6zM528.5 863.7h5.6v5.6h-5.6zM571.5 859.7h5.6v5.6h-5.6zM454.5 666.7h5.6v5.6h-5.6zM574.5 773.7h5.6v5.6h-5.6zM522.5 871.7h5.6v5.6h-5.6zM399.5 821.7h5.6v5.6h-5.6zM487.5 858.7h5.6v5.6h-5.6zM483.5 707.7h5.6v5.6h-5.6zM388.5 594.7h5.6v5.6h-5.6zM691.5 784.7h5.6v5.6h-5.6zM594.5 744.7h5.6v5.6h-5.6zM561.5 808.7h5.6v5.6h-5.6zM469.5 789.7h5.6v5.6h-5.6zM522.5 841.7h5.6v5.6h-5.6zM508.5 869.7h5.6v5.6h-5.6zM506.5 867.7h5.6v5.6h-5.6zM539.5 866.7h5.6v5.6h-5.6zM498.5 839.7h5.6v5.6h-5.6zM444.5 810.7h5.6v5.6h-5.6zM532.5 868.7h5.6v5.6h-5.6zM515.5 858.7h5.6v5.6h-5.6zM410.5 719.7h5.6v5.6h-5.6zM592.5 714.7h5.6v5.6h-5.6zM555.5 858.7h5.6v5.6h-5.6zM535.5 851.7h5.6v5.6h-5.6zM449.5 842.7h5.6v5.6h-5.6zM579.5 806.7h5.6v5.6h-5.6zM487.5 865.7h5.6v5.6h-5.6zM609.5 845.7h5.6v5.6h-5.6zM494.5 871.7h5.6v5.6h-5.6zM539.5 724.7h5.6v5.6h-5.6zM464.5 840.7h5.6v5.6h-5.6zM557.5 814.7h5.6v5.6h-5.6zM592.5 823.7h5.6v5.6h-5.6zM474.5 751.7h5.6v5.6h-5.6zM449.5 782.7h5.6v5.6h-5.6zM540.5 733.7h5.6v5.6h-5.6zM516.5 875.7h5.6v5.6h-5.6zM550.5 572.7h5.6v5.6h-5.6zM511.5 875.7h5.6v5.6h-5.6zM608.5 825.7h5.6v5.6h-5.6zM497.5 863.7h5.6v5.6h-5.6zM488.5 867.7h5.6v5.6h-5.6zM479.5 683.7h5.6v5.6h-5.6zM476.5 646.7h5.6v5.6h-5.6zM511.5 875.7h5.6v5.6h-5.6zM531.5 857.7h5.6v5.6h-5.6zM443.5 812.7h5.6v5.6h-5.6zM582.5 743.7h5.6v5.6h-5.6zM508.5 876.7h5.6v5.6h-5.6zM481.5 732.7h5.6v5.6h-5.6zM478.5 749.7h5.6v5.6h-5.6zM392.5 820.7h5.6v5.6h-5.6zM585.5 850.7h5.6v5.6h-5.6zM630.5 821.7h5.6v5.6h-5.6zM511.5 878.7h5.6v5.6h-5.6zM465.5 841.7h5.6v5.6h-5.6zM463.5 862.7h5.6v5.6h-5.6zM455.5 787.7h5.6v5.6h-5.6zM430.5 687.7h5.6v5.6h-5.6zM454.5 834.7h5.6v5.6h-5.6zM545.5 820.7h5.6v5.6h-5.6zM542.5 856.7h5.6v5.6h-5.6zM469.5 644.7h5.6v5.6h-5.6zM583.5 670.7h5.6v5.6h-5.6zM486.5 853.7h5.6v5.6h-5.6zM610.5 808.7h5.6v5.6h-5.6zM454.5 787.7h5.6v5.6h-5.6zM530.5 865.7h5.6v5.6h-5.6zM574.5 795.7h5.6v5.6h-5.6zM573.5 699.7h5.6v5.6h-5.6zM436.5 773.7h5.6v5.6h-5.6zM501.5 822.7h5.6v5.6h-5.6zM680.5 789.7h5.6v5.6h-5.6zM527.5 858.7h5.6v5.6h-5.6zM585.5 770.7h5.6v5.6h-5.6zM557.5 702.7h5.6v5.6h-5.6zM600.5 681.7h5.6v5.6h-5.6zM511.5 878.7h5.6v5.6h-5.6zM636.5 614.7h5.6v5.6h-5.6zM556.5 755.7h5.6v5.6h-5.6zM374.5 672.7h5.6v5.6h-5.6zM442.5 850.7h5.6v5.6h-5.6zM545.5 669.7h5.6v5.6h-5.6zM485.5 818.7h5.6v5.6h-5.6zM408.5 830.7h5.6v5.6h-5.6zM481.5 823.7h5.6v5.6h-5.6zM607.5 574.7h5.6v5.6h-5.6zM572.5 849.7h5.6v5.6h-5.6zM415.5 688.7h5.6v5.6h-5.6zM559.5 593.7h5.6v5.6h-5.6zM544.5 847.7h5.6v5.6h-5.6zM627.5 696.7h5.6v5.6h-5.6zM535.5 834.7h5.6v5.6h-5.6zM510.5 878.7h5.6v5.6h-5.6zM493.5 852.7h5.6v5.6h-5.6zM546.5 782.7h5.6v5.6h-5.6zM468.5 698.7h5.6v5.6h-5.6zM509.5 877.7h5.6v5.6h-5.6zM582.5 778.7h5.6v5.6h-5.6zM490.5 851.7h5.6v5.6h-5.6zM478.5 797.7h5.6v5.6h-5.6zM477.5 695.7h5.6v5.6h-5.6zM521.5 860.7h5.6v5.6h-5.6zM495.5 819.7h5.6v5.6h-5.6zM466.5 863.7h5.6v5.6h-5.6zM546.5 647.7h5.6v5.6h-5.6zM460.5 604.7h5.6v5.6h-5.6zM504.5 824.7h5.6v5.6h-5.6zM513.5 877.7h5.6v5.6h-5.6zM507.5 866.7h5.6v5.6h-5.6zM517.5 875.7h5.6v5.6h-5.6zM492.5 853.7h5.6v5.6h-5.6zM641.5 678.7h5.6v5.6h-5.6zM552.5 827.7h5.6v5.6h-5.6zM501.5 874.7h5.6v5.6h-5.6zM574.5 844.7h5.6v5.6h-5.6zM504.5 876.7h5.6v5.6h-5.6zM485.5 827.7h5.6v5.6h-5.6zM615.5 634.7h5.6v5.6h-5.6zM661.5 757.7h5.6v5.6h-5.6zM600.5 847.7h5.6v5.6h-5.6zM477.5 843.7h5.6v5.6h-5.6zM543.5 863.7h5.6v5.6h-5.6zM479.5 822.7h5.6v5.6h-5.6zM469.5 861.7h5.6v5.6h-5.6zM535.5 704.7h5.6v5.6h-5.6zM538.5 775.7h5.6v5.6h-5.6zM533.5 793.7h5.6v5.6h-5.6zM528.5 859.7h5.6v5.6h-5.6zM456.5 857.7h5.6v5.6h-5.6zM462.5 833.7h5.6v5.6h-5.6zM504.5 873.7h5.6v5.6h-5.6zM559.5 823.7h5.6v5.6h-5.6zM432.5 847.7h5.6v5.6h-5.6zM426.5 678.7h5.6v5.6h-5.6zM602.5 821.7h5.6v5.6h-5.6zM503.5 853.7h5.6v5.6h-5.6zM501.5 869.7h5.6v5.6h-5.6zM542.5 857.7h5.6v5.6h-5.6zM408.5 649.7h5.6v5.6h-5.6zM436.5 795.7h5.6v5.6h-5.6zM433.5 764.7h5.6v5.6h-5.6zM434.5 831.7h5.6v5.6h-5.6zM512.5 878.7h5.6v5.6h-5.6zM571.5 850.7h5.6v5.6h-5.6zM483.5 856.7h5.6v5.6h-5.6zM501.5 866.7h5.6v5.6h-5.6zM552.5 657.7h5.6v5.6h-5.6zM511.5 875.7h5.6v5.6h-5.6zM515.5 875.7h5.6v5.6h-5.6zM479.5 833.7h5.6v5.6h-5.6zM645.5 779.7h5.6v5.6h-5.6zM608.5 841.7h5.6v5.6h-5.6zM496.5 822.7h5.6v5.6h-5.6zM471.5 583.7h5.6v5.6h-5.6zM474.5 779.7h5.6v5.6h-5.6zM467.5 581.7h5.6v5.6h-5.6zM497.5 872.7h5.6v5.6h-5.6zM481.5 740.7h5.6v5.6h-5.6zM539.5 857.7h5.6v5.6h-5.6zM613.5 568.7h5.6v5.6h-5.6zM553.5 862.7h5.6v5.6h-5.6zM621.5 625.7h5.6v5.6h-5.6zM511.5 877.7h5.6v5.6h-5.6zM398.5 617.7h5.6v5.6h-5.6zM458.5 760.7h5.6v5.6h-5.6zM502.5 867.7h5.6v5.6h-5.6zM523.5 844.7h5.6v5.6h-5.6zM623.5 804.7h5.6v5.6h-5.6zM489.5 858.7h5.6v5.6h-5.6zM549.5 860.7h5.6v5.6h-5.6zM505.5 876.7h5.6v5.6h-5.6zM427.5 818.7h5.6v5.6h-5.6zM509.5 870.7h5.6v5.6h-5.6zM506.5 872.7h5.6v5.6h-5.6zM637.5 749.7h5.6v5.6h-5.6zM530.5 864.7h5.6v5.6h-5.6zM550.5 847.7h5.6v5.6h-5.6zM552.5 821.7h5.6v5.6h-5.6zM538.5 829.7h5.6v5.6h-5.6zM516.5 873.7h5.6v5.6h-5.6zM454.5 743.7h5.6v5.6h-5.6zM551.5 864.7h5.6v5.6h-5.6zM647.5 694.7h5.6v5.6h-5.6zM562.5 857.7h5.6v5.6h-5.6zM652.5 584.7h5.6v5.6h-5.6zM539.5 822.7h5.6v5.6h-5.6zM454.5 859.7h5.6v5.6h-5.6zM386.5 647.7h5.6v5.6h-5.6zM502.5 870.7h5.6v5.6h-5.6zM506.5 875.7h5.6v5.6h-5.6zM474.5 858.7h5.6v5.6h-5.6zM514.5 874.7h5.6v5.6h-5.6zM534.5 770.7h5.6v5.6h-5.6zM525.5 872.7h5.6v5.6h-5.6zM563.5 861.7h5.6v5.6h-5.6zM440.5 786.7h5.6v5.6h-5.6zM473.5 836.7h5.6v5.6h-5.6zM476.5 852.7h5.6v5.6h-5.6zM465.5 843.7h5.6v5.6h-5.6zM459.5 853.7h5.6v5.6h-5.6zM582.5 828.7h5.6v5.6h-5.6zM557.5 818.7h5.6v5.6h-5.6zM567.5 831.7h5.6v5.6h-5.6zM585.5 683.7h5.6v5.6h-5.6zM445.5 830.7h5.6v5.6h-5.6zM472.5 846.7h5.6v5.6h-5.6zM415.5 724.7h5.6v5.6h-5.6zM503.5 874.7h5.6v5.6h-5.6zM442.5 803.7h5.6v5.6h-5.6zM368.5 777.7h5.6v5.6h-5.6zM478.5 826.7h5.6v5.6h-5.6zM557.5 809.7h5.6v5.6h-5.6zM534.5 859.7h5.6v5.6h-5.6zM581.5 830.7h5.6v5.6h-5.6zM580.5 838.7h5.6v5.6h-5.6zM554.5 833.7h5.6v5.6h-5.6zM467.5 837.7h5.6v5.6h-5.6zM512.5 869.7h5.6v5.6h-5.6zM527.5 817.7h5.6v5.6h-5.6zM428.5 767.7h5.6v5.6h-5.6zM509.5 877.7h5.6v5.6h-5.6zM560.5 807.7h5.6v5.6h-5.6zM624.5 831.7h5.6v5.6h-5.6zM587.5 831.7h5.6v5.6h-5.6zM466.5 853.7h5.6v5.6h-5.6zM537.5 818.7h5.6v5.6h-5.6zM562.5 849.7h5.6v5.6h-5.6zM562.5 856.7h5.6v5.6h-5.6zM506.5 869.7h5.6v5.6h-5.6zM541.5 745.7h5.6v5.6h-5.6zM526.5 790.7h5.6v5.6h-5.6zM478.5 673.7h5.6v5.6h-5.6zM670.5 724.7h5.6v5.6h-5.6zM476.5 834.7h5.6v5.6h-5.6zM518.5 875.7h5.6v5.6h-5.6zM553.5 776.7h5.6v5.6h-5.6zM638.5 785.7h5.6v5.6h-5.6zM468.5 850.7h5.6v5.6h-5.6zM501.5 835.7h5.6v5.6h-5.6zM472.5 823.7h5.6v5.6h-5.6zM515.5 877.7h5.6v5.6h-5.6zM527.5 857.7h5.6v5.6h-5.6zM630.5 769.7h5.6v5.6h-5.6zM405.5 699.7h5.6v5.6h-5.6zM472.5 762.7h5.6v5.6h-5.6zM423.5 781.7h5.6v5.6h-5.6zM605.5 608.7h5.6v5.6h-5.6zM571.5 853.7h5.6v5.6h-5.6zM566.5 800.7h5.6v5.6h-5.6zM579.5 559.7h5.6v5.6h-5.6zM520.5 846.7h5.6v5.6h-5.6zM469.5 824.7h5.6v5.6h-5.6zM523.5 872.7h5.6v5.6h-5.6zM486.5 820.7h5.6v5.6h-5.6zM515.5 873.7h5.6v5.6h-5.6zM600.5 765.7h5.6v5.6h-5.6zM450.5 637.7h5.6v5.6h-5.6zM467.5 863.7h5.6v5.6h-5.6zM504.5 858.7h5.6v5.6h-5.6zM475.5 784.7h5.6v5.6h-5.6zM517.5 876.7h5.6v5.6h-5.6zM521.5 860.7h5.6v5.6h-5.6zM446.5 846.7h5.6v5.6h-5.6zM591.5 709.7h5.6v5.6h-5.6zM532.5 734.7h5.6v5.6h-5.6zM494.5 855.7h5.6v5.6h-5.6zM577.5 762.7h5.6v5.6h-5.6zM536.5 778.7h5.6v5.6h-5.6zM488.5 785.7h5.6v5.6h-5.6zM495.5 822.7h5.6v5.6h-5.6zM449.5 852.7h5.6v5.6h-5.6zM397.5 656.7h5.6v5.6h-5.6zM550.5 861.7h5.6v5.6h-5.6zM463.5 783.7h5.6v5.6h-5.6zM533.5 847.7h5.6v5.6h-5.6zM456.5 848.7h5.6v5.6h-5.6zM388.5 584.7h5.6v5.6h-5.6zM383.5 747.7h5.6v5.6h-5.6zM549.5 860.7h5.6v5.6h-5.6zM525.5 860.7h5.6v5.6h-5.6zM531.5 843.7h5.6v5.6h-5.6zM583.5 818.7h5.6v5.6h-5.6zM547.5 819.7h5.6v5.6h-5.6zM409.5 788.7h5.6v5.6h-5.6zM527.5 845.7h5.6v5.6h-5.6zM432.5 814.7h5.6v5.6h-5.6zM588.5 767.7h5.6v5.6h-5.6zM467.5 822.7h5.6v5.6h-5.6zM490.5 867.7h5.6v5.6h-5.6zM537.5 854.7h5.6v5.6h-5.6zM600.5 759.7h5.6v5.6h-5.6zM573.5 801.7h5.6v5.6h-5.6zM460.5 820.7h5.6v5.6h-5.6zM474.5 865.7h5.6v5.6h-5.6zM507.5 877.7h5.6v5.6h-5.6zM499.5 842.7h5.6v5.6h-5.6zM524.5 797.7h5.6v5.6h-5.6zM373.5 757.7h5.6v5.6h-5.6zM546.5 652.7h5.6v5.6h-5.6zM565.5 833.7h5.6v5.6h-5.6zM529.5 842.7h5.6v5.6h-5.6zM532.5 790.7h5.6v5.6h-5.6zM493.5 737.7h5.6v5.6h-5.6zM537.5 741.7h5.6v5.6h-5.6zM449.5 831.7h5.6v5.6h-5.6zM512.5 875.7h5.6v5.6h-5.6zM505.5 852.7h5.6v5.6h-5.6zM502.5 865.7h5.6v5.6h-5.6zM656.5 771.7h5.6v5.6h-5.6zM543.5 816.7h5.6v5.6h-5.6zM581.5 754.7h5.6v5.6h-5.6zM487.5 846.7h5.6v5.6h-5.6zM481.5 717.7h5.6v5.6h-5.6zM558.5 705.7h5.6v5.6h-5.6zM543.5 716.7h5.6v5.6h-5.6zM451.5 756.7h5.6v5.6h-5.6zM533.5 849.7h5.6v5.6h-5.6zM511.5 874.7h5.6v5.6h-5.6zM542.5 859.7h5.6v5.6h-5.6zM614.5 831.7h5.6v5.6h-5.6zM406.5 669.7h5.6v5.6h-5.6zM457.5 791.7h5.6v5.6h-5.6zM492.5 776.7h5.6v5.6h-5.6zM426.5 785.7h5.6v5.6h-5.6zM509.5 874.7h5.6v5.6h-5.6zM549.5 831.7h5.6v5.6h-5.6zM474.5 866.7h5.6v5.6h-5.6zM445.5 827.7h5.6v5.6h-5.6zM465.5 859.7h5.6v5.6h-5.6zM532.5 793.7h5.6v5.6h-5.6zM528.5 834.7h5.6v5.6h-5.6zM488.5 869.7h5.6v5.6h-5.6zM499.5 855.7h5.6v5.6h-5.6zM517.5 867.7h5.6v5.6h-5.6zM526.5 855.7h5.6v5.6h-5.6zM492.5 806.7h5.6v5.6h-5.6zM463.5 853.7h5.6v5.6h-5.6zM489.5 869.7h5.6v5.6h-5.6zM577.5 850.7h5.6v5.6h-5.6zM494.5 866.7h5.6v5.6h-5.6zM486.5 742.7h5.6v5.6h-5.6zM592.5 790.7h5.6v5.6h-5.6zM486.5 766.7h5.6v5.6h-5.6zM434.5 765.7h5.6v5.6h-5.6zM459.5 845.7h5.6v5.6h-5.6zM510.5 877.7h5.6v5.6h-5.6zM554.5 864.7h5.6v5.6h-5.6zM425.5 814.7h5.6v5.6h-5.6zM615.5 832.7h5.6v5.6h-5.6zM400.5 580.7h5.6v5.6h-5.6zM489.5 860.7h5.6v5.6h-5.6zM617.5 711.7h5.6v5.6h-5.6zM489.5 693.7h5.6v5.6h-5.6zM516.5 876.7h5.6v5.6h-5.6zM511.5 877.7h5.6v5.6h-5.6zM408.5 729.7h5.6v5.6h-5.6zM426.5 792.7h5.6v5.6h-5.6zM537.5 724.7h5.6v5.6h-5.6zM541.5 803.7h5.6v5.6h-5.6zM437.5 851.7h5.6v5.6h-5.6zM540.5 763.7h5.6v5.6h-5.6zM511.5 874.7h5.6v5.6h-5.6zM449.5 857.7h5.6v5.6h-5.6zM619.5 790.7h5.6v5.6h-5.6zM463.5 849.7h5.6v5.6h-5.6zM542.5 857.7h5.6v5.6h-5.6zM584.5 843.7h5.6v5.6h-5.6zM491.5 809.7h5.6v5.6h-5.6zM494.5 826.7h5.6v5.6h-5.6zM497.5 828.7h5.6v5.6h-5.6zM543.5 866.7h5.6v5.6h-5.6zM443.5 724.7h5.6v5.6h-5.6zM497.5 872.7h5.6v5.6h-5.6zM491.5 861.7h5.6v5.6h-5.6zM517.5 861.7h5.6v5.6h-5.6zM568.5 774.7h5.6v5.6h-5.6zM527.5 841.7h5.6v5.6h-5.6zM608.5 645.7h5.6v5.6h-5.6zM481.5 864.7h5.6v5.6h-5.6zM444.5 705.7h5.6v5.6h-5.6zM356.5 805.7h5.6v5.6h-5.6zM510.5 875.7h5.6v5.6h-5.6zM403.5 775.7h5.6v5.6h-5.6zM544.5 662.7h5.6v5.6h-5.6zM607.5 845.7h5.6v5.6h-5.6zM493.5 871.7h5.6v5.6h-5.6zM566.5 840.7h5.6v5.6h-5.6zM498.5 836.7h5.6v5.6h-5.6zM478.5 861.7h5.6v5.6h-5.6zM518.5 869.7h5.6v5.6h-5.6zM621.5 741.7h5.6v5.6h-5.6zM642.5 758.7h5.6v5.6h-5.6zM533.5 867.7h5.6v5.6h-5.6zM612.5 586.7h5.6v5.6h-5.6zM555.5 856.7h5.6v5.6h-5.6zM525.5 807.7h5.6v5.6h-5.6zM625.5 789.7h5.6v5.6h-5.6zM501.5 793.7h5.6v5.6h-5.6zM449.5 832.7h5.6v5.6h-5.6zM515.5 862.7h5.6v5.6h-5.6zM515.5 876.7h5.6v5.6h-5.6zM359.5 789.7h5.6v5.6h-5.6zM538.5 705.7h5.6v5.6h-5.6zM590.5 736.7h5.6v5.6h-5.6zM558.5 857.7h5.6v5.6h-5.6zM503.5 873.7h5.6v5.6h-5.6zM439.5 750.7h5.6v5.6h-5.6zM382.5 757.7h5.6v5.6h-5.6zM674.5 774.7h5.6v5.6h-5.6zM549.5 811.7h5.6v5.6h-5.6zM466.5 840.7h5.6v5.6h-5.6zM562.5 814.7h5.6v5.6h-5.6zM568.5 726.7h5.6v5.6h-5.6zM494.5 849.7h5.6v5.6h-5.6zM531.5 871.7h5.6v5.6h-5.6zM509.5 867.7h5.6v5.6h-5.6zM509.5 878.7h5.6v5.6h-5.6zM519.5 836.7h5.6v5.6h-5.6zM608.5 833.7h5.6v5.6h-5.6zM515.5 876.7h5.6v5.6h-5.6zM606.5 706.7h5.6v5.6h-5.6zM359.5 782.7h5.6v5.6h-5.6zM331.5 765.7h5.6v5.6h-5.6zM541.5 821.7h5.6v5.6h-5.6zM431.5 835.7h5.6v5.6h-5.6zM480.5 825.7h5.6v5.6h-5.6zM485.5 834.7h5.6v5.6h-5.6zM577.5 798.7h5.6v5.6h-5.6zM636.5 747.7h5.6v5.6h-5.6zM532.5 757.7h5.6v5.6h-5.6zM450.5 828.7h5.6v5.6h-5.6zM545.5 843.7h5.6v5.6h-5.6zM499.5 809.7h5.6v5.6h-5.6zM493.5 869.7h5.6v5.6h-5.6zM589.5 794.7h5.6v5.6h-5.6zM518.5 869.7h5.6v5.6h-5.6zM485.5 869.7h5.6v5.6h-5.6zM682.5 793.7h5.6v5.6h-5.6zM517.5 865.7h5.6v5.6h-5.6zM608.5 806.7h5.6v5.6h-5.6zM519.5 872.7h5.6v5.6h-5.6zM499.5 860.7h5.6v5.6h-5.6zM425.5 837.7h5.6v5.6h-5.6zM506.5 860.7h5.6v5.6h-5.6zM533.5 788.7h5.6v5.6h-5.6zM576.5 759.7h5.6v5.6h-5.6zM597.5 631.7h5.6v5.6h-5.6zM526.5 847.7h5.6v5.6h-5.6zM578.5 641.7h5.6v5.6h-5.6zM533.5 620.7h5.6v5.6h-5.6zM532.5 783.7h5.6v5.6h-5.6zM499.5 873.7h5.6v5.6h-5.6zM409.5 806.7h5.6v5.6h-5.6zM592.5 846.7h5.6v5.6h-5.6zM439.5 836.7h5.6v5.6h-5.6zM442.5 833.7h5.6v5.6h-5.6zM467.5 808.7h5.6v5.6h-5.6zM550.5 864.7h5.6v5.6h-5.6zM576.5 715.7h5.6v5.6h-5.6zM371.5 743.7h5.6v5.6h-5.6zM516.5 867.7h5.6v5.6h-5.6zM514.5 868.7h5.6v5.6h-5.6zM546.5 828.7h5.6v5.6h-5.6zM503.5 852.7h5.6v5.6h-5.6zM551.5 859.7h5.6v5.6h-5.6zM466.5 834.7h5.6v5.6h-5.6zM574.5 835.7h5.6v5.6h-5.6zM532.5 841.7h5.6v5.6h-5.6zM495.5 817.7h5.6v5.6h-5.6zM513.5 876.7h5.6v5.6h-5.6zM459.5 842.7h5.6v5.6h-5.6zM475.5 752.7h5.6v5.6h-5.6zM383.5 776.7h5.6v5.6h-5.6zM444.5 839.7h5.6v5.6h-5.6zM509.5 876.7h5.6v5.6h-5.6zM447.5 833.7h5.6v5.6h-5.6zM547.5 731.7h5.6v5.6h-5.6zM513.5 877.7h5.6v5.6h-5.6zM506.5 872.7h5.6v5.6h-5.6zM650.5 640.7h5.6v5.6h-5.6zM580.5 727.7h5.6v5.6h-5.6zM600.5 806.7h5.6v5.6h-5.6zM547.5 865.7h5.6v5.6h-5.6zM523.5 860.7h5.6v5.6h-5.6zM482.5 736.7h5.6v5.6h-5.6zM555.5 856.7h5.6v5.6h-5.6zM525.5 866.7h5.6v5.6h-5.6zM551.5 641.7h5.6v5.6h-5.6zM531.5 717.7h5.6v5.6h-5.6zM579.5 809.7h5.6v5.6h-5.6zM555.5 852.7h5.6v5.6h-5.6zM532.5 864.7h5.6v5.6h-5.6zM391.5 817.7h5.6v5.6h-5.6zM479.5 848.7h5.6v5.6h-5.6zM498.5 874.7h5.6v5.6h-5.6zM573.5 822.7h5.6v5.6h-5.6zM606.5 829.7h5.6v5.6h-5.6zM420.5 795.7h5.6v5.6h-5.6zM622.5 751.7h5.6v5.6h-5.6zM509.5 873.7h5.6v5.6h-5.6zM516.5 871.7h5.6v5.6h-5.6zM512.5 878.7h5.6v5.6h-5.6zM490.5 858.7h5.6v5.6h-5.6zM580.5 795.7h5.6v5.6h-5.6zM464.5 855.7h5.6v5.6h-5.6zM534.5 866.7h5.6v5.6h-5.6zM468.5 706.7h5.6v5.6h-5.6zM511.5 877.7h5.6v5.6h-5.6zM470.5 760.7h5.6v5.6h-5.6zM412.5 806.7h5.6v5.6h-5.6zM531.5 798.7h5.6v5.6h-5.6zM510.5 878.7h5.6v5.6h-5.6zM452.5 784.7h5.6v5.6h-5.6zM552.5 569.7h5.6v5.6h-5.6zM513.5 875.7h5.6v5.6h-5.6zM535.5 866.7h5.6v5.6h-5.6zM575.5 849.7h5.6v5.6h-5.6zM529.5 861.7h5.6v5.6h-5.6zM535.5 864.7h5.6v5.6h-5.6zM516.5 874.7h5.6v5.6h-5.6zM569.5 859.7h5.6v5.6h-5.6zM538.5 823.7h5.6v5.6h-5.6zM546.5 858.7h5.6v5.6h-5.6zM575.5 855.7h5.6v5.6h-5.6zM524.5 828.7h5.6v5.6h-5.6zM461.5 839.7h5.6v5.6h-5.6zM514.5 870.7h5.6v5.6h-5.6zM409.5 706.7h5.6v5.6h-5.6zM511.5 876.7h5.6v5.6h-5.6zM607.5 693.7h5.6v5.6h-5.6zM607.5 810.7h5.6v5.6h-5.6zM490.5 764.7h5.6v5.6h-5.6zM486.5 851.7h5.6v5.6h-5.6zM550.5 831.7h5.6v5.6h-5.6zM543.5 806.7h5.6v5.6h-5.6zM430.5 618.7h5.6v5.6h-5.6zM470.5 856.7h5.6v5.6h-5.6zM495.5 873.7h5.6v5.6h-5.6zM435.5 809.7h5.6v5.6h-5.6zM413.5 793.7h5.6v5.6h-5.6zM564.5 796.7h5.6v5.6h-5.6zM394.5 775.7h5.6v5.6h-5.6zM544.5 667.7h5.6v5.6h-5.6zM539.5 581.7h5.6v5.6h-5.6zM495.5 850.7h5.6v5.6h-5.6zM525.5 870.7h5.6v5.6h-5.6zM508.5 870.7h5.6v5.6h-5.6zM583.5 666.7h5.6v5.6h-5.6zM515.5 863.7h5.6v5.6h-5.6zM520.5 863.7h5.6v5.6h-5.6zM507.5 875.7h5.6v5.6h-5.6zM448.5 821.7h5.6v5.6h-5.6zM539.5 844.7h5.6v5.6h-5.6zM538.5 858.7h5.6v5.6h-5.6zM569.5 767.7h5.6v5.6h-5.6zM503.5 859.7h5.6v5.6h-5.6zM578.5 811.7h5.6v5.6h-5.6zM443.5 813.7h5.6v5.6h-5.6zM458.5 849.7h5.6v5.6h-5.6zM443.5 839.7h5.6v5.6h-5.6zM542.5 824.7h5.6v5.6h-5.6zM503.5 875.7h5.6v5.6h-5.6zM528.5 865.7h5.6v5.6h-5.6zM383.5 571.7h5.6v5.6h-5.6zM400.5 809.7h5.6v5.6h-5.6zM575.5 749.7h5.6v5.6h-5.6zM491.5 859.7h5.6v5.6h-5.6zM534.5 868.7h5.6v5.6h-5.6zM456.5 835.7h5.6v5.6h-5.6zM479.5 866.7h5.6v5.6h-5.6zM522.5 857.7h5.6v5.6h-5.6zM518.5 857.7h5.6v5.6h-5.6zM521.5 860.7h5.6v5.6h-5.6zM520.5 875.7h5.6v5.6h-5.6zM491.5 803.7h5.6v5.6h-5.6zM572.5 849.7h5.6v5.6h-5.6zM524.5 862.7h5.6v5.6h-5.6zM537.5 865.7h5.6v5.6h-5.6zM564.5 614.7h5.6v5.6h-5.6zM406.5 762.7h5.6v5.6h-5.6zM483.5 823.7h5.6v5.6h-5.6zM421.5 841.7h5.6v5.6h-5.6zM458.5 841.7h5.6v5.6h-5.6zM426.5 848.7h5.6v5.6h-5.6zM504.5 843.7h5.6v5.6h-5.6zM437.5 837.7h5.6v5.6h-5.6zM528.5 863.7h5.6v5.6h-5.6zM486.5 841.7h5.6v5.6h-5.6zM552.5 843.7h5.6v5.6h-5.6zM622.5 792.7h5.6v5.6h-5.6zM482.5 863.7h5.6v5.6h-5.6zM472.5 863.7h5.6v5.6h-5.6zM451.5 846.7h5.6v5.6h-5.6zM646.5 723.7h5.6v5.6h-5.6zM515.5 866.7h5.6v5.6h-5.6zM516.5 876.7h5.6v5.6h-5.6zM435.5 832.7h5.6v5.6h-5.6zM506.5 877.7h5.6v5.6h-5.6zM599.5 671.7h5.6v5.6h-5.6zM381.5 654.7h5.6v5.6h-5.6zM564.5 840.7h5.6v5.6h-5.6zM546.5 844.7h5.6v5.6h-5.6zM530.5 831.7h5.6v5.6h-5.6zM516.5 855.7h5.6v5.6h-5.6zM398.5 765.7h5.6v5.6h-5.6zM641.5 746.7h5.6v5.6h-5.6zM557.5 832.7h5.6v5.6h-5.6zM543.5 836.7h5.6v5.6h-5.6zM451.5 601.7h5.6v5.6h-5.6zM663.5 730.7h5.6v5.6h-5.6zM501.5 871.7h5.6v5.6h-5.6zM450.5 855.7h5.6v5.6h-5.6zM495.5 826.7h5.6v5.6h-5.6zM524.5 836.7h5.6v5.6h-5.6zM420.5 842.7h5.6v5.6h-5.6zM449.5 821.7h5.6v5.6h-5.6zM534.5 842.7h5.6v5.6h-5.6zM468.5 718.7h5.6v5.6h-5.6zM565.5 713.7h5.6v5.6h-5.6zM506.5 875.7h5.6v5.6h-5.6zM512.5 875.7h5.6v5.6h-5.6zM501.5 826.7h5.6v5.6h-5.6zM665.5 773.7h5.6v5.6h-5.6zM552.5 830.7h5.6v5.6h-5.6zM539.5 860.7h5.6v5.6h-5.6zM532.5 756.7h5.6v5.6h-5.6zM596.5 816.7h5.6v5.6h-5.6zM472.5 732.7h5.6v5.6h-5.6zM537.5 850.7h5.6v5.6h-5.6zM509.5 877.7h5.6v5.6h-5.6zM590.5 751.7h5.6v5.6h-5.6zM586.5 823.7h5.6v5.6h-5.6zM596.5 819.7h5.6v5.6h-5.6zM444.5 849.7h5.6v5.6h-5.6zM515.5 871.7h5.6v5.6h-5.6zM517.5 839.7h5.6v5.6h-5.6zM551.5 769.7h5.6v5.6h-5.6zM535.5 842.7h5.6v5.6h-5.6zM497.5 779.7h5.6v5.6h-5.6zM491.5 806.7h5.6v5.6h-5.6zM464.5 855.7h5.6v5.6h-5.6zM462.5 848.7h5.6v5.6h-5.6zM356.5 770.7h5.6v5.6h-5.6zM513.5 878.7h5.6v5.6h-5.6zM472.5 825.7h5.6v5.6h-5.6zM482.5 772.7h5.6v5.6h-5.6zM400.5 592.7h5.6v5.6h-5.6zM369.5 796.7h5.6v5.6h-5.6zM549.5 824.7h5.6v5.6h-5.6zM486.5 870.7h5.6v5.6h-5.6zM547.5 736.7h5.6v5.6h-5.6zM481.5 613.7h5.6v5.6h-5.6zM498.5 757.7h5.6v5.6h-5.6zM474.5 862.7h5.6v5.6h-5.6zM458.5 854.7h5.6v5.6h-5.6zM438.5 614.7h5.6v5.6h-5.6zM495.5 856.7h5.6v5.6h-5.6zM532.5 869.7h5.6v5.6h-5.6zM568.5 849.7h5.6v5.6h-5.6zM492.5 815.7h5.6v5.6h-5.6zM495.5 849.7h5.6v5.6h-5.6zM547.5 620.7h5.6v5.6h-5.6zM427.5 787.7h5.6v5.6h-5.6zM466.5 850.7h5.6v5.6h-5.6zM532.5 857.7h5.6v5.6h-5.6zM394.5 834.7h5.6v5.6h-5.6zM455.5 827.7h5.6v5.6h-5.6zM503.5 870.7h5.6v5.6h-5.6zM558.5 862.7h5.6v5.6h-5.6zM458.5 704.7h5.6v5.6h-5.6zM521.5 843.7h5.6v5.6h-5.6zM509.5 876.7h5.6v5.6h-5.6zM584.5 840.7h5.6v5.6h-5.6zM428.5 770.7h5.6v5.6h-5.6zM539.5 851.7h5.6v5.6h-5.6zM412.5 813.7h5.6v5.6h-5.6zM478.5 784.7h5.6v5.6h-5.6zM418.5 820.7h5.6v5.6h-5.6zM431.5 817.7h5.6v5.6h-5.6zM622.5 827.7h5.6v5.6h-5.6zM511.5 878.7h5.6v5.6h-5.6zM616.5 742.7h5.6v5.6h-5.6zM583.5 554.7h5.6v5.6h-5.6zM414.5 678.7h5.6v5.6h-5.6zM539.5 864.7h5.6v5.6h-5.6zM530.5 712.7h5.6v5.6h-5.6zM617.5 584.7h5.6v5.6h-5.6zM545.5 839.7h5.6v5.6h-5.6zM521.5 873.7h5.6v5.6h-5.6zM658.5 638.7h5.6v5.6h-5.6zM426.5 803.7h5.6v5.6h-5.6zM582.5 850.7h5.6v5.6h-5.6zM511.5 877.7h5.6v5.6h-5.6zM444.5 831.7h5.6v5.6h-5.6zM381.5 730.7h5.6v5.6h-5.6zM535.5 865.7h5.6v5.6h-5.6zM431.5 680.7h5.6v5.6h-5.6zM465.5 783.7h5.6v5.6h-5.6zM509.5 872.7h5.6v5.6h-5.6zM512.5 869.7h5.6v5.6h-5.6zM543.5 781.7h5.6v5.6h-5.6zM534.5 870.7h5.6v5.6h-5.6zM555.5 762.7h5.6v5.6h-5.6zM487.5 846.7h5.6v5.6h-5.6zM485.5 803.7h5.6v5.6h-5.6zM568.5 823.7h5.6v5.6h-5.6zM501.5 820.7h5.6v5.6h-5.6zM544.5 866.7h5.6v5.6h-5.6zM485.5 850.7h5.6v5.6h-5.6zM452.5 805.7h5.6v5.6h-5.6zM529.5 705.7h5.6v5.6h-5.6zM547.5 807.7h5.6v5.6h-5.6zM502.5 870.7h5.6v5.6h-5.6zM505.5 850.7h5.6v5.6h-5.6zM500.5 853.7h5.6v5.6h-5.6zM659.5 813.7h5.6v5.6h-5.6zM526.5 873.7h5.6v5.6h-5.6zM571.5 820.7h5.6v5.6h-5.6zM484.5 822.7h5.6v5.6h-5.6zM452.5 852.7h5.6v5.6h-5.6zM556.5 677.7h5.6v5.6h-5.6zM560.5 799.7h5.6v5.6h-5.6zM584.5 822.7h5.6v5.6h-5.6zM599.5 703.7h5.6v5.6h-5.6zM485.5 869.7h5.6v5.6h-5.6zM399.5 824.7h5.6v5.6h-5.6zM639.5 734.7h5.6v5.6h-5.6zM510.5 878.7h5.6v5.6h-5.6zM529.5 837.7h5.6v5.6h-5.6zM456.5 747.7h5.6v5.6h-5.6zM501.5 842.7h5.6v5.6h-5.6zM503.5 849.7h5.6v5.6h-5.6zM476.5 840.7h5.6v5.6h-5.6zM443.5 815.7h5.6v5.6h-5.6zM555.5 802.7h5.6v5.6h-5.6zM515.5 876.7h5.6v5.6h-5.6zM468.5 833.7h5.6v5.6h-5.6zM626.5 691.7h5.6v5.6h-5.6zM542.5 719.7h5.6v5.6h-5.6zM437.5 732.7h5.6v5.6h-5.6zM416.5 760.7h5.6v5.6h-5.6zM392.5 772.7h5.6v5.6h-5.6zM615.5 721.7h5.6v5.6h-5.6zM543.5 758.7h5.6v5.6h-5.6zM468.5 685.7h5.6v5.6h-5.6zM415.5 765.7h5.6v5.6h-5.6zM661.5 763.7h5.6v5.6h-5.6zM628.5 778.7h5.6v5.6h-5.6zM581.5 782.7h5.6v5.6h-5.6zM609.5 651.7h5.6v5.6h-5.6zM580.5 679.7h5.6v5.6h-5.6zM665.5 764.7h5.6v5.6h-5.6zM570.5 749.7h5.6v5.6h-5.6zM458.5 703.7h5.6v5.6h-5.6zM379.5 780.7h5.6v5.6h-5.6zM466.5 758.7h5.6v5.6h-5.6zM461.5 773.7h5.6v5.6h-5.6zM590.5 786.7h5.6v5.6h-5.6zM560.5 763.7h5.6v5.6h-5.6zM578.5 686.7h5.6v5.6h-5.6zM454.5 739.7h5.6v5.6h-5.6zM438.5 773.7h5.6v5.6h-5.6zM436.5 734.7h5.6v5.6h-5.6zM426.5 760.7h5.6v5.6h-5.6zM436.5 782.7h5.6v5.6h-5.6zM353.5 790.7h5.6v5.6h-5.6zM374.5 792.7h5.6v5.6h-5.6zM413.5 740.7h5.6v5.6h-5.6zM575.5 794.7h5.6v5.6h-5.6zM558.5 740.7h5.6v5.6h-5.6zM470.5 630.7h5.6v5.6h-5.6zM644.5 569.7h5.6v5.6h-5.6zM569.5 717.7h5.6v5.6h-5.6zM445.5 719.7h5.6v5.6h-5.6zM465.5 774.7h5.6v5.6h-5.6zM445.5 719.7h5.6v5.6h-5.6zM389.5 571.7h5.6v5.6h-5.6zM376.5 654.7h5.6v5.6h-5.6zM588.5 763.7h5.6v5.6h-5.6zM550.5 771.7h5.6v5.6h-5.6zM455.5 787.7h5.6v5.6h-5.6zM465.5 688.7h5.6v5.6h-5.6zM569.5 681.7h5.6v5.6h-5.6zM409.5 607.7h5.6v5.6h-5.6zM557.5 763.7h5.6v5.6h-5.6zM399.5 675.7h5.6v5.6h-5.6zM613.5 651.7h5.6v5.6h-5.6zM546.5 646.7h5.6v5.6h-5.6zM611.5 776.7h5.6v5.6h-5.6zM476.5 785.7h5.6v5.6h-5.6zM459.5 773.7h5.6v5.6h-5.6zM432.5 678.7h5.6v5.6h-5.6zM487.5 785.7h5.6v5.6h-5.6zM671.5 712.7h5.6v5.6h-5.6zM610.5 783.7h5.6v5.6h-5.6zM473.5 645.7h5.6v5.6h-5.6zM544.5 728.7h5.6v5.6h-5.6zM555.5 705.7h5.6v5.6h-5.6zM434.5 789.7h5.6v5.6h-5.6zM446.5 729.7h5.6v5.6h-5.6zM549.5 782.7h5.6v5.6h-5.6zM412.5 781.7h5.6v5.6h-5.6zM581.5 749.7h5.6v5.6h-5.6zM484.5 783.7h5.6v5.6h-5.6zM571.5 603.7h5.6v5.6h-5.6zM574.5 776.7h5.6v5.6h-5.6zM625.5 774.7h5.6v5.6h-5.6zM477.5 767.7h5.6v5.6h-5.6zM575.5 754.7h5.6v5.6h-5.6zM580.5 646.7h5.6v5.6h-5.6zM614.5 701.7h5.6v5.6h-5.6zM457.5 630.7h5.6v5.6h-5.6zM617.5 776.7h5.6v5.6h-5.6zM434.5 780.7h5.6v5.6h-5.6zM436.5 722.7h5.6v5.6h-5.6zM535.5 776.7h5.6v5.6h-5.6zM587.5 630.7h5.6v5.6h-5.6zM609.5 729.7h5.6v5.6h-5.6zM484.5 753.7h5.6v5.6h-5.6zM458.5 767.7h5.6v5.6h-5.6zM563.5 721.7h5.6v5.6h-5.6zM478.5 770.7h5.6v5.6h-5.6zM566.5 774.7h5.6v5.6h-5.6zM454.5 751.7h5.6v5.6h-5.6zM478.5 770.7h5.6v5.6h-5.6zM627.5 763.7h5.6v5.6h-5.6zM610.5 777.7h5.6v5.6h-5.6zM583.5 765.7h5.6v5.6h-5.6zM484.5 728.7h5.6v5.6h-5.6zM628.5 785.7h5.6v5.6h-5.6zM592.5 769.7h5.6v5.6h-5.6zM637.5 791.7h5.6v5.6h-5.6zM567.5 745.7h5.6v5.6h-5.6zM468.5 726.7h5.6v5.6h-5.6zM559.5 722.7h5.6v5.6h-5.6zM634.5 625.7h5.6v5.6h-5.6zM637.5 744.7h5.6v5.6h-5.6zM649.5 698.7h5.6v5.6h-5.6zM460.5 703.7h5.6v5.6h-5.6zM639.5 759.7h5.6v5.6h-5.6zM556.5 753.7h5.6v5.6h-5.6zM611.5 760.7h5.6v5.6h-5.6zM600.5 785.7h5.6v5.6h-5.6zM565.5 618.7h5.6v5.6h-5.6zM460.5 734.7h5.6v5.6h-5.6zM608.5 783.7h5.6v5.6h-5.6zM557.5 680.7h5.6v5.6h-5.6zM613.5 694.7h5.6v5.6h-5.6zM581.5 722.7h5.6v5.6h-5.6zM469.5 698.7h5.6v5.6h-5.6zM623.5 788.7h5.6v5.6h-5.6zM565.5 706.7h5.6v5.6h-5.6zM394.5 673.7h5.6v5.6h-5.6zM613.5 609.7h5.6v5.6h-5.6zM546.5 681.7h5.6v5.6h-5.6zM394.5 790.7h5.6v5.6h-5.6zM610.5 772.7h5.6v5.6h-5.6zM483.5 717.7h5.6v5.6h-5.6zM408.5 694.7h5.6v5.6h-5.6zM380.5 691.7h5.6v5.6h-5.6zM581.5 794.7h5.6v5.6h-5.6zM460.5 662.7h5.6v5.6h-5.6zM533.5 741.7h5.6v5.6h-5.6zM375.5 601.7h5.6v5.6h-5.6zM448.5 678.7h5.6v5.6h-5.6zM592.5 706.7h5.6v5.6h-5.6zM550.5 727.7h5.6v5.6h-5.6zM372.5 662.7h5.6v5.6h-5.6zM541.5 767.7h5.6v5.6h-5.6zM459.5 758.7h5.6v5.6h-5.6zM444.5 564.7h5.6v5.6h-5.6zM398.5 774.7h5.6v5.6h-5.6zM407.5 743.7h5.6v5.6h-5.6zM380.5 601.7h5.6v5.6h-5.6zM359.5 683.7h5.6v5.6h-5.6zM462.5 775.7h5.6v5.6h-5.6zM555.5 699.7h5.6v5.6h-5.6zM622.5 777.7h5.6v5.6h-5.6zM574.5 660.7h5.6v5.6h-5.6zM422.5 759.7h5.6v5.6h-5.6zM589.5 728.7h5.6v5.6h-5.6zM465.5 733.7h5.6v5.6h-5.6zM359.5 681.7h5.6v5.6h-5.6zM476.5 715.7h5.6v5.6h-5.6zM667.5 749.7h5.6v5.6h-5.6zM573.5 748.7h5.6v5.6h-5.6zM560.5 713.7h5.6v5.6h-5.6zM590.5 639.7h5.6v5.6h-5.6zM481.5 787.7h5.6v5.6h-5.6zM466.5 666.7h5.6v5.6h-5.6zM563.5 665.7h5.6v5.6h-5.6zM418.5 729.7h5.6v5.6h-5.6zM428.5 781.7h5.6v5.6h-5.6zM592.5 719.7h5.6v5.6h-5.6zM420.5 683.7h5.6v5.6h-5.6zM463.5 715.7h5.6v5.6h-5.6zM535.5 769.7h5.6v5.6h-5.6zM589.5 763.7h5.6v5.6h-5.6zM464.5 778.7h5.6v5.6h-5.6zM459.5 772.7h5.6v5.6h-5.6zM597.5 693.7h5.6v5.6h-5.6zM612.5 769.7h5.6v5.6h-5.6zM632.5 743.7h5.6v5.6h-5.6zM430.5 698.7h5.6v5.6h-5.6zM419.5 693.7h5.6v5.6h-5.6zM448.5 619.7h5.6v5.6h-5.6zM545.5 706.7h5.6v5.6h-5.6zM452.5 778.7h5.6v5.6h-5.6zM545.5 671.7h5.6v5.6h-5.6zM472.5 665.7h5.6v5.6h-5.6zM364.5 733.7h5.6v5.6h-5.6zM366.5 676.7h5.6v5.6h-5.6zM596.5 595.7h5.6v5.6h-5.6zM557.5 740.7h5.6v5.6h-5.6zM459.5 750.7h5.6v5.6h-5.6zM378.5 704.7h5.6v5.6h-5.6zM406.5 721.7h5.6v5.6h-5.6zM459.5 649.7h5.6v5.6h-5.6zM592.5 693.7h5.6v5.6h-5.6zM465.5 762.7h5.6v5.6h-5.6zM406.5 710.7h5.6v5.6h-5.6zM567.5 710.7h5.6v5.6h-5.6zM558.5 735.7h5.6v5.6h-5.6zM560.5 680.7h5.6v5.6h-5.6zM432.5 792.7h5.6v5.6h-5.6zM474.5 793.7h5.6v5.6h-5.6zM549.5 759.7h5.6v5.6h-5.6zM538.5 736.7h5.6v5.6h-5.6zM562.5 784.7h5.6v5.6h-5.6zM464.5 684.7h5.6v5.6h-5.6zM460.5 716.7h5.6v5.6h-5.6zM458.5 744.7h5.6v5.6h-5.6zM457.5 727.7h5.6v5.6h-5.6zM436.5 686.7h5.6v5.6h-5.6zM465.5 658.7h5.6v5.6h-5.6zM548.5 689.7h5.6v5.6h-5.6zM586.5 785.7h5.6v5.6h-5.6zM481.5 689.7h5.6v5.6h-5.6zM411.5 710.7h5.6v5.6h-5.6zM581.5 776.7h5.6v5.6h-5.6zM470.5 680.7h5.6v5.6h-5.6zM428.5 771.7h5.6v5.6h-5.6zM541.5 670.7h5.6v5.6h-5.6zM564.5 732.7h5.6v5.6h-5.6zM414.5 702.7h5.6v5.6h-5.6zM483.5 714.7h5.6v5.6h-5.6zM609.5 780.7h5.6v5.6h-5.6zM464.5 756.7h5.6v5.6h-5.6zM464.5 773.7h5.6v5.6h-5.6zM617.5 689.7h5.6v5.6h-5.6zM445.5 733.7h5.6v5.6h-5.6zM641.5 756.7h5.6v5.6h-5.6zM541.5 686.7h5.6v5.6h-5.6zM532.5 772.7h5.6v5.6h-5.6zM538.5 739.7h5.6v5.6h-5.6zM591.5 737.7h5.6v5.6h-5.6zM452.5 593.7h5.6v5.6h-5.6zM582.5 579.7h5.6v5.6h-5.6zM471.5 768.7h5.6v5.6h-5.6zM464.5 586.7h5.6v5.6h-5.6zM574.5 775.7h5.6v5.6h-5.6zM484.5 782.7h5.6v5.6h-5.6zM461.5 775.7h5.6v5.6h-5.6zM567.5 766.7h5.6v5.6h-5.6zM582.5 759.7h5.6v5.6h-5.6zM543.5 757.7h5.6v5.6h-5.6zM641.5 737.7h5.6v5.6h-5.6zM620.5 724.7h5.6v5.6h-5.6zM595.5 720.7h5.6v5.6h-5.6zM426.5 740.7h5.6v5.6h-5.6zM579.5 791.7h5.6v5.6h-5.6zM366.5 707.7h5.6v5.6h-5.6zM425.5 615.7h5.6v5.6h-5.6zM570.5 762.7h5.6v5.6h-5.6zM599.5 717.7h5.6v5.6h-5.6zM565.5 637.7h5.6v5.6h-5.6zM397.5 597.7h5.6v5.6h-5.6zM648.5 620.7h5.6v5.6h-5.6zM555.5 612.7h5.6v5.6h-5.6zM589.5 643.7h5.6v5.6h-5.6zM622.5 787.7h5.6v5.6h-5.6zM476.5 663.7h5.6v5.6h-5.6zM455.5 565.7h5.6v5.6h-5.6zM571.5 791.7h5.6v5.6h-5.6zM579.5 724.7h5.6v5.6h-5.6zM418.5 684.7h5.6v5.6h-5.6zM567.5 643.7h5.6v5.6h-5.6zM385.5 591.7h5.6v5.6h-5.6zM431.5 621.7h5.6v5.6h-5.6zM360.5 782.7h5.6v5.6h-5.6zM432.5 675.7h5.6v5.6h-5.6zM412.5 750.7h5.6v5.6h-5.6zM469.5 617.7h5.6v5.6h-5.6zM402.5 763.7h5.6v5.6h-5.6zM588.5 575.7h5.6v5.6h-5.6zM634.5 608.7h5.6v5.6h-5.6zM579.5 609.7h5.6v5.6h-5.6z" fill="none" stroke="#a9a9a9" stroke-width="1.4"/><path d="M382.3 231.4 L382.0 246.9 L381.7 262.1 L381.3 277.1 L381.0 291.8 L380.6 306.2 L380.2 320.3 L379.9 334.1 L379.5 347.7 L379.1 361.0 L378.7 374.1 L378.3 386.8 L377.9 399.3 L377.4 411.5 L377.0 423.5 L376.5 435.1 L376.1 446.5 L375.6 457.7 L375.1 468.6 L374.6 479.2 L374.1 489.6 L373.6 499.7 L373.1 509.6 L372.5 519.2 L372.0 528.6 L371.4 537.8 L370.8 546.7 L370.3 555.4 L369.7 563.8 L369.0 572.0 L368.4 580.1 L367.8 587.9 L367.1 595.4 L366.4 602.8 L365.7 610.0 L365.0 617.0 L364.3 623.7 L363.6 630.3 L362.8 636.7 L362.0 643.0 L361.2 649.0 L360.4 654.9 L359.6 660.6 L358.7 666.1 L357.9 671.5 L357.0 676.7 L356.1 681.8 L355.2 686.7 L354.2 691.4 L353.2 696.1 L352.2 700.6 L351.2 704.9 L350.2 709.1 L349.1 713.2 L348.0 717.2 L346.9 721.1 L345.8 724.8 L344.6 728.4 L343.4 732.0 L342.2 735.4 L341.0 738.7 L339.7 741.9 L338.4 745.0 L337.1 748.0 L335.7 751.0 L334.3 753.8 L332.9 756.6 L331.4 759.2 L329.9 761.8 L328.4 764.3 L326.8 766.8 L325.2 769.1 L323.6 771.4 L321.9 773.6 L320.2 775.8 L318.5 777.9 L316.7 779.9 L314.8 781.9 L313.0 783.8 L311.1 785.7 L309.1 787.5 L307.1 789.2 L305.0 790.9 L302.9 792.6 L300.8 794.2 L298.6 795.7 L296.4 797.2 L294.1 798.7 L291.7 800.1 L289.3 801.5 L286.9 802.8 L284.4 804.1 L281.8 805.4 L279.2 806.6 L276.5 807.8 L273.7 808.9 L270.9 810.1 L268.0 811.1 L265.1 812.2 L262.1 813.2 L259.0 814.2 L255.8 815.2 L252.6 816.2 L249.3 817.1 L246.0 818.0 L242.5 818.8 L239.0 819.7 L235.4 820.5 L231.7 821.3 L227.9 822.1 L224.0 822.8 L220.1 823.6 L216.1 824.3 L211.9 825.0 L207.7 825.7 L203.4 826.3 L199.0 827.0 L194.4 827.6 L189.8 828.2 L185.1 828.8 L180.2 829.4 L175.3 829.9 L170.2 830.5 L165.0 831.0 L159.7 831.5 L154.3 832.0 L148.8 832.5 L143.1 833.0 L137.3 833.5 L131.4 833.9 L125.3 834.3 L119.1 834.8 L112.7 835.2 L106.2 835.6 L99.6 836.0 L92.8 836.4 L85.8 836.8 L78.7 837.1 L71.4 837.5 L64.0 837.8" fill="none" stroke="#000" stroke-width="2.5" stroke-linejoin="round"/><path d="M644.3 231.4 L644.6 247.8 L645.0 263.9 L645.3 279.7 L645.7 295.2 L646.1 310.4 L646.5 325.3 L646.9 339.8 L647.3 354.1 L647.7 368.0 L648.2 381.7 L648.6 395.0 L649.1 408.0 L649.5 420.8 L650.0 433.2 L650.5 445.3 L651.0 457.2 L651.5 468.7 L652.0 479.9 L652.5 490.9 L653.1 501.6 L653.7 512.0 L654.2 522.1 L654.8 532.0 L655.4 541.6 L656.0 550.9 L656.7 560.0 L657.3 568.8 L658.0 577.4 L658.7 585.7 L659.4 593.8 L660.1 601.7 L660.8 609.3 L661.6 616.7 L662.3 623.9 L663.1 630.9 L663.9 637.6 L664.7 644.2 L665.6 650.5 L666.4 656.7 L667.3 662.7 L668.2 668.5 L669.2 674.1 L670.1 679.5 L671.1 684.8 L672.1 689.9 L673.1 694.9 L674.2 699.7 L675.2 704.3 L676.3 708.8 L677.5 713.1 L678.6 717.3 L679.8 721.4 L681.0 725.4 L682.2 729.2 L683.5 732.9 L684.8 736.5 L686.1 740.0 L687.5 743.3 L688.9 746.6 L690.3 749.7 L691.8 752.8 L693.3 755.7 L694.8 758.6 L696.4 761.3 L698.0 764.0 L699.7 766.6 L701.3 769.1 L703.1 771.5 L704.9 773.9 L706.7 776.1 L708.5 778.4 L710.4 780.5 L712.4 782.6 L714.4 784.6 L716.4 786.5 L718.5 788.4 L720.7 790.2 L722.9 792.0 L725.1 793.7 L727.5 795.3 L729.8 796.9 L732.2 798.5 L734.7 800.0 L737.3 801.5 L739.9 802.9 L742.5 804.2 L745.3 805.6 L748.1 806.9 L750.9 808.1 L753.9 809.3 L756.9 810.5 L760.0 811.7 L763.1 812.8 L766.3 813.8 L769.6 814.9 L773.0 815.9 L776.5 816.9 L780.1 817.8 L783.7 818.7 L787.4 819.6 L791.3 820.5 L795.2 821.4 L799.2 822.2 L803.3 823.0 L807.5 823.8 L811.8 824.5 L816.2 825.2 L820.7 825.9 L825.3 826.6 L830.1 827.3 L834.9 828.0 L839.9 828.6 L845.0 829.2 L850.2 829.8 L855.6 830.4 L861.0 830.9 L866.6 831.5 L872.4 832.0 L878.3 832.5 L884.3 833.1 L890.5 833.5 L896.8 834.0 L903.3 834.5 L909.9 834.9 L916.7 835.4 L923.6 835.8 L930.8 836.2 L938.1 836.6 L945.5 837.0 L953.2 837.4 L961.0 837.8 L969.1 838.1 L977.3 838.5 L985.7 838.8 L994.3 839.2 L1003.2 839.5 L1012.2 839.8 L1021.5 840.1 L1031.0 840.4" fill="none" stroke="#000" stroke-width="2.5" stroke-linejoin="round"/><rect x="700.5" y="347.5" width="6" height="6" fill="none" stroke="#f00" stroke-width="1.3"/><text transform="translate(706.1,365.8) scale(0.955,1)" font-size="15.6" fill="#f00">TCP1</text><rect x="784.0" y="372.0" width="6" height="6" fill="none" stroke="#f00" stroke-width="1.3"/><text transform="translate(789.6,390.3) scale(0.955,1)" font-size="15.6" fill="#f00">EIF2AK2</text><rect x="851.0" y="372.0" width="6" height="6" fill="none" stroke="#f00" stroke-width="1.3"/><text transform="translate(856.6,390.3) scale(0.955,1)" font-size="15.6" fill="#f00">MX1</text><rect x="772.5" y="398.5" width="6" height="6" fill="none" stroke="#f00" stroke-width="1.3"/><text transform="translate(778.1,416.8) scale(0.955,1)" font-size="15.6" fill="#f00">MMP1</text><rect x="727.0" y="414.5" width="6" height="6" fill="none" stroke="#f00" stroke-width="1.3"/><text transform="translate(732.6,432.8) scale(0.955,1)" font-size="15.6" fill="#f00">PGD</text></svg>
<span class="t" style="left:1099.50px;top:70.81px;font-size:19.00px;line-height:21.22px;color:#000;transform:scaleX(1.0258);">X</span>
<span class="t" style="left:1134.40px;top:76.07px;font-size:16.50px;line-height:18.43px;color:#000;transform:scaleX(0.9270);">Difference (Group1 - Group2)</span>
<span class="t" style="left:1099.50px;top:104.81px;font-size:19.00px;line-height:21.22px;color:#000;transform:scaleX(1.0100);">Y</span>
<span class="t" style="left:1134.40px;top:109.27px;font-size:16.50px;line-height:18.43px;color:#000;transform:scaleX(0.8977);">-Log p</span>
<div class="b" style="left:1694.00px;top:66.20px;width:112.50px;height:30.20px;border:1px solid #adadad;background:#e1e1e1"></div>
<span class="t" style="left:1713.40px;top:72.16px;font-size:17.50px;line-height:19.55px;color:#000;transform:scaleX(0.8795);">Edit Scale</span>
<div class="b" style="left:1694.00px;top:100.40px;width:112.50px;height:29.40px;border:1px solid #adadad;background:#e1e1e1"></div>
<span class="t" style="left:1713.40px;top:105.76px;font-size:17.50px;line-height:19.55px;color:#000;transform:scaleX(0.8795);">Edit Scale</span>
<div class="b" style="left:1092.00px;top:161.30px;width:714.00px;height:835.60px;border:1px solid #d9d9d9;background:#fff"></div>
<div class="b" style="left:1157.00px;top:135.00px;width:86.00px;height:27.00px;border:1px solid #d9d9d9;background:#f0f0f0"></div>
<span class="t" style="left:1163.70px;top:139.77px;font-size:16.50px;line-height:18.43px;color:#000;transform:scaleX(0.9124);">Categories</span>
<div class="b" style="left:1092.50px;top:133.00px;width:65.50px;height:29.50px;border:1px solid #d9d9d9;border-bottom:none;background:#fff"></div>
<span class="t" style="left:1103.00px;top:137.07px;font-size:16.50px;line-height:18.43px;color:#000;transform:scaleX(0.9159);">Points</span>
<div class="b" style="left:1101.80px;top:168.60px;width:696.50px;height:33.50px;background:linear-gradient(#ffffff,#fbfbfb 40%,#ececec);border-right:1px solid #c4c4c4;border-radius:0 3px 3px 0"></div>
<div class="b" style="left:1106.00px;top:174.50px;width:2.80px;height:2.80px;background:#b4b4b4"></div>
<div class="b" style="left:1106.00px;top:180.25px;width:2.80px;height:2.80px;background:#b4b4b4"></div>
<div class="b" style="left:1106.00px;top:186.00px;width:2.80px;height:2.80px;background:#b4b4b4"></div>
<div class="b" style="left:1106.00px;top:191.75px;width:2.80px;height:2.80px;background:#b4b4b4"></div>
<div class="b" style="left:1102.00px;top:205.00px;width:696.00px;height:753.00px;background:#fff;border:1px solid #aca899;border-bottom:none;border-left-width:2px"></div>
<div class="b" style="left:1103.00px;top:206.00px;width:670.00px;height:37.50px;background:linear-gradient(#ece9d8 0,#ece9d8 84%,#dcd8c8 90%,#cbc7b8 96%,#bdb9a8 100%)"></div>
<div class="b" style="left:1103.00px;top:242.00px;width:670.00px;height:2.00px;background:#b4b1a3"></div>
<div class="b" style="left:1291.50px;top:212.00px;width:1.00px;height:24.00px;background:#aca899"></div>
<div class="b" style="left:1292.50px;top:212.00px;width:1.00px;height:24.00px;background:#fff"></div>
<div class="b" style="left:1394.00px;top:212.00px;width:1.00px;height:24.00px;background:#aca899"></div>
<div class="b" style="left:1395.00px;top:212.00px;width:1.00px;height:24.00px;background:#fff"></div>
<div class="b" style="left:1496.00px;top:212.00px;width:1.00px;height:24.00px;background:#aca899"></div>
<div class="b" style="left:1497.00px;top:212.00px;width:1.00px;height:24.00px;background:#fff"></div>
<div class="b" style="left:1598.50px;top:212.00px;width:1.00px;height:24.00px;background:#aca899"></div>
<div class="b" style="left:1599.50px;top:212.00px;width:1.00px;height:24.00px;background:#fff"></div>
<div class="b" style="left:1701.00px;top:212.00px;width:1.00px;height:24.00px;background:#aca899"></div>
<div class="b" style="left:1702.00px;top:212.00px;width:1.00px;height:24.00px;background:#fff"></div>
<div class="b" style="left:1201.50px;top:206.00px;width:1.50px;height:37.00px;background:#aca899"></div>
<div class="b" style="left:1203.00px;top:206.00px;width:1.00px;height:37.00px;background:#fff"></div>
<div class="b" style="left:1203px;top:206px;width:569px;height:36.5px;overflow:hidden">
<span class="t" style="left:8.00px;top:6.81px;font-size:17.00px;line-height:18.99px;color:#000;transform:scaleX(1.0526);">Signific...</span>
<span class="t" style="left:96.00px;top:6.81px;font-size:17.00px;line-height:18.99px;color:#000;transform:scaleX(1.0436);">-Log(P-v...</span>
<span class="t" style="left:198.70px;top:6.81px;font-size:17.00px;line-height:18.99px;color:#000;transform:scaleX(1.0820);">Difference</span>
<span class="t" style="left:300.50px;top:6.81px;font-size:17.00px;line-height:18.99px;color:#000;transform:scaleX(1.0434);">Protein</span>
<span class="t" style="left:300.50px;top:22.62px;font-size:17.00px;line-height:18.99px;color:#000;transform:scaleX(1.0588);">IDs</span>
<span class="t" style="left:403.00px;top:6.81px;font-size:17.00px;line-height:18.99px;color:#000;transform:scaleX(1.0503);">Majority</span>
<span class="t" style="left:403.00px;top:22.62px;font-size:17.00px;line-height:18.99px;color:#000;">protein</span>
<span class="t" style="left:505.40px;top:6.81px;font-size:17.00px;line-height:18.99px;color:#000;transform:scaleX(1.0434);">Protein</span>
<span class="t" style="left:505.40px;top:22.62px;font-size:17.00px;line-height:18.99px;color:#000;">names</span>
</div>
<div class="b" style="left:1103px;top:244.2px;width:669px;height:689.8px;overflow:hidden">
<div class="b" style="left:0.00px;top:0.00px;width:100.00px;height:32.15px;background:#ece9d8"></div>
<div class="b" style="left:2.00px;top:-1.00px;width:97.00px;height:32.65px;background:#dcddd6;border:1.5px solid #f8f8f4;border-right-color:#a8a8a0;border-bottom-color:#a0a094;border-top-color:#fff"></div>
<span class="t" style="left:9.00px;top:6.62px;font-size:17.00px;line-height:18.99px;color:#000;transform:scaleX(1.0471);">268</span>
<div class="b" style="left:100.00px;top:0.00px;width:569.00px;height:32.15px;background:#316ac5;border-bottom:1px solid #a0a0a0"></div>
<div class="b" style="left:99.00px;top:0.00px;width:1.30px;height:32.15px;background:#a8a8a0"></div>
<div class="b" style="left:188.00px;top:0.00px;width:1.30px;height:32.15px;background:#d4d0c8"></div>
<div class="b" style="left:290.50px;top:0.00px;width:1.30px;height:32.15px;background:#d4d0c8"></div>
<div class="b" style="left:392.50px;top:0.00px;width:1.30px;height:32.15px;background:#d4d0c8"></div>
<div class="b" style="left:495.00px;top:0.00px;width:1.30px;height:32.15px;background:#d4d0c8"></div>
<div class="b" style="left:597.50px;top:0.00px;width:1.30px;height:32.15px;background:#d4d0c8"></div>
<span class="t" style="left:108.00px;top:6.62px;font-size:17.00px;line-height:18.99px;color:#fff;">+</span>
<span class="t" style="left:196.00px;top:6.62px;font-size:17.00px;line-height:18.99px;color:#fff;transform:scaleX(1.0450);">7.229711...</span>
<span class="t" style="left:298.50px;top:6.62px;font-size:17.00px;line-height:18.99px;color:#fff;transform:scaleX(1.0450);">4.773719...</span>
<span class="t" style="left:400.50px;top:6.62px;font-size:17.00px;line-height:18.99px;color:#fff;transform:scaleX(1.0450);">A0A7P0...</span>
<span class="t" style="left:503.00px;top:6.62px;font-size:17.00px;line-height:18.99px;color:#fff;transform:scaleX(1.0450);">A0A7P0...</span>
<span class="t" style="left:605.50px;top:6.62px;font-size:17.00px;line-height:18.99px;color:#fff;transform:scaleX(1.0450);">Interferon</span>
<div class="b" style="left:0.00px;top:32.15px;width:100.00px;height:32.15px;background:#ece9d8"></div>
<div class="b" style="left:6.00px;top:62.70px;width:88.00px;height:1.00px;background:#c5c2b2"></div>
<div class="b" style="left:6.00px;top:63.70px;width:88.00px;height:1.00px;background:#fff"></div>
<span class="t" style="left:9.00px;top:38.77px;font-size:17.00px;line-height:18.99px;color:#000;transform:scaleX(1.0471);">269</span>
<div class="b" style="left:100.00px;top:32.15px;width:569.00px;height:32.15px;background:#fff;border-bottom:1px solid #a0a0a0"></div>
<div class="b" style="left:99.00px;top:32.15px;width:1.30px;height:32.15px;background:#a8a8a0"></div>
<div class="b" style="left:188.00px;top:32.15px;width:1.30px;height:32.15px;background:#a0a0a0"></div>
<div class="b" style="left:290.50px;top:32.15px;width:1.30px;height:32.15px;background:#a0a0a0"></div>
<div class="b" style="left:392.50px;top:32.15px;width:1.30px;height:32.15px;background:#a0a0a0"></div>
<div class="b" style="left:495.00px;top:32.15px;width:1.30px;height:32.15px;background:#a0a0a0"></div>
<div class="b" style="left:597.50px;top:32.15px;width:1.30px;height:32.15px;background:#a0a0a0"></div>
<span class="t" style="left:196.00px;top:38.77px;font-size:17.00px;line-height:18.99px;color:#000;transform:scaleX(1.0450);">0.164724...</span>
<span class="t" style="left:298.50px;top:38.77px;font-size:17.00px;line-height:18.99px;color:#000;transform:scaleX(1.0450);">0.093554...</span>
<span class="t" style="left:400.50px;top:38.77px;font-size:17.00px;line-height:18.99px;color:#000;transform:scaleX(1.0450);">P07237;...</span>
<span class="t" style="left:503.00px;top:38.77px;font-size:17.00px;line-height:18.99px;color:#000;transform:scaleX(1.0450);">P07237;...</span>
<span class="t" style="left:605.50px;top:38.77px;font-size:17.00px;line-height:18.99px;color:#000;transform:scaleX(1.0450);">Protein disulfide</span>
<div class="b" style="left:0.00px;top:64.30px;width:100.00px;height:32.15px;background:#ece9d8"></div>
<div class="b" style="left:6.00px;top:94.85px;width:88.00px;height:1.00px;background:#c5c2b2"></div>
<div class="b" style="left:6.00px;top:95.85px;width:88.00px;height:1.00px;background:#fff"></div>
<span class="t" style="left:9.00px;top:70.91px;font-size:17.00px;line-height:18.99px;color:#000;transform:scaleX(1.0471);">270</span>
<div class="b" style="left:100.00px;top:64.30px;width:569.00px;height:32.15px;background:#e0e0e0;border-bottom:1px solid #a0a0a0"></div>
<div class="b" style="left:99.00px;top:64.30px;width:1.30px;height:32.15px;background:#a8a8a0"></div>
<div class="b" style="left:188.00px;top:64.30px;width:1.30px;height:32.15px;background:#a0a0a0"></div>
<div class="b" style="left:290.50px;top:64.30px;width:1.30px;height:32.15px;background:#a0a0a0"></div>
<div class="b" style="left:392.50px;top:64.30px;width:1.30px;height:32.15px;background:#a0a0a0"></div>
<div class="b" style="left:495.00px;top:64.30px;width:1.30px;height:32.15px;background:#a0a0a0"></div>
<div class="b" style="left:597.50px;top:64.30px;width:1.30px;height:32.15px;background:#a0a0a0"></div>
<span class="t" style="left:196.00px;top:70.91px;font-size:17.00px;line-height:18.99px;color:#000;transform:scaleX(1.0450);">0.969596...</span>
<span class="t" style="left:298.50px;top:70.91px;font-size:17.00px;line-height:18.99px;color:#000;transform:scaleX(1.0450);">-0.15252...</span>
<span class="t" style="left:400.50px;top:70.91px;font-size:17.00px;line-height:18.99px;color:#000;transform:scaleX(1.0450);">A0A7P0...</span>
<span class="t" style="left:503.00px;top:70.91px;font-size:17.00px;line-height:18.99px;color:#000;transform:scaleX(1.0450);">A0A7P0...</span>
<span class="t" style="left:605.50px;top:70.91px;font-size:17.00px;line-height:18.99px;color:#000;transform:scaleX(1.0450);">Long-chain</span>
<div class="b" style="left:0.00px;top:96.45px;width:100.00px;height:32.15px;background:#ece9d8"></div>
<div class="b" style="left:6.00px;top:127.00px;width:88.00px;height:1.00px;background:#c5c2b2"></div>
<div class="b" style="left:6.00px;top:128.00px;width:88.00px;height:1.00px;background:#fff"></div>
<span class="t" style="left:9.00px;top:103.06px;font-size:17.00px;line-height:18.99px;color:#000;transform:scaleX(1.0471);">271</span>
<div class="b" style="left:100.00px;top:96.45px;width:569.00px;height:32.15px;background:#fff;border-bottom:1px solid #a0a0a0"></div>
<div class="b" style="left:99.00px;top:96.45px;width:1.30px;height:32.15px;background:#a8a8a0"></div>
<div class="b" style="left:188.00px;top:96.45px;width:1.30px;height:32.15px;background:#a0a0a0"></div>
<div class="b" style="left:290.50px;top:96.45px;width:1.30px;height:32.15px;background:#a0a0a0"></div>
<div class="b" style="left:392.50px;top:96.45px;width:1.30px;height:32.15px;background:#a0a0a0"></div>
<div class="b" style="left:495.00px;top:96.45px;width:1.30px;height:32.15px;background:#a0a0a0"></div>
<div class="b" style="left:597.50px;top:96.45px;width:1.30px;height:32.15px;background:#a0a0a0"></div>
<span class="t" style="left:196.00px;top:103.06px;font-size:17.00px;line-height:18.99px;color:#000;transform:scaleX(1.0450);">0.650254...</span>
<span class="t" style="left:298.50px;top:103.06px;font-size:17.00px;line-height:18.99px;color:#000;transform:scaleX(1.0450);">-0.53052...</span>
<span class="t" style="left:400.50px;top:103.06px;font-size:17.00px;line-height:18.99px;color:#000;transform:scaleX(1.0450);">A0A7P0...</span>
<span class="t" style="left:503.00px;top:103.06px;font-size:17.00px;line-height:18.99px;color:#000;transform:scaleX(1.0450);">A0A7P0...</span>
<span class="t" style="left:605.50px;top:103.06px;font-size:17.00px;line-height:18.99px;color:#000;transform:scaleX(1.0450);">Basigin</span>
<div class="b" style="left:0.00px;top:128.60px;width:100.00px;height:32.15px;background:#ece9d8"></div>
<div class="b" style="left:6.00px;top:159.15px;width:88.00px;height:1.00px;background:#c5c2b2"></div>
<div class="b" style="left:6.00px;top:160.15px;width:88.00px;height:1.00px;background:#fff"></div>
<span class="t" style="left:9.00px;top:135.22px;font-size:17.00px;line-height:18.99px;color:#000;transform:scaleX(1.0471);">272</span>
<div class="b" style="left:100.00px;top:128.60px;width:569.00px;height:32.15px;background:#e0e0e0;border-bottom:1px solid #a0a0a0"></div>
<div class="b" style="left:99.00px;top:128.60px;width:1.30px;height:32.15px;background:#a8a8a0"></div>
<div class="b" style="left:188.00px;top:128.60px;width:1.30px;height:32.15px;background:#a0a0a0"></div>
<div class="b" style="left:290.50px;top:128.60px;width:1.30px;height:32.15px;background:#a0a0a0"></div>
<div class="b" style="left:392.50px;top:128.60px;width:1.30px;height:32.15px;background:#a0a0a0"></div>
<div class="b" style="left:495.00px;top:128.60px;width:1.30px;height:32.15px;background:#a0a0a0"></div>
<div class="b" style="left:597.50px;top:128.60px;width:1.30px;height:32.15px;background:#a0a0a0"></div>
<span class="t" style="left:108.00px;top:135.22px;font-size:17.00px;line-height:18.99px;color:#000;">+</span>
<span class="t" style="left:196.00px;top:135.22px;font-size:17.00px;line-height:18.99px;color:#000;transform:scaleX(1.0450);">2.550246...</span>
<span class="t" style="left:298.50px;top:135.22px;font-size:17.00px;line-height:18.99px;color:#000;transform:scaleX(1.0450);">2.599080...</span>
<span class="t" style="left:400.50px;top:135.22px;font-size:17.00px;line-height:18.99px;color:#000;transform:scaleX(1.0450);">Q9ULX6...</span>
<span class="t" style="left:503.00px;top:135.22px;font-size:17.00px;line-height:18.99px;color:#000;transform:scaleX(1.0450);">Q9ULX6...</span>
<span class="t" style="left:605.50px;top:135.22px;font-size:17.00px;line-height:18.99px;color:#000;transform:scaleX(1.0450);">A-kinase</span>
<div class="b" style="left:0.00px;top:160.75px;width:100.00px;height:32.15px;background:#ece9d8"></div>
<div class="b" style="left:6.00px;top:191.30px;width:88.00px;height:1.00px;background:#c5c2b2"></div>
<div class="b" style="left:6.00px;top:192.30px;width:88.00px;height:1.00px;background:#fff"></div>
<span class="t" style="left:9.00px;top:167.37px;font-size:17.00px;line-height:18.99px;color:#000;transform:scaleX(1.0471);">273</span>
<div class="b" style="left:100.00px;top:160.75px;width:569.00px;height:32.15px;background:#fff;border-bottom:1px solid #a0a0a0"></div>
<div class="b" style="left:99.00px;top:160.75px;width:1.30px;height:32.15px;background:#a8a8a0"></div>
<div class="b" style="left:188.00px;top:160.75px;width:1.30px;height:32.15px;background:#a0a0a0"></div>
<div class="b" style="left:290.50px;top:160.75px;width:1.30px;height:32.15px;background:#a0a0a0"></div>
<div class="b" style="left:392.50px;top:160.75px;width:1.30px;height:32.15px;background:#a0a0a0"></div>
<div class="b" style="left:495.00px;top:160.75px;width:1.30px;height:32.15px;background:#a0a0a0"></div>
<div class="b" style="left:597.50px;top:160.75px;width:1.30px;height:32.15px;background:#a0a0a0"></div>
<span class="t" style="left:196.00px;top:167.37px;font-size:17.00px;line-height:18.99px;color:#000;transform:scaleX(1.0450);">1.863685...</span>
<span class="t" style="left:298.50px;top:167.37px;font-size:17.00px;line-height:18.99px;color:#000;transform:scaleX(1.0450);">-0.47215...</span>
<span class="t" style="left:400.50px;top:167.37px;font-size:17.00px;line-height:18.99px;color:#000;transform:scaleX(1.0450);">A0A7P0...</span>
<span class="t" style="left:503.00px;top:167.37px;font-size:17.00px;line-height:18.99px;color:#000;transform:scaleX(1.0450);">A0A7P0...</span>
<span class="t" style="left:605.50px;top:167.37px;font-size:17.00px;line-height:18.99px;color:#000;transform:scaleX(1.0450);">Calnexin</span>
<div class="b" style="left:0.00px;top:192.90px;width:100.00px;height:32.15px;background:#ece9d8"></div>
<div class="b" style="left:6.00px;top:223.45px;width:88.00px;height:1.00px;background:#c5c2b2"></div>
<div class="b" style="left:6.00px;top:224.45px;width:88.00px;height:1.00px;background:#fff"></div>
<span class="t" style="left:9.00px;top:199.51px;font-size:17.00px;line-height:18.99px;color:#000;transform:scaleX(1.0471);">274</span>
<div class="b" style="left:100.00px;top:192.90px;width:569.00px;height:32.15px;background:#e0e0e0;border-bottom:1px solid #a0a0a0"></div>
<div class="b" style="left:99.00px;top:192.90px;width:1.30px;height:32.15px;background:#a8a8a0"></div>
<div class="b" style="left:188.00px;top:192.90px;width:1.30px;height:32.15px;background:#a0a0a0"></div>
<div class="b" style="left:290.50px;top:192.90px;width:1.30px;height:32.15px;background:#a0a0a0"></div>
<div class="b" style="left:392.50px;top:192.90px;width:1.30px;height:32.15px;background:#a0a0a0"></div>
<div class="b" style="left:495.00px;top:192.90px;width:1.30px;height:32.15px;background:#a0a0a0"></div>
<div class="b" style="left:597.50px;top:192.90px;width:1.30px;height:32.15px;background:#a0a0a0"></div>
<span class="t" style="left:196.00px;top:199.51px;font-size:17.00px;line-height:18.99px;color:#000;transform:scaleX(1.0450);">1.248445...</span>
<span class="t" style="left:298.50px;top:199.51px;font-size:17.00px;line-height:18.99px;color:#000;transform:scaleX(1.0450);">1.076514...</span>
<span class="t" style="left:400.50px;top:199.51px;font-size:17.00px;line-height:18.99px;color:#000;transform:scaleX(1.0450);">A0A7P0...</span>
<span class="t" style="left:503.00px;top:199.51px;font-size:17.00px;line-height:18.99px;color:#000;transform:scaleX(1.0450);">A0A7P0...</span>
<span class="t" style="left:605.50px;top:199.51px;font-size:17.00px;line-height:18.99px;color:#000;transform:scaleX(1.0450);">Dihydrolipoyl</span>
<div class="b" style="left:0.00px;top:225.05px;width:100.00px;height:32.15px;background:#ece9d8"></div>
<div class="b" style="left:2.00px;top:224.05px;width:97.00px;height:32.65px;background:#dcddd6;border:1.5px solid #f8f8f4;border-right-color:#a8a8a0;border-bottom-color:#a0a094;border-top-color:#fff"></div>
<span class="t" style="left:9.00px;top:231.66px;font-size:17.00px;line-height:18.99px;color:#000;transform:scaleX(1.0471);">275</span>
<div class="b" style="left:100.00px;top:225.05px;width:569.00px;height:32.15px;background:#316ac5;border-bottom:1px solid #a0a0a0"></div>
<div class="b" style="left:99.00px;top:225.05px;width:1.30px;height:32.15px;background:#a8a8a0"></div>
<div class="b" style="left:188.00px;top:225.05px;width:1.30px;height:32.15px;background:#d4d0c8"></div>
<div class="b" style="left:290.50px;top:225.05px;width:1.30px;height:32.15px;background:#d4d0c8"></div>
<div class="b" style="left:392.50px;top:225.05px;width:1.30px;height:32.15px;background:#d4d0c8"></div>
<div class="b" style="left:495.00px;top:225.05px;width:1.30px;height:32.15px;background:#d4d0c8"></div>
<div class="b" style="left:597.50px;top:225.05px;width:1.30px;height:32.15px;background:#d4d0c8"></div>
<span class="t" style="left:108.00px;top:231.66px;font-size:17.00px;line-height:18.99px;color:#fff;">+</span>
<span class="t" style="left:196.00px;top:231.66px;font-size:17.00px;line-height:18.99px;color:#fff;transform:scaleX(1.0450);">7.230131...</span>
<span class="t" style="left:298.50px;top:231.66px;font-size:17.00px;line-height:18.99px;color:#fff;transform:scaleX(1.0450);">3.845993...</span>
<span class="t" style="left:400.50px;top:231.66px;font-size:17.00px;line-height:18.99px;color:#fff;transform:scaleX(1.0450);">A0A7P0...</span>
<span class="t" style="left:503.00px;top:231.66px;font-size:17.00px;line-height:18.99px;color:#fff;transform:scaleX(1.0450);">A0A7P0...</span>
<span class="t" style="left:605.50px;top:231.66px;font-size:17.00px;line-height:18.99px;color:#fff;transform:scaleX(1.0450);">Interferon</span>
<div class="b" style="left:0.00px;top:257.20px;width:100.00px;height:32.15px;background:#ece9d8"></div>
<div class="b" style="left:6.00px;top:287.75px;width:88.00px;height:1.00px;background:#c5c2b2"></div>
<div class="b" style="left:6.00px;top:288.75px;width:88.00px;height:1.00px;background:#fff"></div>
<span class="t" style="left:9.00px;top:263.81px;font-size:17.00px;line-height:18.99px;color:#000;transform:scaleX(1.0471);">276</span>
<div class="b" style="left:100.00px;top:257.20px;width:569.00px;height:32.15px;background:#e0e0e0;border-bottom:1px solid #a0a0a0"></div>
<div class="b" style="left:99.00px;top:257.20px;width:1.30px;height:32.15px;background:#a8a8a0"></div>
<div class="b" style="left:188.00px;top:257.20px;width:1.30px;height:32.15px;background:#a0a0a0"></div>
<div class="b" style="left:290.50px;top:257.20px;width:1.30px;height:32.15px;background:#a0a0a0"></div>
<div class="b" style="left:392.50px;top:257.20px;width:1.30px;height:32.15px;background:#a0a0a0"></div>
<div class="b" style="left:495.00px;top:257.20px;width:1.30px;height:32.15px;background:#a0a0a0"></div>
<div class="b" style="left:597.50px;top:257.20px;width:1.30px;height:32.15px;background:#a0a0a0"></div>
<span class="t" style="left:196.00px;top:263.81px;font-size:17.00px;line-height:18.99px;color:#000;transform:scaleX(1.0450);">3.011690...</span>
<span class="t" style="left:298.50px;top:263.81px;font-size:17.00px;line-height:18.99px;color:#000;transform:scaleX(1.0450);">-1.02597...</span>
<span class="t" style="left:400.50px;top:263.81px;font-size:17.00px;line-height:18.99px;color:#000;transform:scaleX(1.0450);">F5GZS6...</span>
<span class="t" style="left:503.00px;top:263.81px;font-size:17.00px;line-height:18.99px;color:#000;transform:scaleX(1.0450);">F5GZS6...</span>
<span class="t" style="left:605.50px;top:263.81px;font-size:17.00px;line-height:18.99px;color:#000;transform:scaleX(1.0450);">4F2 cell-surface</span>
<div class="b" style="left:0.00px;top:289.35px;width:100.00px;height:32.15px;background:#ece9d8"></div>
<div class="b" style="left:6.00px;top:319.90px;width:88.00px;height:1.00px;background:#c5c2b2"></div>
<div class="b" style="left:6.00px;top:320.90px;width:88.00px;height:1.00px;background:#fff"></div>
<span class="t" style="left:9.00px;top:295.96px;font-size:17.00px;line-height:18.99px;color:#000;transform:scaleX(1.0471);">277</span>
<div class="b" style="left:100.00px;top:289.35px;width:569.00px;height:32.15px;background:#fff;border-bottom:1px solid #a0a0a0"></div>
<div class="b" style="left:99.00px;top:289.35px;width:1.30px;height:32.15px;background:#a8a8a0"></div>
<div class="b" style="left:188.00px;top:289.35px;width:1.30px;height:32.15px;background:#a0a0a0"></div>
<div class="b" style="left:290.50px;top:289.35px;width:1.30px;height:32.15px;background:#a0a0a0"></div>
<div class="b" style="left:392.50px;top:289.35px;width:1.30px;height:32.15px;background:#a0a0a0"></div>
<div class="b" style="left:495.00px;top:289.35px;width:1.30px;height:32.15px;background:#a0a0a0"></div>
<div class="b" style="left:597.50px;top:289.35px;width:1.30px;height:32.15px;background:#a0a0a0"></div>
<span class="t" style="left:196.00px;top:295.96px;font-size:17.00px;line-height:18.99px;color:#000;transform:scaleX(1.0450);">1.364812...</span>
<span class="t" style="left:298.50px;top:295.96px;font-size:17.00px;line-height:18.99px;color:#000;transform:scaleX(1.0450);">0.522516...</span>
<span class="t" style="left:400.50px;top:295.96px;font-size:17.00px;line-height:18.99px;color:#000;transform:scaleX(1.0450);">A0A7P0...</span>
<span class="t" style="left:503.00px;top:295.96px;font-size:17.00px;line-height:18.99px;color:#000;transform:scaleX(1.0450);">A0A7P0...</span>
<span class="t" style="left:605.50px;top:295.96px;font-size:17.00px;line-height:18.99px;color:#000;transform:scaleX(1.0450);">DnaJ homolog</span>
<div class="b" style="left:0.00px;top:321.50px;width:100.00px;height:32.15px;background:#ece9d8"></div>
<div class="b" style="left:6.00px;top:352.05px;width:88.00px;height:1.00px;background:#c5c2b2"></div>
<div class="b" style="left:6.00px;top:353.05px;width:88.00px;height:1.00px;background:#fff"></div>
<span class="t" style="left:9.00px;top:328.12px;font-size:17.00px;line-height:18.99px;color:#000;transform:scaleX(1.0471);">278</span>
<div class="b" style="left:100.00px;top:321.50px;width:569.00px;height:32.15px;background:#e0e0e0;border-bottom:1px solid #a0a0a0"></div>
<div class="b" style="left:99.00px;top:321.50px;width:1.30px;height:32.15px;background:#a8a8a0"></div>
<div class="b" style="left:188.00px;top:321.50px;width:1.30px;height:32.15px;background:#a0a0a0"></div>
<div class="b" style="left:290.50px;top:321.50px;width:1.30px;height:32.15px;background:#a0a0a0"></div>
<div class="b" style="left:392.50px;top:321.50px;width:1.30px;height:32.15px;background:#a0a0a0"></div>
<div class="b" style="left:495.00px;top:321.50px;width:1.30px;height:32.15px;background:#a0a0a0"></div>
<div class="b" style="left:597.50px;top:321.50px;width:1.30px;height:32.15px;background:#a0a0a0"></div>
<span class="t" style="left:108.00px;top:328.12px;font-size:17.00px;line-height:18.99px;color:#000;">+</span>
<span class="t" style="left:196.00px;top:328.12px;font-size:17.00px;line-height:18.99px;color:#000;transform:scaleX(1.0450);">2.647505...</span>
<span class="t" style="left:298.50px;top:328.12px;font-size:17.00px;line-height:18.99px;color:#000;transform:scaleX(1.0450);">2.474493...</span>
<span class="t" style="left:400.50px;top:328.12px;font-size:17.00px;line-height:18.99px;color:#000;transform:scaleX(1.0450);">A2A376;...</span>
<span class="t" style="left:503.00px;top:328.12px;font-size:17.00px;line-height:18.99px;color:#000;transform:scaleX(1.0450);">A2A376;...</span>
<span class="t" style="left:605.50px;top:328.12px;font-size:17.00px;line-height:18.99px;color:#000;transform:scaleX(1.0450);">Probable</span>
<div class="b" style="left:0.00px;top:353.65px;width:100.00px;height:32.15px;background:#ece9d8"></div>
<div class="b" style="left:6.00px;top:384.20px;width:88.00px;height:1.00px;background:#c5c2b2"></div>
<div class="b" style="left:6.00px;top:385.20px;width:88.00px;height:1.00px;background:#fff"></div>
<span class="t" style="left:9.00px;top:360.26px;font-size:17.00px;line-height:18.99px;color:#000;transform:scaleX(1.0471);">279</span>
<div class="b" style="left:100.00px;top:353.65px;width:569.00px;height:32.15px;background:#fff;border-bottom:1px solid #a0a0a0"></div>
<div class="b" style="left:99.00px;top:353.65px;width:1.30px;height:32.15px;background:#a8a8a0"></div>
<div class="b" style="left:188.00px;top:353.65px;width:1.30px;height:32.15px;background:#a0a0a0"></div>
<div class="b" style="left:290.50px;top:353.65px;width:1.30px;height:32.15px;background:#a0a0a0"></div>
<div class="b" style="left:392.50px;top:353.65px;width:1.30px;height:32.15px;background:#a0a0a0"></div>
<div class="b" style="left:495.00px;top:353.65px;width:1.30px;height:32.15px;background:#a0a0a0"></div>
<div class="b" style="left:597.50px;top:353.65px;width:1.30px;height:32.15px;background:#a0a0a0"></div>
<span class="t" style="left:196.00px;top:360.26px;font-size:17.00px;line-height:18.99px;color:#000;transform:scaleX(1.0450);">2.759838...</span>
<span class="t" style="left:298.50px;top:360.26px;font-size:17.00px;line-height:18.99px;color:#000;transform:scaleX(1.0450);">1.990049...</span>
<span class="t" style="left:400.50px;top:360.26px;font-size:17.00px;line-height:18.99px;color:#000;transform:scaleX(1.0450);">A0A7P0...</span>
<span class="t" style="left:503.00px;top:360.26px;font-size:17.00px;line-height:18.99px;color:#000;transform:scaleX(1.0450);">A0A7P0...</span>
<span class="t" style="left:605.50px;top:360.26px;font-size:17.00px;line-height:18.99px;color:#000;transform:scaleX(1.0450);">Transport</span>
<div class="b" style="left:0.00px;top:385.80px;width:100.00px;height:32.15px;background:#ece9d8"></div>
<div class="b" style="left:6.00px;top:416.35px;width:88.00px;height:1.00px;background:#c5c2b2"></div>
<div class="b" style="left:6.00px;top:417.35px;width:88.00px;height:1.00px;background:#fff"></div>
<span class="t" style="left:9.00px;top:392.41px;font-size:17.00px;line-height:18.99px;color:#000;transform:scaleX(1.0471);">280</span>
<div class="b" style="left:100.00px;top:385.80px;width:569.00px;height:32.15px;background:#e0e0e0;border-bottom:1px solid #a0a0a0"></div>
<div class="b" style="left:99.00px;top:385.80px;width:1.30px;height:32.15px;background:#a8a8a0"></div>
<div class="b" style="left:188.00px;top:385.80px;width:1.30px;height:32.15px;background:#a0a0a0"></div>
<div class="b" style="left:290.50px;top:385.80px;width:1.30px;height:32.15px;background:#a0a0a0"></div>
<div class="b" style="left:392.50px;top:385.80px;width:1.30px;height:32.15px;background:#a0a0a0"></div>
<div class="b" style="left:495.00px;top:385.80px;width:1.30px;height:32.15px;background:#a0a0a0"></div>
<div class="b" style="left:597.50px;top:385.80px;width:1.30px;height:32.15px;background:#a0a0a0"></div>
<span class="t" style="left:196.00px;top:392.41px;font-size:17.00px;line-height:18.99px;color:#000;transform:scaleX(1.0450);">0.400832...</span>
<span class="t" style="left:298.50px;top:392.41px;font-size:17.00px;line-height:18.99px;color:#000;transform:scaleX(1.0450);">0.299450...</span>
<span class="t" style="left:400.50px;top:392.41px;font-size:17.00px;line-height:18.99px;color:#000;transform:scaleX(1.0450);">B3KR26...</span>
<span class="t" style="left:503.00px;top:392.41px;font-size:17.00px;line-height:18.99px;color:#000;transform:scaleX(1.0450);">B3KR26...</span>
<span class="t" style="left:605.50px;top:392.41px;font-size:17.00px;line-height:18.99px;color:#000;transform:scaleX(1.0450);">Lysosomal</span>
<div class="b" style="left:0.00px;top:417.95px;width:100.00px;height:32.15px;background:#ece9d8"></div>
<div class="b" style="left:6.00px;top:448.50px;width:88.00px;height:1.00px;background:#c5c2b2"></div>
<div class="b" style="left:6.00px;top:449.50px;width:88.00px;height:1.00px;background:#fff"></div>
<span class="t" style="left:9.00px;top:424.56px;font-size:17.00px;line-height:18.99px;color:#000;transform:scaleX(1.0471);">281</span>
<div class="b" style="left:100.00px;top:417.95px;width:569.00px;height:32.15px;background:#fff;border-bottom:1px solid #a0a0a0"></div>
<div class="b" style="left:99.00px;top:417.95px;width:1.30px;height:32.15px;background:#a8a8a0"></div>
<div class="b" style="left:188.00px;top:417.95px;width:1.30px;height:32.15px;background:#a0a0a0"></div>
<div class="b" style="left:290.50px;top:417.95px;width:1.30px;height:32.15px;background:#a0a0a0"></div>
<div class="b" style="left:392.50px;top:417.95px;width:1.30px;height:32.15px;background:#a0a0a0"></div>
<div class="b" style="left:495.00px;top:417.95px;width:1.30px;height:32.15px;background:#a0a0a0"></div>
<div class="b" style="left:597.50px;top:417.95px;width:1.30px;height:32.15px;background:#a0a0a0"></div>
<span class="t" style="left:196.00px;top:424.56px;font-size:17.00px;line-height:18.99px;color:#000;transform:scaleX(1.0450);">0.093785...</span>
<span class="t" style="left:298.50px;top:424.56px;font-size:17.00px;line-height:18.99px;color:#000;transform:scaleX(1.0450);">-0.10918...</span>
<span class="t" style="left:400.50px;top:424.56px;font-size:17.00px;line-height:18.99px;color:#000;transform:scaleX(1.0450);">A0A7P0...</span>
<span class="t" style="left:503.00px;top:424.56px;font-size:17.00px;line-height:18.99px;color:#000;transform:scaleX(1.0450);">A0A7P0...</span>
<span class="t" style="left:605.50px;top:424.56px;font-size:17.00px;line-height:18.99px;color:#000;transform:scaleX(1.0450);">Peptidyl-prolyl</span>
<div class="b" style="left:0.00px;top:450.10px;width:100.00px;height:32.15px;background:#ece9d8"></div>
<div class="b" style="left:6.00px;top:480.65px;width:88.00px;height:1.00px;background:#c5c2b2"></div>
<div class="b" style="left:6.00px;top:481.65px;width:88.00px;height:1.00px;background:#fff"></div>
<span class="t" style="left:9.00px;top:456.71px;font-size:17.00px;line-height:18.99px;color:#000;transform:scaleX(1.0471);">282</span>
<div class="b" style="left:100.00px;top:450.10px;width:569.00px;height:32.15px;background:#e0e0e0;border-bottom:1px solid #a0a0a0"></div>
<div class="b" style="left:99.00px;top:450.10px;width:1.30px;height:32.15px;background:#a8a8a0"></div>
<div class="b" style="left:188.00px;top:450.10px;width:1.30px;height:32.15px;background:#a0a0a0"></div>
<div class="b" style="left:290.50px;top:450.10px;width:1.30px;height:32.15px;background:#a0a0a0"></div>
<div class="b" style="left:392.50px;top:450.10px;width:1.30px;height:32.15px;background:#a0a0a0"></div>
<div class="b" style="left:495.00px;top:450.10px;width:1.30px;height:32.15px;background:#a0a0a0"></div>
<div class="b" style="left:597.50px;top:450.10px;width:1.30px;height:32.15px;background:#a0a0a0"></div>
<span class="t" style="left:196.00px;top:456.71px;font-size:17.00px;line-height:18.99px;color:#000;transform:scaleX(1.0450);">0.767396...</span>
<span class="t" style="left:298.50px;top:456.71px;font-size:17.00px;line-height:18.99px;color:#000;transform:scaleX(1.0450);">0.342874...</span>
<span class="t" style="left:400.50px;top:456.71px;font-size:17.00px;line-height:18.99px;color:#000;transform:scaleX(1.0450);">E7EX90...</span>
<span class="t" style="left:503.00px;top:456.71px;font-size:17.00px;line-height:18.99px;color:#000;transform:scaleX(1.0450);">E7EX90...</span>
<span class="t" style="left:605.50px;top:456.71px;font-size:17.00px;line-height:18.99px;color:#000;transform:scaleX(1.0450);">Dynactin</span>
<div class="b" style="left:0.00px;top:482.25px;width:100.00px;height:32.15px;background:#ece9d8"></div>
<div class="b" style="left:6.00px;top:512.80px;width:88.00px;height:1.00px;background:#c5c2b2"></div>
<div class="b" style="left:6.00px;top:513.80px;width:88.00px;height:1.00px;background:#fff"></div>
<span class="t" style="left:9.00px;top:488.87px;font-size:17.00px;line-height:18.99px;color:#000;transform:scaleX(1.0471);">283</span>
<div class="b" style="left:100.00px;top:482.25px;width:569.00px;height:32.15px;background:#fff;border-bottom:1px solid #a0a0a0"></div>
<div class="b" style="left:99.00px;top:482.25px;width:1.30px;height:32.15px;background:#a8a8a0"></div>
<div class="b" style="left:188.00px;top:482.25px;width:1.30px;height:32.15px;background:#a0a0a0"></div>
<div class="b" style="left:290.50px;top:482.25px;width:1.30px;height:32.15px;background:#a0a0a0"></div>
<div class="b" style="left:392.50px;top:482.25px;width:1.30px;height:32.15px;background:#a0a0a0"></div>
<div class="b" style="left:495.00px;top:482.25px;width:1.30px;height:32.15px;background:#a0a0a0"></div>
<div class="b" style="left:597.50px;top:482.25px;width:1.30px;height:32.15px;background:#a0a0a0"></div>
<span class="t" style="left:196.00px;top:488.87px;font-size:17.00px;line-height:18.99px;color:#000;transform:scaleX(1.0450);">0.373829...</span>
<span class="t" style="left:298.50px;top:488.87px;font-size:17.00px;line-height:18.99px;color:#000;transform:scaleX(1.0450);">-0.43687...</span>
<span class="t" style="left:400.50px;top:488.87px;font-size:17.00px;line-height:18.99px;color:#000;transform:scaleX(1.0450);">Q5T949;...</span>
<span class="t" style="left:503.00px;top:488.87px;font-size:17.00px;line-height:18.99px;color:#000;transform:scaleX(1.0450);">Q5T949;...</span>
<span class="t" style="left:605.50px;top:488.87px;font-size:17.00px;line-height:18.99px;color:#000;transform:scaleX(1.0450);">Serine/threonine</span>
<div class="b" style="left:0.00px;top:514.40px;width:100.00px;height:32.15px;background:#ece9d8"></div>
<div class="b" style="left:6.00px;top:544.95px;width:88.00px;height:1.00px;background:#c5c2b2"></div>
<div class="b" style="left:6.00px;top:545.95px;width:88.00px;height:1.00px;background:#fff"></div>
<span class="t" style="left:9.00px;top:521.01px;font-size:17.00px;line-height:18.99px;color:#000;transform:scaleX(1.0471);">284</span>
<div class="b" style="left:100.00px;top:514.40px;width:569.00px;height:32.15px;background:#e0e0e0;border-bottom:1px solid #a0a0a0"></div>
<div class="b" style="left:99.00px;top:514.40px;width:1.30px;height:32.15px;background:#a8a8a0"></div>
<div class="b" style="left:188.00px;top:514.40px;width:1.30px;height:32.15px;background:#a0a0a0"></div>
<div class="b" style="left:290.50px;top:514.40px;width:1.30px;height:32.15px;background:#a0a0a0"></div>
<div class="b" style="left:392.50px;top:514.40px;width:1.30px;height:32.15px;background:#a0a0a0"></div>
<div class="b" style="left:495.00px;top:514.40px;width:1.30px;height:32.15px;background:#a0a0a0"></div>
<div class="b" style="left:597.50px;top:514.40px;width:1.30px;height:32.15px;background:#a0a0a0"></div>
<span class="t" style="left:196.00px;top:521.01px;font-size:17.00px;line-height:18.99px;color:#000;transform:scaleX(1.0450);">0.719351...</span>
<span class="t" style="left:298.50px;top:521.01px;font-size:17.00px;line-height:18.99px;color:#000;transform:scaleX(1.0450);">0.948534...</span>
<span class="t" style="left:400.50px;top:521.01px;font-size:17.00px;line-height:18.99px;color:#000;transform:scaleX(1.0450);">Q9BTW9...</span>
<span class="t" style="left:503.00px;top:521.01px;font-size:17.00px;line-height:18.99px;color:#000;transform:scaleX(1.0450);">Q9BTW9...</span>
<span class="t" style="left:605.50px;top:521.01px;font-size:17.00px;line-height:18.99px;color:#000;transform:scaleX(1.0450);">Tubulin-specific</span>
<div class="b" style="left:0.00px;top:546.55px;width:100.00px;height:32.15px;background:#ece9d8"></div>
<div class="b" style="left:6.00px;top:577.10px;width:88.00px;height:1.00px;background:#c5c2b2"></div>
<div class="b" style="left:6.00px;top:578.10px;width:88.00px;height:1.00px;background:#fff"></div>
<span class="t" style="left:9.00px;top:553.16px;font-size:17.00px;line-height:18.99px;color:#000;transform:scaleX(1.0471);">285</span>
<div class="b" style="left:100.00px;top:546.55px;width:569.00px;height:32.15px;background:#fff;border-bottom:1px solid #a0a0a0"></div>
<div class="b" style="left:99.00px;top:546.55px;width:1.30px;height:32.15px;background:#a8a8a0"></div>
<div class="b" style="left:188.00px;top:546.55px;width:1.30px;height:32.15px;background:#a0a0a0"></div>
<div class="b" style="left:290.50px;top:546.55px;width:1.30px;height:32.15px;background:#a0a0a0"></div>
<div class="b" style="left:392.50px;top:546.55px;width:1.30px;height:32.15px;background:#a0a0a0"></div>
<div class="b" style="left:495.00px;top:546.55px;width:1.30px;height:32.15px;background:#a0a0a0"></div>
<div class="b" style="left:597.50px;top:546.55px;width:1.30px;height:32.15px;background:#a0a0a0"></div>
<span class="t" style="left:196.00px;top:553.16px;font-size:17.00px;line-height:18.99px;color:#000;transform:scaleX(1.0450);">1.587249...</span>
<span class="t" style="left:298.50px;top:553.16px;font-size:17.00px;line-height:18.99px;color:#000;transform:scaleX(1.0450);">0.289283...</span>
<span class="t" style="left:400.50px;top:553.16px;font-size:17.00px;line-height:18.99px;color:#000;transform:scaleX(1.0450);">P42704;...</span>
<span class="t" style="left:503.00px;top:553.16px;font-size:17.00px;line-height:18.99px;color:#000;transform:scaleX(1.0450);">P42704;...</span>
<span class="t" style="left:605.50px;top:553.16px;font-size:17.00px;line-height:18.99px;color:#000;transform:scaleX(1.0450);">Leucine-rich</span>
<div class="b" style="left:0.00px;top:578.70px;width:100.00px;height:32.15px;background:#ece9d8"></div>
<div class="b" style="left:6.00px;top:609.25px;width:88.00px;height:1.00px;background:#c5c2b2"></div>
<div class="b" style="left:6.00px;top:610.25px;width:88.00px;height:1.00px;background:#fff"></div>
<span class="t" style="left:9.00px;top:585.31px;font-size:17.00px;line-height:18.99px;color:#000;transform:scaleX(1.0471);">286</span>
<div class="b" style="left:100.00px;top:578.70px;width:569.00px;height:32.15px;background:#e0e0e0;border-bottom:1px solid #a0a0a0"></div>
<div class="b" style="left:99.00px;top:578.70px;width:1.30px;height:32.15px;background:#a8a8a0"></div>
<div class="b" style="left:188.00px;top:578.70px;width:1.30px;height:32.15px;background:#a0a0a0"></div>
<div class="b" style="left:290.50px;top:578.70px;width:1.30px;height:32.15px;background:#a0a0a0"></div>
<div class="b" style="left:392.50px;top:578.70px;width:1.30px;height:32.15px;background:#a0a0a0"></div>
<div class="b" style="left:495.00px;top:578.70px;width:1.30px;height:32.15px;background:#a0a0a0"></div>
<div class="b" style="left:597.50px;top:578.70px;width:1.30px;height:32.15px;background:#a0a0a0"></div>
<span class="t" style="left:108.00px;top:585.31px;font-size:17.00px;line-height:18.99px;color:#000;">+</span>
<span class="t" style="left:196.00px;top:585.31px;font-size:17.00px;line-height:18.99px;color:#000;transform:scaleX(1.0450);">2.483427...</span>
<span class="t" style="left:298.50px;top:585.31px;font-size:17.00px;line-height:18.99px;color:#000;transform:scaleX(1.0450);">2.752392...</span>
<span class="t" style="left:400.50px;top:585.31px;font-size:17.00px;line-height:18.99px;color:#000;transform:scaleX(1.0450);">A0A804H...</span>
<span class="t" style="left:503.00px;top:585.31px;font-size:17.00px;line-height:18.99px;color:#000;transform:scaleX(1.0450);">A0A804H...</span>
<span class="t" style="left:605.50px;top:585.31px;font-size:17.00px;line-height:18.99px;color:#000;transform:scaleX(1.0450);">Emerin</span>
<div class="b" style="left:0.00px;top:610.85px;width:100.00px;height:32.15px;background:#ece9d8"></div>
<div class="b" style="left:6.00px;top:641.40px;width:88.00px;height:1.00px;background:#c5c2b2"></div>
<div class="b" style="left:6.00px;top:642.40px;width:88.00px;height:1.00px;background:#fff"></div>
<span class="t" style="left:9.00px;top:617.47px;font-size:17.00px;line-height:18.99px;color:#000;transform:scaleX(1.0471);">287</span>
<div class="b" style="left:100.00px;top:610.85px;width:569.00px;height:32.15px;background:#fff;border-bottom:1px solid #a0a0a0"></div>
<div class="b" style="left:99.00px;top:610.85px;width:1.30px;height:32.15px;background:#a8a8a0"></div>
<div class="b" style="left:188.00px;top:610.85px;width:1.30px;height:32.15px;background:#a0a0a0"></div>
<div class="b" style="left:290.50px;top:610.85px;width:1.30px;height:32.15px;background:#a0a0a0"></div>
<div class="b" style="left:392.50px;top:610.85px;width:1.30px;height:32.15px;background:#a0a0a0"></div>
<div class="b" style="left:495.00px;top:610.85px;width:1.30px;height:32.15px;background:#a0a0a0"></div>
<div class="b" style="left:597.50px;top:610.85px;width:1.30px;height:32.15px;background:#a0a0a0"></div>
<span class="t" style="left:196.00px;top:617.47px;font-size:17.00px;line-height:18.99px;color:#000;transform:scaleX(1.0450);">0.226417...</span>
<span class="t" style="left:298.50px;top:617.47px;font-size:17.00px;line-height:18.99px;color:#000;transform:scaleX(1.0450);">-0.48646...</span>
<span class="t" style="left:400.50px;top:617.47px;font-size:17.00px;line-height:18.99px;color:#000;transform:scaleX(1.0450);">A0A804H...</span>
<span class="t" style="left:503.00px;top:617.47px;font-size:17.00px;line-height:18.99px;color:#000;transform:scaleX(1.0450);">A0A804H...</span>
<span class="t" style="left:605.50px;top:617.47px;font-size:17.00px;line-height:18.99px;color:#000;transform:scaleX(1.0450);">Gamma-glutamyl</span>
<div class="b" style="left:0.00px;top:643.00px;width:100.00px;height:32.15px;background:#ece9d8"></div>
<div class="b" style="left:6.00px;top:673.55px;width:88.00px;height:1.00px;background:#c5c2b2"></div>
<div class="b" style="left:6.00px;top:674.55px;width:88.00px;height:1.00px;background:#fff"></div>
<span class="t" style="left:9.00px;top:649.62px;font-size:17.00px;line-height:18.99px;color:#000;transform:scaleX(1.0471);">288</span>
<div class="b" style="left:100.00px;top:643.00px;width:569.00px;height:32.15px;background:#e0e0e0;border-bottom:1px solid #a0a0a0"></div>
<div class="b" style="left:99.00px;top:643.00px;width:1.30px;height:32.15px;background:#a8a8a0"></div>
<div class="b" style="left:188.00px;top:643.00px;width:1.30px;height:32.15px;background:#a0a0a0"></div>
<div class="b" style="left:290.50px;top:643.00px;width:1.30px;height:32.15px;background:#a0a0a0"></div>
<div class="b" style="left:392.50px;top:643.00px;width:1.30px;height:32.15px;background:#a0a0a0"></div>
<div class="b" style="left:495.00px;top:643.00px;width:1.30px;height:32.15px;background:#a0a0a0"></div>
<div class="b" style="left:597.50px;top:643.00px;width:1.30px;height:32.15px;background:#a0a0a0"></div>
<span class="t" style="left:196.00px;top:649.62px;font-size:17.00px;line-height:18.99px;color:#000;transform:scaleX(1.0450);">0.760644...</span>
<span class="t" style="left:298.50px;top:649.62px;font-size:17.00px;line-height:18.99px;color:#000;transform:scaleX(1.0450);">0.376558...</span>
<span class="t" style="left:400.50px;top:649.62px;font-size:17.00px;line-height:18.99px;color:#000;transform:scaleX(1.0450);">A0A804H...</span>
<span class="t" style="left:503.00px;top:649.62px;font-size:17.00px;line-height:18.99px;color:#000;transform:scaleX(1.0450);">A0A804H...</span>
<span class="t" style="left:605.50px;top:649.62px;font-size:17.00px;line-height:18.99px;color:#000;transform:scaleX(1.0450);">Ubiquitin</span>
<div class="b" style="left:0.00px;top:675.15px;width:100.00px;height:32.15px;background:#ece9d8"></div>
<div class="b" style="left:6.00px;top:705.70px;width:88.00px;height:1.00px;background:#c5c2b2"></div>
<div class="b" style="left:6.00px;top:706.70px;width:88.00px;height:1.00px;background:#fff"></div>
<span class="t" style="left:9.00px;top:681.76px;font-size:17.00px;line-height:18.99px;color:#000;transform:scaleX(1.0471);">289</span>
<div class="b" style="left:100.00px;top:675.15px;width:569.00px;height:32.15px;background:#fff;border-bottom:1px solid #a0a0a0"></div>
<div class="b" style="left:99.00px;top:675.15px;width:1.30px;height:32.15px;background:#a8a8a0"></div>
<div class="b" style="left:188.00px;top:675.15px;width:1.30px;height:32.15px;background:#a0a0a0"></div>
<div class="b" style="left:290.50px;top:675.15px;width:1.30px;height:32.15px;background:#a0a0a0"></div>
<div class="b" style="left:392.50px;top:675.15px;width:1.30px;height:32.15px;background:#a0a0a0"></div>
<div class="b" style="left:495.00px;top:675.15px;width:1.30px;height:32.15px;background:#a0a0a0"></div>
<div class="b" style="left:597.50px;top:675.15px;width:1.30px;height:32.15px;background:#a0a0a0"></div>
<span class="t" style="left:196.00px;top:681.76px;font-size:17.00px;line-height:18.99px;color:#000;transform:scaleX(1.0450);">0.967626...</span>
<span class="t" style="left:298.50px;top:681.76px;font-size:17.00px;line-height:18.99px;color:#000;transform:scaleX(1.0450);">1.114266...</span>
<span class="t" style="left:400.50px;top:681.76px;font-size:17.00px;line-height:18.99px;color:#000;transform:scaleX(1.0450);">A0A804H...</span>
<span class="t" style="left:503.00px;top:681.76px;font-size:17.00px;line-height:18.99px;color:#000;transform:scaleX(1.0450);">A0A804H...</span>
<span class="t" style="left:605.50px;top:681.76px;font-size:17.00px;line-height:18.99px;color:#000;transform:scaleX(1.0450);">Dolichol-phosphate</span>
<div class="b" style="left:97.50px;top:0.00px;width:3.00px;height:700.00px;background:linear-gradient(90deg,#d2cfbf,#a9a697)"></div>
</div>
<div class="b" style="left:1772.00px;top:206.00px;width:25.00px;height:728.00px;background:linear-gradient(90deg,#fefefe,#f3f2ea 60%,#eceadc)"></div>
<div class="b" style="left:1775.00px;top:206.50px;width:19.50px;height:21.50px;background:linear-gradient(135deg,#dbe6fe,#b6caf6);border:1px solid #fff;border-radius:3px;box-shadow:0 0 0 0.5px #b4c4ee"></div>
<div class="b" style="left:1775.00px;top:909.00px;width:19.50px;height:21.50px;background:linear-gradient(135deg,#dbe6fe,#b6caf6);border:1px solid #fff;border-radius:3px;box-shadow:0 0 0 0.5px #b4c4ee"></div>
<div class="b" style="left:1775.00px;top:322.50px;width:19.50px;height:6.50px;background:linear-gradient(135deg,#dbe6fe,#b6caf6);border:1px solid #fff;border-radius:3px;box-shadow:0 0 0 0.5px #b4c4ee"></div>
<div class="b" style="left:1103.00px;top:934.00px;width:694.00px;height:24.00px;background:linear-gradient(#ffffff,#f8f8f3 60%,#f0efe5)"></div>
<div class="b" style="left:1772.00px;top:934.00px;width:25.00px;height:24.00px;background:#ece9d8"></div>
<div class="b" style="left:1103.00px;top:936.00px;width:21.00px;height:20.00px;background:linear-gradient(135deg,#dbe6fe,#b6caf6);border:1px solid #fff;border-radius:3px;box-shadow:0 0 0 0.5px #b4c4ee"></div>
<div class="b" style="left:1748.00px;top:936.00px;width:22.00px;height:20.00px;background:linear-gradient(135deg,#dbe6fe,#b6caf6);border:1px solid #fff;border-radius:3px;box-shadow:0 0 0 0.5px #b4c4ee"></div>
<div class="b" style="left:1127.00px;top:936.00px;width:68.00px;height:20.00px;background:linear-gradient(135deg,#dbe6fe,#b6caf6);border:1px solid #fff;border-radius:3px;box-shadow:0 0 0 0.5px #b4c4ee"></div>
<div class="b" style="left:1102.00px;top:957.50px;width:696.00px;height:1.00px;background:#aca899"></div>
<span class="t" style="left:1110.50px;top:960.07px;font-size:16.50px;line-height:18.43px;color:#000;transform:scaleX(0.9086);">1,951 items</span>
<span class="t" style="left:1208.30px;top:960.07px;font-size:16.50px;line-height:18.43px;color:#000;transform:scaleX(0.9360);">5 selected</span>
<div class="b" style="left:1697.00px;top:960.00px;width:71.00px;height:27.50px;border:1px solid #adadad;background:#e1e1e1"></div>
<span class="t" style="left:1703.00px;top:966.33px;font-size:14.00px;line-height:15.64px;color:#000;transform:scaleX(0.8742);">100 %</span>
<svg style="left:1750px;top:970px" width="14" height="9"><path d="M1 1l5.5 5.5L12 1" fill="none" stroke="#444" stroke-width="1.3"/></svg>
<div class="b" style="left:1771.00px;top:960.00px;width:25.00px;height:27.50px;border:1px solid #adadad;background:#e1e1e1"></div>
<svg style="left:1778px;top:966px" width="12" height="16"><path d="M6 15V2M2.5 6L6 2l3.5 4" fill="none" stroke="#222" stroke-width="1.4"/></svg>
<svg style="left:1118.00px;top:172.00px" width="26" height="27" viewBox="0 0 26 27"><path d="M12.80 13.50L10.20 2.09A11.70 11.70 0 0 1 15.63 2.15z" fill="#ffd800"/><path d="M12.80 13.50L15.40 2.09A11.70 11.70 0 0 1 20.28 4.50z" fill="#d4e010"/><path d="M12.80 13.50L20.09 4.35A11.70 11.70 0 0 1 23.44 8.64z" fill="#7ac424"/><path d="M12.80 13.50L23.34 8.42A11.70 11.70 0 0 1 24.50 13.73z" fill="#2fa84a"/><path d="M12.80 13.50L24.50 13.50A11.70 11.70 0 0 1 23.24 18.79z" fill="#2a9a8a"/><path d="M12.80 13.50L23.34 18.58A11.70 11.70 0 0 1 19.91 22.79z" fill="#3a7ac8"/><path d="M12.80 13.50L20.09 22.65A11.70 11.70 0 0 1 15.17 24.96z" fill="#6a5ac8"/><path d="M12.80 13.50L15.40 24.91A11.70 11.70 0 0 1 9.97 24.85z" fill="#a04ab8"/><path d="M12.80 13.50L10.20 24.91A11.70 11.70 0 0 1 5.32 22.50z" fill="#e040a0"/><path d="M12.80 13.50L5.51 22.65A11.70 11.70 0 0 1 2.16 18.36z" fill="#ff4080"/><path d="M12.80 13.50L2.26 18.58A11.70 11.70 0 0 1 1.10 13.27z" fill="#ff5030"/><path d="M12.80 13.50L1.10 13.50A11.70 11.70 0 0 1 2.36 8.21z" fill="#ff7a10"/><path d="M12.80 13.50L2.26 8.42A11.70 11.70 0 0 1 5.69 4.21z" fill="#ff9a00"/><path d="M12.80 13.50L5.51 4.35A11.70 11.70 0 0 1 10.43 2.04z" fill="#ffb800"/></svg>
<svg style="left:1153.00px;top:173.00px" width="24" height="26" viewBox="0 0 24 26"><defs><radialGradient id="pg" cx="0.42" cy="0.42" r="0.62"><stop offset="0" stop-color="#ffff40"/><stop offset="0.6" stop-color="#f0e020"/><stop offset="1" stop-color="#b89010"/></radialGradient></defs>
<path d="M22 5.300A11.200 11.200 0 1 0 22 21.300L12.500 13.300z" fill="url(#pg)" stroke="#6b5200" stroke-width="0.900" stroke-linejoin="round"/><circle cx="13" cy="6.600" r="1.400" fill="#111"/></svg>
<div class="b" style="left:1186.50px;top:174.00px;width:23.50px;height:23.50px;background:#fff"></div>
<svg style="left:1186.00px;top:173.00px" width="25" height="26" viewBox="0 0 25 26"><g fill="none" stroke="#ffb400"><circle cx="11.900" cy="12.900" r="10.700" stroke-width="1.300"/><circle cx="11.900" cy="14" r="9.300" stroke-width="0.800"/><circle cx="11.900" cy="15.300" r="8" stroke-width="1.500"/></g></svg>
<svg style="left:1220.00px;top:172.00px" width="26" height="26" viewBox="0 0 26 26"><path d="M3.800 10.200L5.500 7L8.800 6.300L20.800 15.500L14.300 22.300L4.300 14z" fill="#808080"/><circle cx="6.600" cy="9.800" r="1" fill="#a0a0a0"/></svg>
<div class="b" style="left:1253.80px;top:174.00px;width:23.00px;height:23.50px;background:#fff"></div>
<svg style="left:1253.80px;top:174.00px" width="23" height="23.5" viewBox="0 0 23 23.5"><rect x="1" y="1" width="7" height="7.500" fill="#dbe6f5"/><path d="M1.500 7.500c0-4 2-6 6-6l-1 2.800c-2.200 0-3 1.200-3 3.200z" fill="#22aa22"/><path d="M11.900 5.300v16.400M3.700 13.500h16.400" stroke="#d23c1e" stroke-width="2.500"/></svg>
<div class="b" style="left:1287.20px;top:174.00px;width:23.00px;height:23.50px;background:#fff"></div>
<svg style="left:1287.20px;top:174.00px" width="23" height="23.5" viewBox="0 0 23 23.5"><rect x="1" y="1" width="7" height="7.500" fill="#dbe6f5"/><path d="M1.500 7.500c0-4 2-6 6-6l-1 2.800c-2.200 0-3 1.200-3 3.200z" fill="#22aa22"/><path d="M11.900 5.300v16.400M3.700 13.500h16.400" stroke="#d23c1e" stroke-width="2.500"/></svg>
</body></html>
